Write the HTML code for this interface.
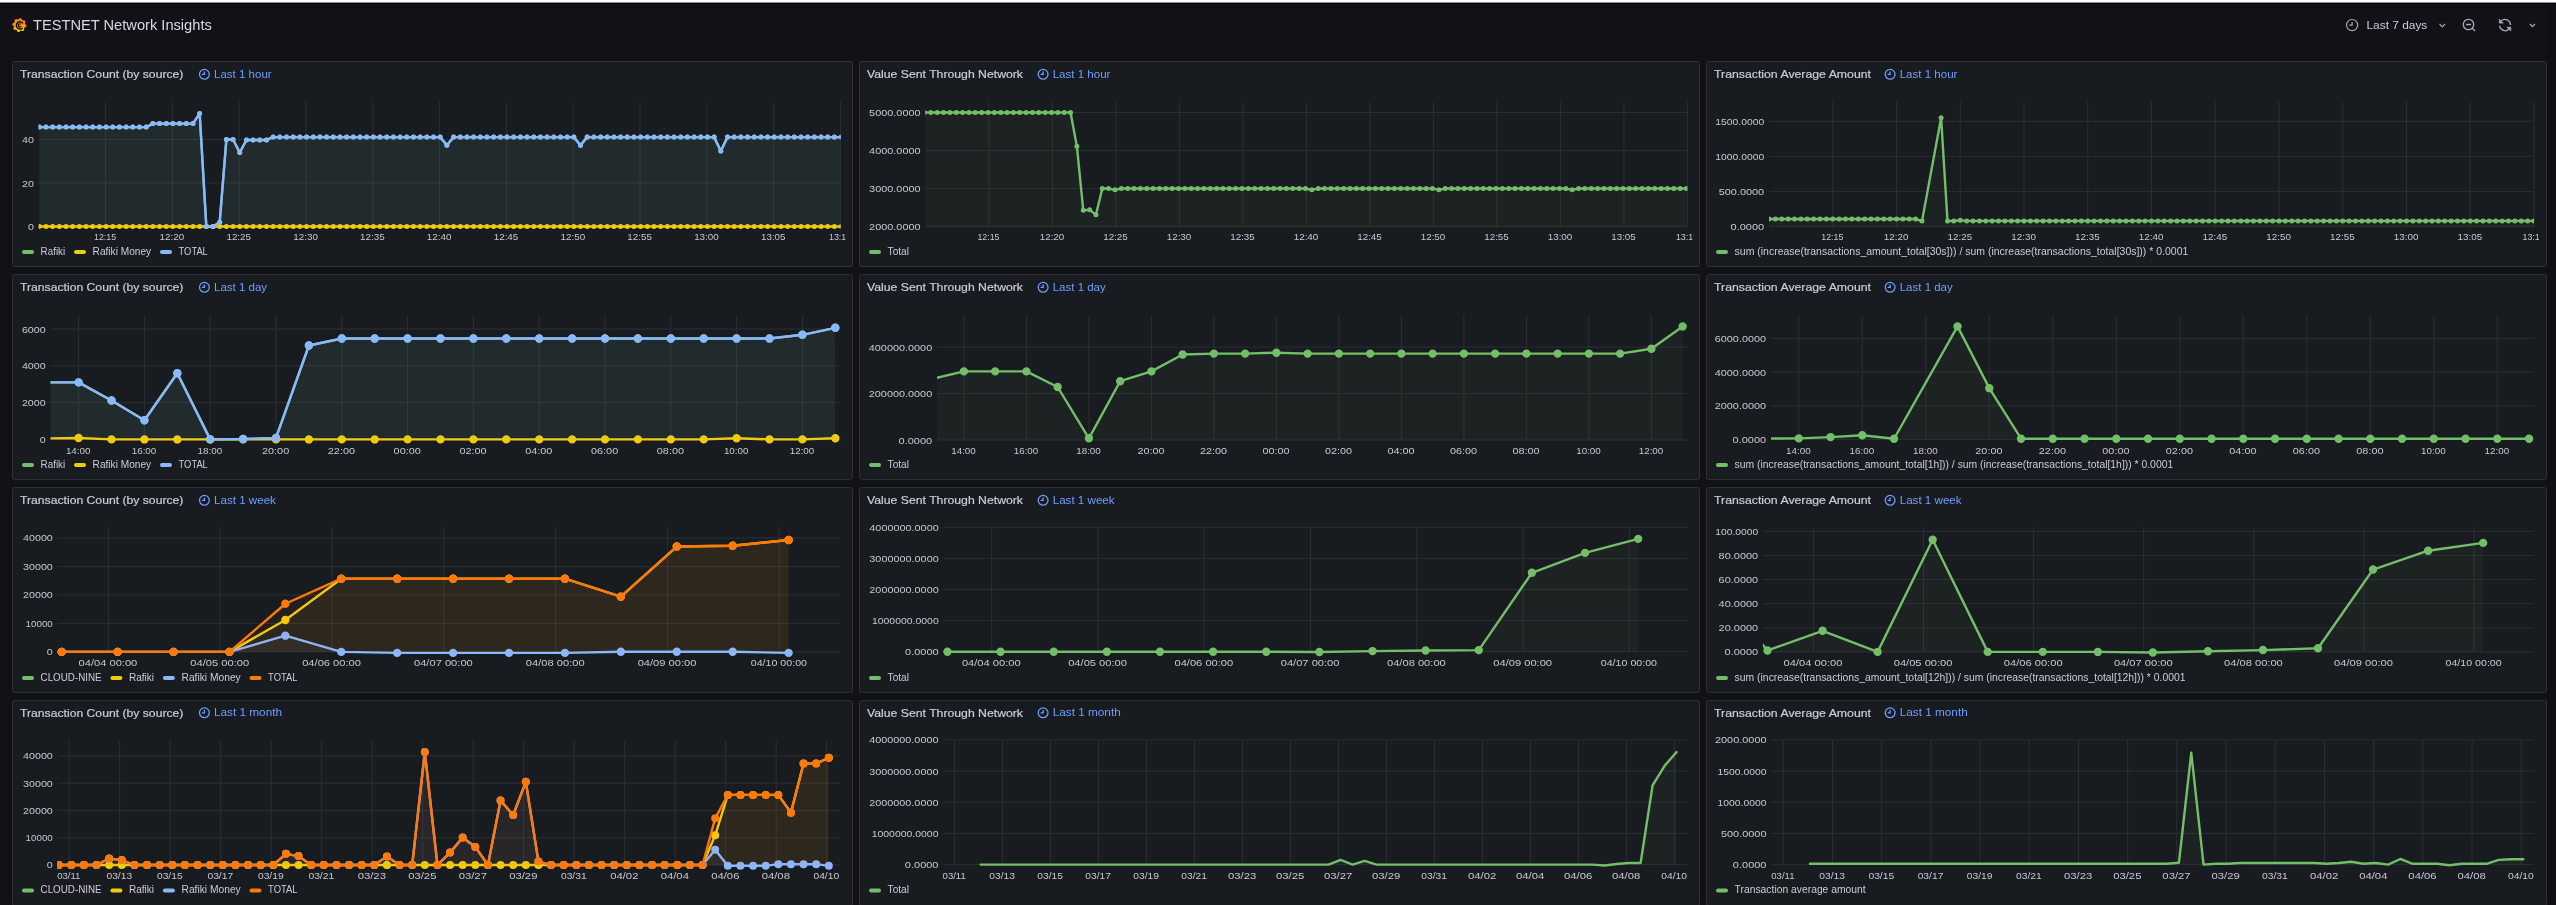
<!DOCTYPE html>
<html><head><meta charset="utf-8"><title>TESTNET Network Insights</title>
<style>html,body{margin:0;padding:0;background:#111217;width:2556px;height:905px;overflow:hidden}
svg{display:block;font-family:"Liberation Sans", sans-serif;will-change:transform}</style></head>
<body><svg width="2556" height="905" viewBox="0 0 2556 905">
<defs><linearGradient id="lg" gradientUnits="userSpaceOnUse" x1="0" y1="18" x2="0" y2="32"><stop offset="0" stop-color="#f47a24"/><stop offset="0.55" stop-color="#f98f1c"/><stop offset="1" stop-color="#f9d40c"/></linearGradient><clipPath id="c1"><rect x="13" y="211" width="832.5" height="40"/></clipPath><clipPath id="c2"><rect x="38.7" y="95.8" width="801.8" height="137.2"/></clipPath><clipPath id="c3"><rect x="860" y="211" width="832.4" height="40"/></clipPath><clipPath id="c4"><rect x="925.4" y="95.8" width="762" height="137.3"/></clipPath><clipPath id="c5"><rect x="1707" y="211" width="832" height="40"/></clipPath><clipPath id="c6"><rect x="1769" y="95.8" width="765" height="137.2"/></clipPath><clipPath id="c7"><rect x="13" y="424" width="832.4" height="40"/></clipPath><clipPath id="c8"><rect x="50.5" y="308.3" width="789.9" height="136.6"/></clipPath><clipPath id="c9"><rect x="860" y="424" width="832.4" height="40"/></clipPath><clipPath id="c10"><rect x="937" y="308.3" width="750.4" height="137.3"/></clipPath><clipPath id="c11"><rect x="1707" y="424" width="831.9" height="40"/></clipPath><clipPath id="c12"><rect x="1771" y="308.3" width="762.9" height="136.6"/></clipPath><clipPath id="c13"><rect x="13" y="637" width="832.4" height="40"/></clipPath><clipPath id="c14"><rect x="57.6" y="520.8" width="782.8" height="137.1"/></clipPath><clipPath id="c15"><rect x="860" y="637" width="832.4" height="40"/></clipPath><clipPath id="c16"><rect x="943.5" y="520.8" width="743.9" height="136.9"/></clipPath><clipPath id="c17"><rect x="1707" y="637" width="832" height="40"/></clipPath><clipPath id="c18"><rect x="1763" y="520.8" width="771" height="137.1"/></clipPath><clipPath id="c19"><rect x="13" y="849.5" width="832.3" height="40"/></clipPath><clipPath id="c20"><rect x="57.6" y="733.9" width="782.7" height="136.9"/></clipPath><clipPath id="c21"><rect x="860" y="849.5" width="832.3" height="40"/></clipPath><clipPath id="c22"><rect x="943.3" y="733.2" width="744" height="137.2"/></clipPath><clipPath id="c23"><rect x="1707" y="849.5" width="832" height="40"/></clipPath><clipPath id="c24"><rect x="1771.3" y="733.2" width="762.7" height="137.2"/></clipPath></defs>
<rect width="2556" height="905" fill="#111217"/><rect x="2547" y="4" width="9" height="901" fill="#0f1014"/>
<rect x="0" y="0" width="2556" height="2" fill="#ffffff"/><rect x="0" y="2" width="2556" height="1" fill="#8e8f93"/><rect x="0" y="3" width="2556" height="1" fill="#05060a"/><g fill="url(#lg)"><circle cx="19.4" cy="25.0" r="5.9"/><circle cx="20.24" cy="19.46" r="1.5"/><circle cx="23.91" cy="21.68" r="1.5"/><circle cx="24.94" cy="25.84" r="1.5"/><circle cx="22.72" cy="29.51" r="1.5"/><circle cx="18.56" cy="30.54" r="1.5"/><circle cx="14.89" cy="28.32" r="1.5"/><circle cx="13.86" cy="24.16" r="1.5"/><circle cx="16.08" cy="20.49" r="1.5"/></g><path d="M22.95 23.34A3.6 3.6 0 1 0 22.55 27.95" fill="none" stroke="#0d0e12" stroke-width="1.4"/><path d="M20.55 24.2A1.5 1.5 0 1 0 21.1 26.25" fill="none" stroke="#0d0e12" stroke-width="1.2"/><text x="33" y="29.8" font-size="14.8" fill="#d8d9e3" textLength="178.8" lengthAdjust="spacingAndGlyphs">TESTNET Network Insights</text><circle cx="2352.1" cy="25.1" r="5.6" fill="none" stroke="#a8a9b3" stroke-width="1.2"/><path d="M2352.1 22.02V25.1H2349.3" fill="none" stroke="#a8a9b3" stroke-width="1.2"/><text x="2366.5" y="28.9" font-size="11.6" fill="#ccccdc" textLength="60.8" lengthAdjust="spacingAndGlyphs">Last 7 days</text><path d="M2439.5 23.9L2442.3 26.8L2445.1 23.9" fill="none" stroke="#a8a9b3" stroke-width="1.2"/><circle cx="2468.5" cy="24.5" r="5.2" fill="none" stroke="#a8a9b3" stroke-width="1.3"/><path d="M2466 24.5H2471M2472.3 28.3L2475 31" stroke="#a8a9b3" stroke-width="1.3" fill="none"/><path d="M2510.5 25A5.6 5.6 0 0 0 2501 21M2499.6 25.8A5.6 5.6 0 0 0 2509 29.3" fill="none" stroke="#a8a9b3" stroke-width="1.3"/><path d="M2499.3 19.2L2499.4 23.2L2503.3 23.0Z M2510.9 31L2510.7 27L2506.8 27.3Z" fill="#a8a9b3" stroke="#a8a9b3" stroke-width="0.6"/><path d="M2529.8 24L2532.4 26.6L2535 24" fill="none" stroke="#a8a9b3" stroke-width="1.2"/><rect x="12.5" y="61.5" width="840" height="205" rx="2" fill="#181b1f" stroke="#2e3035" stroke-width="1"/><text x="20" y="78" font-size="11.4" fill="#ccccdc" textLength="163.4" lengthAdjust="spacingAndGlyphs" stroke="#ccccdc" stroke-width="0.2">Transaction Count (by source)</text><circle cx="204.4" cy="74.3" r="4.9" fill="none" stroke="#6e9fff" stroke-width="1.3"/><path d="M204.4 71.6V74.3H201.95" fill="none" stroke="#6e9fff" stroke-width="1.3"/><text x="214" y="77.9" font-size="11.5" fill="#6e9fff" textLength="57.7" lengthAdjust="spacingAndGlyphs">Last 1 hour</text><g transform="translate(0,0)"><path d="M38.7 226.5H840.5M38.7 183H840.5M38.7 139.5H840.5M105.52 101.8V227M172.33 101.8V227M239.14 101.8V227M305.96 101.8V227M372.77 101.8V227M439.59 101.8V227M506.4 101.8V227M573.22 101.8V227M640.04 101.8V227M706.85 101.8V227M773.66 101.8V227M840.48 101.8V227" stroke="#2c2e33" stroke-width="1" fill="none"/><text x="33.9" y="230" font-size="9.9" fill="#c7c8d2" text-anchor="end" textLength="5.95" lengthAdjust="spacingAndGlyphs">0</text><text x="33.9" y="186.5" font-size="9.9" fill="#c7c8d2" text-anchor="end" textLength="11.9" lengthAdjust="spacingAndGlyphs">20</text><text x="33.9" y="143" font-size="9.9" fill="#c7c8d2" text-anchor="end" textLength="11.9" lengthAdjust="spacingAndGlyphs">40</text></g><text x="105.11" y="240" font-size="9.9" fill="#c7c8d2" text-anchor="middle" textLength="22.1" lengthAdjust="spacingAndGlyphs" clip-path="url(#c1)">12:15</text><text x="171.93" y="240" font-size="9.9" fill="#c7c8d2" text-anchor="middle" textLength="24.65" lengthAdjust="spacingAndGlyphs" clip-path="url(#c1)">12:20</text><text x="238.74" y="240" font-size="9.9" fill="#c7c8d2" text-anchor="middle" textLength="24.65" lengthAdjust="spacingAndGlyphs" clip-path="url(#c1)">12:25</text><text x="305.56" y="240" font-size="9.9" fill="#c7c8d2" text-anchor="middle" textLength="24.65" lengthAdjust="spacingAndGlyphs" clip-path="url(#c1)">12:30</text><text x="372.38" y="240" font-size="9.9" fill="#c7c8d2" text-anchor="middle" textLength="24.65" lengthAdjust="spacingAndGlyphs" clip-path="url(#c1)">12:35</text><text x="439.19" y="240" font-size="9.9" fill="#c7c8d2" text-anchor="middle" textLength="24.65" lengthAdjust="spacingAndGlyphs" clip-path="url(#c1)">12:40</text><text x="506" y="240" font-size="9.9" fill="#c7c8d2" text-anchor="middle" textLength="24.65" lengthAdjust="spacingAndGlyphs" clip-path="url(#c1)">12:45</text><text x="572.82" y="240" font-size="9.9" fill="#c7c8d2" text-anchor="middle" textLength="24.65" lengthAdjust="spacingAndGlyphs" clip-path="url(#c1)">12:50</text><text x="639.64" y="240" font-size="9.9" fill="#c7c8d2" text-anchor="middle" textLength="24.65" lengthAdjust="spacingAndGlyphs" clip-path="url(#c1)">12:55</text><text x="706.45" y="240" font-size="9.9" fill="#c7c8d2" text-anchor="middle" textLength="24.65" lengthAdjust="spacingAndGlyphs" clip-path="url(#c1)">13:00</text><text x="773.26" y="240" font-size="9.9" fill="#c7c8d2" text-anchor="middle" textLength="24.65" lengthAdjust="spacingAndGlyphs" clip-path="url(#c1)">13:05</text><text x="840.08" y="240" font-size="9.9" fill="#c7c8d2" text-anchor="middle" textLength="22.1" lengthAdjust="spacingAndGlyphs" clip-path="url(#c1)">13:10</text><g transform="translate(0,0)"><g clip-path="url(#c2)"><path d="M39.3 226.5 L39.3 127.1 L45.98 127.1 L52.66 127.1 L59.34 127.1 L66.03 127.1 L72.71 127.1 L79.39 127.1 L86.07 127.1 L92.75 127.1 L99.43 127.1 L106.11 127.1 L112.8 127.1 L119.48 127.1 L126.16 127.1 L132.84 127.1 L139.52 127.1 L146.2 127.1 L152.89 123.62 L159.57 123.62 L166.25 123.62 L172.93 123.62 L179.61 123.62 L186.29 123.62 L192.97 123.62 L199.66 113.4 L206.34 226.5 L213.02 226.5 L219.7 222.15 L226.38 139.5 L233.06 139.5 L239.75 152.55 L246.43 139.94 L253.11 139.94 L259.79 139.94 L266.47 139.94 L273.15 137.11 L279.83 137.11 L286.52 137.11 L293.2 137.11 L299.88 137.11 L306.56 137.11 L313.24 137.11 L319.92 137.11 L326.6 137.11 L333.29 137.11 L339.97 137.11 L346.65 137.11 L353.33 137.11 L360.01 137.11 L366.69 137.11 L373.38 137.11 L380.06 137.11 L386.74 137.11 L393.42 137.11 L400.1 137.11 L406.78 137.11 L413.46 137.11 L420.15 137.11 L426.83 137.11 L433.51 137.11 L440.19 137.11 L446.87 145.16 L453.55 137.11 L460.23 137.11 L466.92 137.11 L473.6 137.11 L480.28 137.11 L486.96 137.11 L493.64 137.11 L500.32 137.11 L507 137.11 L513.69 137.11 L520.37 137.11 L527.05 137.11 L533.73 137.11 L540.41 137.11 L547.09 137.11 L553.78 137.11 L560.46 137.11 L567.14 137.11 L573.82 137.11 L580.5 145.16 L587.18 137.11 L593.86 137.11 L600.55 137.11 L607.23 137.11 L613.91 137.11 L620.59 137.11 L627.27 137.11 L633.95 137.11 L640.63 137.11 L647.32 137.11 L654 137.11 L660.68 137.11 L667.36 137.11 L674.04 137.11 L680.72 137.11 L687.41 137.11 L694.09 137.11 L700.77 137.11 L707.45 137.11 L714.13 137.11 L720.81 151.03 L727.49 137.11 L734.18 137.11 L740.86 137.11 L747.54 137.11 L754.22 137.11 L760.9 137.11 L767.58 137.11 L774.26 137.11 L780.95 137.11 L787.63 137.11 L794.31 137.11 L800.99 137.11 L807.67 137.11 L814.35 137.11 L821.04 137.11 L827.72 137.11 L834.4 137.11 L841.08 137.11 L841.08 226.5 Z" fill="#73bf69" fill-opacity="0.05" stroke="none"/><path d="M39.3 127.1 L45.98 127.1 L52.66 127.1 L59.34 127.1 L66.03 127.1 L72.71 127.1 L79.39 127.1 L86.07 127.1 L92.75 127.1 L99.43 127.1 L106.11 127.1 L112.8 127.1 L119.48 127.1 L126.16 127.1 L132.84 127.1 L139.52 127.1 L146.2 127.1 L152.89 123.62 L159.57 123.62 L166.25 123.62 L172.93 123.62 L179.61 123.62 L186.29 123.62 L192.97 123.62 L199.66 113.4 L206.34 226.5 L213.02 226.5 L219.7 222.15 L226.38 139.5 L233.06 139.5 L239.75 152.55 L246.43 139.94 L253.11 139.94 L259.79 139.94 L266.47 139.94 L273.15 137.11 L279.83 137.11 L286.52 137.11 L293.2 137.11 L299.88 137.11 L306.56 137.11 L313.24 137.11 L319.92 137.11 L326.6 137.11 L333.29 137.11 L339.97 137.11 L346.65 137.11 L353.33 137.11 L360.01 137.11 L366.69 137.11 L373.38 137.11 L380.06 137.11 L386.74 137.11 L393.42 137.11 L400.1 137.11 L406.78 137.11 L413.46 137.11 L420.15 137.11 L426.83 137.11 L433.51 137.11 L440.19 137.11 L446.87 145.16 L453.55 137.11 L460.23 137.11 L466.92 137.11 L473.6 137.11 L480.28 137.11 L486.96 137.11 L493.64 137.11 L500.32 137.11 L507 137.11 L513.69 137.11 L520.37 137.11 L527.05 137.11 L533.73 137.11 L540.41 137.11 L547.09 137.11 L553.78 137.11 L560.46 137.11 L567.14 137.11 L573.82 137.11 L580.5 145.16 L587.18 137.11 L593.86 137.11 L600.55 137.11 L607.23 137.11 L613.91 137.11 L620.59 137.11 L627.27 137.11 L633.95 137.11 L640.63 137.11 L647.32 137.11 L654 137.11 L660.68 137.11 L667.36 137.11 L674.04 137.11 L680.72 137.11 L687.41 137.11 L694.09 137.11 L700.77 137.11 L707.45 137.11 L714.13 137.11 L720.81 151.03 L727.49 137.11 L734.18 137.11 L740.86 137.11 L747.54 137.11 L754.22 137.11 L760.9 137.11 L767.58 137.11 L774.26 137.11 L780.95 137.11 L787.63 137.11 L794.31 137.11 L800.99 137.11 L807.67 137.11 L814.35 137.11 L821.04 137.11 L827.72 137.11 L834.4 137.11 L841.08 137.11" fill="none" stroke="#73bf69" stroke-width="2.4" stroke-linejoin="round" stroke-linecap="round"/><path d="M36.8 127.1a2.5 2.5 0 1 0 5 0a2.5 2.5 0 1 0 -5 0M43.48 127.1a2.5 2.5 0 1 0 5 0a2.5 2.5 0 1 0 -5 0M50.16 127.1a2.5 2.5 0 1 0 5 0a2.5 2.5 0 1 0 -5 0M56.84 127.1a2.5 2.5 0 1 0 5 0a2.5 2.5 0 1 0 -5 0M63.53 127.1a2.5 2.5 0 1 0 5 0a2.5 2.5 0 1 0 -5 0M70.21 127.1a2.5 2.5 0 1 0 5 0a2.5 2.5 0 1 0 -5 0M76.89 127.1a2.5 2.5 0 1 0 5 0a2.5 2.5 0 1 0 -5 0M83.57 127.1a2.5 2.5 0 1 0 5 0a2.5 2.5 0 1 0 -5 0M90.25 127.1a2.5 2.5 0 1 0 5 0a2.5 2.5 0 1 0 -5 0M96.93 127.1a2.5 2.5 0 1 0 5 0a2.5 2.5 0 1 0 -5 0M103.61 127.1a2.5 2.5 0 1 0 5 0a2.5 2.5 0 1 0 -5 0M110.3 127.1a2.5 2.5 0 1 0 5 0a2.5 2.5 0 1 0 -5 0M116.98 127.1a2.5 2.5 0 1 0 5 0a2.5 2.5 0 1 0 -5 0M123.66 127.1a2.5 2.5 0 1 0 5 0a2.5 2.5 0 1 0 -5 0M130.34 127.1a2.5 2.5 0 1 0 5 0a2.5 2.5 0 1 0 -5 0M137.02 127.1a2.5 2.5 0 1 0 5 0a2.5 2.5 0 1 0 -5 0M143.7 127.1a2.5 2.5 0 1 0 5 0a2.5 2.5 0 1 0 -5 0M150.39 123.62a2.5 2.5 0 1 0 5 0a2.5 2.5 0 1 0 -5 0M157.07 123.62a2.5 2.5 0 1 0 5 0a2.5 2.5 0 1 0 -5 0M163.75 123.62a2.5 2.5 0 1 0 5 0a2.5 2.5 0 1 0 -5 0M170.43 123.62a2.5 2.5 0 1 0 5 0a2.5 2.5 0 1 0 -5 0M177.11 123.62a2.5 2.5 0 1 0 5 0a2.5 2.5 0 1 0 -5 0M183.79 123.62a2.5 2.5 0 1 0 5 0a2.5 2.5 0 1 0 -5 0M190.47 123.62a2.5 2.5 0 1 0 5 0a2.5 2.5 0 1 0 -5 0M197.16 113.4a2.5 2.5 0 1 0 5 0a2.5 2.5 0 1 0 -5 0M203.84 226.5a2.5 2.5 0 1 0 5 0a2.5 2.5 0 1 0 -5 0M210.52 226.5a2.5 2.5 0 1 0 5 0a2.5 2.5 0 1 0 -5 0M217.2 222.15a2.5 2.5 0 1 0 5 0a2.5 2.5 0 1 0 -5 0M223.88 139.5a2.5 2.5 0 1 0 5 0a2.5 2.5 0 1 0 -5 0M230.56 139.5a2.5 2.5 0 1 0 5 0a2.5 2.5 0 1 0 -5 0M237.25 152.55a2.5 2.5 0 1 0 5 0a2.5 2.5 0 1 0 -5 0M243.93 139.94a2.5 2.5 0 1 0 5 0a2.5 2.5 0 1 0 -5 0M250.61 139.94a2.5 2.5 0 1 0 5 0a2.5 2.5 0 1 0 -5 0M257.29 139.94a2.5 2.5 0 1 0 5 0a2.5 2.5 0 1 0 -5 0M263.97 139.94a2.5 2.5 0 1 0 5 0a2.5 2.5 0 1 0 -5 0M270.65 137.11a2.5 2.5 0 1 0 5 0a2.5 2.5 0 1 0 -5 0M277.33 137.11a2.5 2.5 0 1 0 5 0a2.5 2.5 0 1 0 -5 0M284.02 137.11a2.5 2.5 0 1 0 5 0a2.5 2.5 0 1 0 -5 0M290.7 137.11a2.5 2.5 0 1 0 5 0a2.5 2.5 0 1 0 -5 0M297.38 137.11a2.5 2.5 0 1 0 5 0a2.5 2.5 0 1 0 -5 0M304.06 137.11a2.5 2.5 0 1 0 5 0a2.5 2.5 0 1 0 -5 0M310.74 137.11a2.5 2.5 0 1 0 5 0a2.5 2.5 0 1 0 -5 0M317.42 137.11a2.5 2.5 0 1 0 5 0a2.5 2.5 0 1 0 -5 0M324.1 137.11a2.5 2.5 0 1 0 5 0a2.5 2.5 0 1 0 -5 0M330.79 137.11a2.5 2.5 0 1 0 5 0a2.5 2.5 0 1 0 -5 0M337.47 137.11a2.5 2.5 0 1 0 5 0a2.5 2.5 0 1 0 -5 0M344.15 137.11a2.5 2.5 0 1 0 5 0a2.5 2.5 0 1 0 -5 0M350.83 137.11a2.5 2.5 0 1 0 5 0a2.5 2.5 0 1 0 -5 0M357.51 137.11a2.5 2.5 0 1 0 5 0a2.5 2.5 0 1 0 -5 0M364.19 137.11a2.5 2.5 0 1 0 5 0a2.5 2.5 0 1 0 -5 0M370.88 137.11a2.5 2.5 0 1 0 5 0a2.5 2.5 0 1 0 -5 0M377.56 137.11a2.5 2.5 0 1 0 5 0a2.5 2.5 0 1 0 -5 0M384.24 137.11a2.5 2.5 0 1 0 5 0a2.5 2.5 0 1 0 -5 0M390.92 137.11a2.5 2.5 0 1 0 5 0a2.5 2.5 0 1 0 -5 0M397.6 137.11a2.5 2.5 0 1 0 5 0a2.5 2.5 0 1 0 -5 0M404.28 137.11a2.5 2.5 0 1 0 5 0a2.5 2.5 0 1 0 -5 0M410.96 137.11a2.5 2.5 0 1 0 5 0a2.5 2.5 0 1 0 -5 0M417.65 137.11a2.5 2.5 0 1 0 5 0a2.5 2.5 0 1 0 -5 0M424.33 137.11a2.5 2.5 0 1 0 5 0a2.5 2.5 0 1 0 -5 0M431.01 137.11a2.5 2.5 0 1 0 5 0a2.5 2.5 0 1 0 -5 0M437.69 137.11a2.5 2.5 0 1 0 5 0a2.5 2.5 0 1 0 -5 0M444.37 145.16a2.5 2.5 0 1 0 5 0a2.5 2.5 0 1 0 -5 0M451.05 137.11a2.5 2.5 0 1 0 5 0a2.5 2.5 0 1 0 -5 0M457.73 137.11a2.5 2.5 0 1 0 5 0a2.5 2.5 0 1 0 -5 0M464.42 137.11a2.5 2.5 0 1 0 5 0a2.5 2.5 0 1 0 -5 0M471.1 137.11a2.5 2.5 0 1 0 5 0a2.5 2.5 0 1 0 -5 0M477.78 137.11a2.5 2.5 0 1 0 5 0a2.5 2.5 0 1 0 -5 0M484.46 137.11a2.5 2.5 0 1 0 5 0a2.5 2.5 0 1 0 -5 0M491.14 137.11a2.5 2.5 0 1 0 5 0a2.5 2.5 0 1 0 -5 0M497.82 137.11a2.5 2.5 0 1 0 5 0a2.5 2.5 0 1 0 -5 0M504.5 137.11a2.5 2.5 0 1 0 5 0a2.5 2.5 0 1 0 -5 0M511.19 137.11a2.5 2.5 0 1 0 5 0a2.5 2.5 0 1 0 -5 0M517.87 137.11a2.5 2.5 0 1 0 5 0a2.5 2.5 0 1 0 -5 0M524.55 137.11a2.5 2.5 0 1 0 5 0a2.5 2.5 0 1 0 -5 0M531.23 137.11a2.5 2.5 0 1 0 5 0a2.5 2.5 0 1 0 -5 0M537.91 137.11a2.5 2.5 0 1 0 5 0a2.5 2.5 0 1 0 -5 0M544.59 137.11a2.5 2.5 0 1 0 5 0a2.5 2.5 0 1 0 -5 0M551.28 137.11a2.5 2.5 0 1 0 5 0a2.5 2.5 0 1 0 -5 0M557.96 137.11a2.5 2.5 0 1 0 5 0a2.5 2.5 0 1 0 -5 0M564.64 137.11a2.5 2.5 0 1 0 5 0a2.5 2.5 0 1 0 -5 0M571.32 137.11a2.5 2.5 0 1 0 5 0a2.5 2.5 0 1 0 -5 0M578 145.16a2.5 2.5 0 1 0 5 0a2.5 2.5 0 1 0 -5 0M584.68 137.11a2.5 2.5 0 1 0 5 0a2.5 2.5 0 1 0 -5 0M591.36 137.11a2.5 2.5 0 1 0 5 0a2.5 2.5 0 1 0 -5 0M598.05 137.11a2.5 2.5 0 1 0 5 0a2.5 2.5 0 1 0 -5 0M604.73 137.11a2.5 2.5 0 1 0 5 0a2.5 2.5 0 1 0 -5 0M611.41 137.11a2.5 2.5 0 1 0 5 0a2.5 2.5 0 1 0 -5 0M618.09 137.11a2.5 2.5 0 1 0 5 0a2.5 2.5 0 1 0 -5 0M624.77 137.11a2.5 2.5 0 1 0 5 0a2.5 2.5 0 1 0 -5 0M631.45 137.11a2.5 2.5 0 1 0 5 0a2.5 2.5 0 1 0 -5 0M638.13 137.11a2.5 2.5 0 1 0 5 0a2.5 2.5 0 1 0 -5 0M644.82 137.11a2.5 2.5 0 1 0 5 0a2.5 2.5 0 1 0 -5 0M651.5 137.11a2.5 2.5 0 1 0 5 0a2.5 2.5 0 1 0 -5 0M658.18 137.11a2.5 2.5 0 1 0 5 0a2.5 2.5 0 1 0 -5 0M664.86 137.11a2.5 2.5 0 1 0 5 0a2.5 2.5 0 1 0 -5 0M671.54 137.11a2.5 2.5 0 1 0 5 0a2.5 2.5 0 1 0 -5 0M678.22 137.11a2.5 2.5 0 1 0 5 0a2.5 2.5 0 1 0 -5 0M684.91 137.11a2.5 2.5 0 1 0 5 0a2.5 2.5 0 1 0 -5 0M691.59 137.11a2.5 2.5 0 1 0 5 0a2.5 2.5 0 1 0 -5 0M698.27 137.11a2.5 2.5 0 1 0 5 0a2.5 2.5 0 1 0 -5 0M704.95 137.11a2.5 2.5 0 1 0 5 0a2.5 2.5 0 1 0 -5 0M711.63 137.11a2.5 2.5 0 1 0 5 0a2.5 2.5 0 1 0 -5 0M718.31 151.03a2.5 2.5 0 1 0 5 0a2.5 2.5 0 1 0 -5 0M724.99 137.11a2.5 2.5 0 1 0 5 0a2.5 2.5 0 1 0 -5 0M731.68 137.11a2.5 2.5 0 1 0 5 0a2.5 2.5 0 1 0 -5 0M738.36 137.11a2.5 2.5 0 1 0 5 0a2.5 2.5 0 1 0 -5 0M745.04 137.11a2.5 2.5 0 1 0 5 0a2.5 2.5 0 1 0 -5 0M751.72 137.11a2.5 2.5 0 1 0 5 0a2.5 2.5 0 1 0 -5 0M758.4 137.11a2.5 2.5 0 1 0 5 0a2.5 2.5 0 1 0 -5 0M765.08 137.11a2.5 2.5 0 1 0 5 0a2.5 2.5 0 1 0 -5 0M771.76 137.11a2.5 2.5 0 1 0 5 0a2.5 2.5 0 1 0 -5 0M778.45 137.11a2.5 2.5 0 1 0 5 0a2.5 2.5 0 1 0 -5 0M785.13 137.11a2.5 2.5 0 1 0 5 0a2.5 2.5 0 1 0 -5 0M791.81 137.11a2.5 2.5 0 1 0 5 0a2.5 2.5 0 1 0 -5 0M798.49 137.11a2.5 2.5 0 1 0 5 0a2.5 2.5 0 1 0 -5 0M805.17 137.11a2.5 2.5 0 1 0 5 0a2.5 2.5 0 1 0 -5 0M811.85 137.11a2.5 2.5 0 1 0 5 0a2.5 2.5 0 1 0 -5 0M818.54 137.11a2.5 2.5 0 1 0 5 0a2.5 2.5 0 1 0 -5 0M825.22 137.11a2.5 2.5 0 1 0 5 0a2.5 2.5 0 1 0 -5 0M831.9 137.11a2.5 2.5 0 1 0 5 0a2.5 2.5 0 1 0 -5 0M838.58 137.11a2.5 2.5 0 1 0 5 0a2.5 2.5 0 1 0 -5 0" fill="#73bf69"/></g><g clip-path="url(#c2)"><path d="M39.3 226.5 L39.3 226.5 L45.98 226.5 L52.66 226.5 L59.34 226.5 L66.03 226.5 L72.71 226.5 L79.39 226.5 L86.07 226.5 L92.75 226.5 L99.43 226.5 L106.11 226.5 L112.8 226.5 L119.48 226.5 L126.16 226.5 L132.84 226.5 L139.52 226.5 L146.2 226.5 L152.89 226.5 L159.57 226.5 L166.25 226.5 L172.93 226.5 L179.61 226.5 L186.29 226.5 L192.97 226.5 L199.66 226.5 L206.34 226.5 L213.02 226.5 L219.7 226.5 L226.38 226.5 L233.06 226.5 L239.75 226.5 L246.43 226.5 L253.11 226.5 L259.79 226.5 L266.47 226.5 L273.15 226.5 L279.83 226.5 L286.52 226.5 L293.2 226.5 L299.88 226.5 L306.56 226.5 L313.24 226.5 L319.92 226.5 L326.6 226.5 L333.29 226.5 L339.97 226.5 L346.65 226.5 L353.33 226.5 L360.01 226.5 L366.69 226.5 L373.38 226.5 L380.06 226.5 L386.74 226.5 L393.42 226.5 L400.1 226.5 L406.78 226.5 L413.46 226.5 L420.15 226.5 L426.83 226.5 L433.51 226.5 L440.19 226.5 L446.87 226.5 L453.55 226.5 L460.23 226.5 L466.92 226.5 L473.6 226.5 L480.28 226.5 L486.96 226.5 L493.64 226.5 L500.32 226.5 L507 226.5 L513.69 226.5 L520.37 226.5 L527.05 226.5 L533.73 226.5 L540.41 226.5 L547.09 226.5 L553.78 226.5 L560.46 226.5 L567.14 226.5 L573.82 226.5 L580.5 226.5 L587.18 226.5 L593.86 226.5 L600.55 226.5 L607.23 226.5 L613.91 226.5 L620.59 226.5 L627.27 226.5 L633.95 226.5 L640.63 226.5 L647.32 226.5 L654 226.5 L660.68 226.5 L667.36 226.5 L674.04 226.5 L680.72 226.5 L687.41 226.5 L694.09 226.5 L700.77 226.5 L707.45 226.5 L714.13 226.5 L720.81 226.5 L727.49 226.5 L734.18 226.5 L740.86 226.5 L747.54 226.5 L754.22 226.5 L760.9 226.5 L767.58 226.5 L774.26 226.5 L780.95 226.5 L787.63 226.5 L794.31 226.5 L800.99 226.5 L807.67 226.5 L814.35 226.5 L821.04 226.5 L827.72 226.5 L834.4 226.5 L841.08 226.5 L841.08 226.5 Z" fill="#f2cc0c" fill-opacity="0.05" stroke="none"/><path d="M39.3 226.5 L45.98 226.5 L52.66 226.5 L59.34 226.5 L66.03 226.5 L72.71 226.5 L79.39 226.5 L86.07 226.5 L92.75 226.5 L99.43 226.5 L106.11 226.5 L112.8 226.5 L119.48 226.5 L126.16 226.5 L132.84 226.5 L139.52 226.5 L146.2 226.5 L152.89 226.5 L159.57 226.5 L166.25 226.5 L172.93 226.5 L179.61 226.5 L186.29 226.5 L192.97 226.5 L199.66 226.5 L206.34 226.5 L213.02 226.5 L219.7 226.5 L226.38 226.5 L233.06 226.5 L239.75 226.5 L246.43 226.5 L253.11 226.5 L259.79 226.5 L266.47 226.5 L273.15 226.5 L279.83 226.5 L286.52 226.5 L293.2 226.5 L299.88 226.5 L306.56 226.5 L313.24 226.5 L319.92 226.5 L326.6 226.5 L333.29 226.5 L339.97 226.5 L346.65 226.5 L353.33 226.5 L360.01 226.5 L366.69 226.5 L373.38 226.5 L380.06 226.5 L386.74 226.5 L393.42 226.5 L400.1 226.5 L406.78 226.5 L413.46 226.5 L420.15 226.5 L426.83 226.5 L433.51 226.5 L440.19 226.5 L446.87 226.5 L453.55 226.5 L460.23 226.5 L466.92 226.5 L473.6 226.5 L480.28 226.5 L486.96 226.5 L493.64 226.5 L500.32 226.5 L507 226.5 L513.69 226.5 L520.37 226.5 L527.05 226.5 L533.73 226.5 L540.41 226.5 L547.09 226.5 L553.78 226.5 L560.46 226.5 L567.14 226.5 L573.82 226.5 L580.5 226.5 L587.18 226.5 L593.86 226.5 L600.55 226.5 L607.23 226.5 L613.91 226.5 L620.59 226.5 L627.27 226.5 L633.95 226.5 L640.63 226.5 L647.32 226.5 L654 226.5 L660.68 226.5 L667.36 226.5 L674.04 226.5 L680.72 226.5 L687.41 226.5 L694.09 226.5 L700.77 226.5 L707.45 226.5 L714.13 226.5 L720.81 226.5 L727.49 226.5 L734.18 226.5 L740.86 226.5 L747.54 226.5 L754.22 226.5 L760.9 226.5 L767.58 226.5 L774.26 226.5 L780.95 226.5 L787.63 226.5 L794.31 226.5 L800.99 226.5 L807.67 226.5 L814.35 226.5 L821.04 226.5 L827.72 226.5 L834.4 226.5 L841.08 226.5" fill="none" stroke="#f2cc0c" stroke-width="2.4" stroke-linejoin="round" stroke-linecap="round"/><path d="M36.8 226.5a2.5 2.5 0 1 0 5 0a2.5 2.5 0 1 0 -5 0M43.48 226.5a2.5 2.5 0 1 0 5 0a2.5 2.5 0 1 0 -5 0M50.16 226.5a2.5 2.5 0 1 0 5 0a2.5 2.5 0 1 0 -5 0M56.84 226.5a2.5 2.5 0 1 0 5 0a2.5 2.5 0 1 0 -5 0M63.53 226.5a2.5 2.5 0 1 0 5 0a2.5 2.5 0 1 0 -5 0M70.21 226.5a2.5 2.5 0 1 0 5 0a2.5 2.5 0 1 0 -5 0M76.89 226.5a2.5 2.5 0 1 0 5 0a2.5 2.5 0 1 0 -5 0M83.57 226.5a2.5 2.5 0 1 0 5 0a2.5 2.5 0 1 0 -5 0M90.25 226.5a2.5 2.5 0 1 0 5 0a2.5 2.5 0 1 0 -5 0M96.93 226.5a2.5 2.5 0 1 0 5 0a2.5 2.5 0 1 0 -5 0M103.61 226.5a2.5 2.5 0 1 0 5 0a2.5 2.5 0 1 0 -5 0M110.3 226.5a2.5 2.5 0 1 0 5 0a2.5 2.5 0 1 0 -5 0M116.98 226.5a2.5 2.5 0 1 0 5 0a2.5 2.5 0 1 0 -5 0M123.66 226.5a2.5 2.5 0 1 0 5 0a2.5 2.5 0 1 0 -5 0M130.34 226.5a2.5 2.5 0 1 0 5 0a2.5 2.5 0 1 0 -5 0M137.02 226.5a2.5 2.5 0 1 0 5 0a2.5 2.5 0 1 0 -5 0M143.7 226.5a2.5 2.5 0 1 0 5 0a2.5 2.5 0 1 0 -5 0M150.39 226.5a2.5 2.5 0 1 0 5 0a2.5 2.5 0 1 0 -5 0M157.07 226.5a2.5 2.5 0 1 0 5 0a2.5 2.5 0 1 0 -5 0M163.75 226.5a2.5 2.5 0 1 0 5 0a2.5 2.5 0 1 0 -5 0M170.43 226.5a2.5 2.5 0 1 0 5 0a2.5 2.5 0 1 0 -5 0M177.11 226.5a2.5 2.5 0 1 0 5 0a2.5 2.5 0 1 0 -5 0M183.79 226.5a2.5 2.5 0 1 0 5 0a2.5 2.5 0 1 0 -5 0M190.47 226.5a2.5 2.5 0 1 0 5 0a2.5 2.5 0 1 0 -5 0M197.16 226.5a2.5 2.5 0 1 0 5 0a2.5 2.5 0 1 0 -5 0M203.84 226.5a2.5 2.5 0 1 0 5 0a2.5 2.5 0 1 0 -5 0M210.52 226.5a2.5 2.5 0 1 0 5 0a2.5 2.5 0 1 0 -5 0M217.2 226.5a2.5 2.5 0 1 0 5 0a2.5 2.5 0 1 0 -5 0M223.88 226.5a2.5 2.5 0 1 0 5 0a2.5 2.5 0 1 0 -5 0M230.56 226.5a2.5 2.5 0 1 0 5 0a2.5 2.5 0 1 0 -5 0M237.25 226.5a2.5 2.5 0 1 0 5 0a2.5 2.5 0 1 0 -5 0M243.93 226.5a2.5 2.5 0 1 0 5 0a2.5 2.5 0 1 0 -5 0M250.61 226.5a2.5 2.5 0 1 0 5 0a2.5 2.5 0 1 0 -5 0M257.29 226.5a2.5 2.5 0 1 0 5 0a2.5 2.5 0 1 0 -5 0M263.97 226.5a2.5 2.5 0 1 0 5 0a2.5 2.5 0 1 0 -5 0M270.65 226.5a2.5 2.5 0 1 0 5 0a2.5 2.5 0 1 0 -5 0M277.33 226.5a2.5 2.5 0 1 0 5 0a2.5 2.5 0 1 0 -5 0M284.02 226.5a2.5 2.5 0 1 0 5 0a2.5 2.5 0 1 0 -5 0M290.7 226.5a2.5 2.5 0 1 0 5 0a2.5 2.5 0 1 0 -5 0M297.38 226.5a2.5 2.5 0 1 0 5 0a2.5 2.5 0 1 0 -5 0M304.06 226.5a2.5 2.5 0 1 0 5 0a2.5 2.5 0 1 0 -5 0M310.74 226.5a2.5 2.5 0 1 0 5 0a2.5 2.5 0 1 0 -5 0M317.42 226.5a2.5 2.5 0 1 0 5 0a2.5 2.5 0 1 0 -5 0M324.1 226.5a2.5 2.5 0 1 0 5 0a2.5 2.5 0 1 0 -5 0M330.79 226.5a2.5 2.5 0 1 0 5 0a2.5 2.5 0 1 0 -5 0M337.47 226.5a2.5 2.5 0 1 0 5 0a2.5 2.5 0 1 0 -5 0M344.15 226.5a2.5 2.5 0 1 0 5 0a2.5 2.5 0 1 0 -5 0M350.83 226.5a2.5 2.5 0 1 0 5 0a2.5 2.5 0 1 0 -5 0M357.51 226.5a2.5 2.5 0 1 0 5 0a2.5 2.5 0 1 0 -5 0M364.19 226.5a2.5 2.5 0 1 0 5 0a2.5 2.5 0 1 0 -5 0M370.88 226.5a2.5 2.5 0 1 0 5 0a2.5 2.5 0 1 0 -5 0M377.56 226.5a2.5 2.5 0 1 0 5 0a2.5 2.5 0 1 0 -5 0M384.24 226.5a2.5 2.5 0 1 0 5 0a2.5 2.5 0 1 0 -5 0M390.92 226.5a2.5 2.5 0 1 0 5 0a2.5 2.5 0 1 0 -5 0M397.6 226.5a2.5 2.5 0 1 0 5 0a2.5 2.5 0 1 0 -5 0M404.28 226.5a2.5 2.5 0 1 0 5 0a2.5 2.5 0 1 0 -5 0M410.96 226.5a2.5 2.5 0 1 0 5 0a2.5 2.5 0 1 0 -5 0M417.65 226.5a2.5 2.5 0 1 0 5 0a2.5 2.5 0 1 0 -5 0M424.33 226.5a2.5 2.5 0 1 0 5 0a2.5 2.5 0 1 0 -5 0M431.01 226.5a2.5 2.5 0 1 0 5 0a2.5 2.5 0 1 0 -5 0M437.69 226.5a2.5 2.5 0 1 0 5 0a2.5 2.5 0 1 0 -5 0M444.37 226.5a2.5 2.5 0 1 0 5 0a2.5 2.5 0 1 0 -5 0M451.05 226.5a2.5 2.5 0 1 0 5 0a2.5 2.5 0 1 0 -5 0M457.73 226.5a2.5 2.5 0 1 0 5 0a2.5 2.5 0 1 0 -5 0M464.42 226.5a2.5 2.5 0 1 0 5 0a2.5 2.5 0 1 0 -5 0M471.1 226.5a2.5 2.5 0 1 0 5 0a2.5 2.5 0 1 0 -5 0M477.78 226.5a2.5 2.5 0 1 0 5 0a2.5 2.5 0 1 0 -5 0M484.46 226.5a2.5 2.5 0 1 0 5 0a2.5 2.5 0 1 0 -5 0M491.14 226.5a2.5 2.5 0 1 0 5 0a2.5 2.5 0 1 0 -5 0M497.82 226.5a2.5 2.5 0 1 0 5 0a2.5 2.5 0 1 0 -5 0M504.5 226.5a2.5 2.5 0 1 0 5 0a2.5 2.5 0 1 0 -5 0M511.19 226.5a2.5 2.5 0 1 0 5 0a2.5 2.5 0 1 0 -5 0M517.87 226.5a2.5 2.5 0 1 0 5 0a2.5 2.5 0 1 0 -5 0M524.55 226.5a2.5 2.5 0 1 0 5 0a2.5 2.5 0 1 0 -5 0M531.23 226.5a2.5 2.5 0 1 0 5 0a2.5 2.5 0 1 0 -5 0M537.91 226.5a2.5 2.5 0 1 0 5 0a2.5 2.5 0 1 0 -5 0M544.59 226.5a2.5 2.5 0 1 0 5 0a2.5 2.5 0 1 0 -5 0M551.28 226.5a2.5 2.5 0 1 0 5 0a2.5 2.5 0 1 0 -5 0M557.96 226.5a2.5 2.5 0 1 0 5 0a2.5 2.5 0 1 0 -5 0M564.64 226.5a2.5 2.5 0 1 0 5 0a2.5 2.5 0 1 0 -5 0M571.32 226.5a2.5 2.5 0 1 0 5 0a2.5 2.5 0 1 0 -5 0M578 226.5a2.5 2.5 0 1 0 5 0a2.5 2.5 0 1 0 -5 0M584.68 226.5a2.5 2.5 0 1 0 5 0a2.5 2.5 0 1 0 -5 0M591.36 226.5a2.5 2.5 0 1 0 5 0a2.5 2.5 0 1 0 -5 0M598.05 226.5a2.5 2.5 0 1 0 5 0a2.5 2.5 0 1 0 -5 0M604.73 226.5a2.5 2.5 0 1 0 5 0a2.5 2.5 0 1 0 -5 0M611.41 226.5a2.5 2.5 0 1 0 5 0a2.5 2.5 0 1 0 -5 0M618.09 226.5a2.5 2.5 0 1 0 5 0a2.5 2.5 0 1 0 -5 0M624.77 226.5a2.5 2.5 0 1 0 5 0a2.5 2.5 0 1 0 -5 0M631.45 226.5a2.5 2.5 0 1 0 5 0a2.5 2.5 0 1 0 -5 0M638.13 226.5a2.5 2.5 0 1 0 5 0a2.5 2.5 0 1 0 -5 0M644.82 226.5a2.5 2.5 0 1 0 5 0a2.5 2.5 0 1 0 -5 0M651.5 226.5a2.5 2.5 0 1 0 5 0a2.5 2.5 0 1 0 -5 0M658.18 226.5a2.5 2.5 0 1 0 5 0a2.5 2.5 0 1 0 -5 0M664.86 226.5a2.5 2.5 0 1 0 5 0a2.5 2.5 0 1 0 -5 0M671.54 226.5a2.5 2.5 0 1 0 5 0a2.5 2.5 0 1 0 -5 0M678.22 226.5a2.5 2.5 0 1 0 5 0a2.5 2.5 0 1 0 -5 0M684.91 226.5a2.5 2.5 0 1 0 5 0a2.5 2.5 0 1 0 -5 0M691.59 226.5a2.5 2.5 0 1 0 5 0a2.5 2.5 0 1 0 -5 0M698.27 226.5a2.5 2.5 0 1 0 5 0a2.5 2.5 0 1 0 -5 0M704.95 226.5a2.5 2.5 0 1 0 5 0a2.5 2.5 0 1 0 -5 0M711.63 226.5a2.5 2.5 0 1 0 5 0a2.5 2.5 0 1 0 -5 0M718.31 226.5a2.5 2.5 0 1 0 5 0a2.5 2.5 0 1 0 -5 0M724.99 226.5a2.5 2.5 0 1 0 5 0a2.5 2.5 0 1 0 -5 0M731.68 226.5a2.5 2.5 0 1 0 5 0a2.5 2.5 0 1 0 -5 0M738.36 226.5a2.5 2.5 0 1 0 5 0a2.5 2.5 0 1 0 -5 0M745.04 226.5a2.5 2.5 0 1 0 5 0a2.5 2.5 0 1 0 -5 0M751.72 226.5a2.5 2.5 0 1 0 5 0a2.5 2.5 0 1 0 -5 0M758.4 226.5a2.5 2.5 0 1 0 5 0a2.5 2.5 0 1 0 -5 0M765.08 226.5a2.5 2.5 0 1 0 5 0a2.5 2.5 0 1 0 -5 0M771.76 226.5a2.5 2.5 0 1 0 5 0a2.5 2.5 0 1 0 -5 0M778.45 226.5a2.5 2.5 0 1 0 5 0a2.5 2.5 0 1 0 -5 0M785.13 226.5a2.5 2.5 0 1 0 5 0a2.5 2.5 0 1 0 -5 0M791.81 226.5a2.5 2.5 0 1 0 5 0a2.5 2.5 0 1 0 -5 0M798.49 226.5a2.5 2.5 0 1 0 5 0a2.5 2.5 0 1 0 -5 0M805.17 226.5a2.5 2.5 0 1 0 5 0a2.5 2.5 0 1 0 -5 0M811.85 226.5a2.5 2.5 0 1 0 5 0a2.5 2.5 0 1 0 -5 0M818.54 226.5a2.5 2.5 0 1 0 5 0a2.5 2.5 0 1 0 -5 0M825.22 226.5a2.5 2.5 0 1 0 5 0a2.5 2.5 0 1 0 -5 0M831.9 226.5a2.5 2.5 0 1 0 5 0a2.5 2.5 0 1 0 -5 0M838.58 226.5a2.5 2.5 0 1 0 5 0a2.5 2.5 0 1 0 -5 0" fill="#f2cc0c"/></g><g clip-path="url(#c2)"><path d="M39.3 226.5 L39.3 127.1 L45.98 127.1 L52.66 127.1 L59.34 127.1 L66.03 127.1 L72.71 127.1 L79.39 127.1 L86.07 127.1 L92.75 127.1 L99.43 127.1 L106.11 127.1 L112.8 127.1 L119.48 127.1 L126.16 127.1 L132.84 127.1 L139.52 127.1 L146.2 127.1 L152.89 123.62 L159.57 123.62 L166.25 123.62 L172.93 123.62 L179.61 123.62 L186.29 123.62 L192.97 123.62 L199.66 113.4 L206.34 226.5 L213.02 226.5 L219.7 222.15 L226.38 139.5 L233.06 139.5 L239.75 152.55 L246.43 139.94 L253.11 139.94 L259.79 139.94 L266.47 139.94 L273.15 137.11 L279.83 137.11 L286.52 137.11 L293.2 137.11 L299.88 137.11 L306.56 137.11 L313.24 137.11 L319.92 137.11 L326.6 137.11 L333.29 137.11 L339.97 137.11 L346.65 137.11 L353.33 137.11 L360.01 137.11 L366.69 137.11 L373.38 137.11 L380.06 137.11 L386.74 137.11 L393.42 137.11 L400.1 137.11 L406.78 137.11 L413.46 137.11 L420.15 137.11 L426.83 137.11 L433.51 137.11 L440.19 137.11 L446.87 145.16 L453.55 137.11 L460.23 137.11 L466.92 137.11 L473.6 137.11 L480.28 137.11 L486.96 137.11 L493.64 137.11 L500.32 137.11 L507 137.11 L513.69 137.11 L520.37 137.11 L527.05 137.11 L533.73 137.11 L540.41 137.11 L547.09 137.11 L553.78 137.11 L560.46 137.11 L567.14 137.11 L573.82 137.11 L580.5 145.16 L587.18 137.11 L593.86 137.11 L600.55 137.11 L607.23 137.11 L613.91 137.11 L620.59 137.11 L627.27 137.11 L633.95 137.11 L640.63 137.11 L647.32 137.11 L654 137.11 L660.68 137.11 L667.36 137.11 L674.04 137.11 L680.72 137.11 L687.41 137.11 L694.09 137.11 L700.77 137.11 L707.45 137.11 L714.13 137.11 L720.81 151.03 L727.49 137.11 L734.18 137.11 L740.86 137.11 L747.54 137.11 L754.22 137.11 L760.9 137.11 L767.58 137.11 L774.26 137.11 L780.95 137.11 L787.63 137.11 L794.31 137.11 L800.99 137.11 L807.67 137.11 L814.35 137.11 L821.04 137.11 L827.72 137.11 L834.4 137.11 L841.08 137.11 L841.08 226.5 Z" fill="#8ab8ff" fill-opacity="0.05" stroke="none"/><path d="M39.3 127.1 L45.98 127.1 L52.66 127.1 L59.34 127.1 L66.03 127.1 L72.71 127.1 L79.39 127.1 L86.07 127.1 L92.75 127.1 L99.43 127.1 L106.11 127.1 L112.8 127.1 L119.48 127.1 L126.16 127.1 L132.84 127.1 L139.52 127.1 L146.2 127.1 L152.89 123.62 L159.57 123.62 L166.25 123.62 L172.93 123.62 L179.61 123.62 L186.29 123.62 L192.97 123.62 L199.66 113.4 L206.34 226.5 L213.02 226.5 L219.7 222.15 L226.38 139.5 L233.06 139.5 L239.75 152.55 L246.43 139.94 L253.11 139.94 L259.79 139.94 L266.47 139.94 L273.15 137.11 L279.83 137.11 L286.52 137.11 L293.2 137.11 L299.88 137.11 L306.56 137.11 L313.24 137.11 L319.92 137.11 L326.6 137.11 L333.29 137.11 L339.97 137.11 L346.65 137.11 L353.33 137.11 L360.01 137.11 L366.69 137.11 L373.38 137.11 L380.06 137.11 L386.74 137.11 L393.42 137.11 L400.1 137.11 L406.78 137.11 L413.46 137.11 L420.15 137.11 L426.83 137.11 L433.51 137.11 L440.19 137.11 L446.87 145.16 L453.55 137.11 L460.23 137.11 L466.92 137.11 L473.6 137.11 L480.28 137.11 L486.96 137.11 L493.64 137.11 L500.32 137.11 L507 137.11 L513.69 137.11 L520.37 137.11 L527.05 137.11 L533.73 137.11 L540.41 137.11 L547.09 137.11 L553.78 137.11 L560.46 137.11 L567.14 137.11 L573.82 137.11 L580.5 145.16 L587.18 137.11 L593.86 137.11 L600.55 137.11 L607.23 137.11 L613.91 137.11 L620.59 137.11 L627.27 137.11 L633.95 137.11 L640.63 137.11 L647.32 137.11 L654 137.11 L660.68 137.11 L667.36 137.11 L674.04 137.11 L680.72 137.11 L687.41 137.11 L694.09 137.11 L700.77 137.11 L707.45 137.11 L714.13 137.11 L720.81 151.03 L727.49 137.11 L734.18 137.11 L740.86 137.11 L747.54 137.11 L754.22 137.11 L760.9 137.11 L767.58 137.11 L774.26 137.11 L780.95 137.11 L787.63 137.11 L794.31 137.11 L800.99 137.11 L807.67 137.11 L814.35 137.11 L821.04 137.11 L827.72 137.11 L834.4 137.11 L841.08 137.11" fill="none" stroke="#8ab8ff" stroke-width="2.4" stroke-linejoin="round" stroke-linecap="round"/><path d="M36.8 127.1a2.5 2.5 0 1 0 5 0a2.5 2.5 0 1 0 -5 0M43.48 127.1a2.5 2.5 0 1 0 5 0a2.5 2.5 0 1 0 -5 0M50.16 127.1a2.5 2.5 0 1 0 5 0a2.5 2.5 0 1 0 -5 0M56.84 127.1a2.5 2.5 0 1 0 5 0a2.5 2.5 0 1 0 -5 0M63.53 127.1a2.5 2.5 0 1 0 5 0a2.5 2.5 0 1 0 -5 0M70.21 127.1a2.5 2.5 0 1 0 5 0a2.5 2.5 0 1 0 -5 0M76.89 127.1a2.5 2.5 0 1 0 5 0a2.5 2.5 0 1 0 -5 0M83.57 127.1a2.5 2.5 0 1 0 5 0a2.5 2.5 0 1 0 -5 0M90.25 127.1a2.5 2.5 0 1 0 5 0a2.5 2.5 0 1 0 -5 0M96.93 127.1a2.5 2.5 0 1 0 5 0a2.5 2.5 0 1 0 -5 0M103.61 127.1a2.5 2.5 0 1 0 5 0a2.5 2.5 0 1 0 -5 0M110.3 127.1a2.5 2.5 0 1 0 5 0a2.5 2.5 0 1 0 -5 0M116.98 127.1a2.5 2.5 0 1 0 5 0a2.5 2.5 0 1 0 -5 0M123.66 127.1a2.5 2.5 0 1 0 5 0a2.5 2.5 0 1 0 -5 0M130.34 127.1a2.5 2.5 0 1 0 5 0a2.5 2.5 0 1 0 -5 0M137.02 127.1a2.5 2.5 0 1 0 5 0a2.5 2.5 0 1 0 -5 0M143.7 127.1a2.5 2.5 0 1 0 5 0a2.5 2.5 0 1 0 -5 0M150.39 123.62a2.5 2.5 0 1 0 5 0a2.5 2.5 0 1 0 -5 0M157.07 123.62a2.5 2.5 0 1 0 5 0a2.5 2.5 0 1 0 -5 0M163.75 123.62a2.5 2.5 0 1 0 5 0a2.5 2.5 0 1 0 -5 0M170.43 123.62a2.5 2.5 0 1 0 5 0a2.5 2.5 0 1 0 -5 0M177.11 123.62a2.5 2.5 0 1 0 5 0a2.5 2.5 0 1 0 -5 0M183.79 123.62a2.5 2.5 0 1 0 5 0a2.5 2.5 0 1 0 -5 0M190.47 123.62a2.5 2.5 0 1 0 5 0a2.5 2.5 0 1 0 -5 0M197.16 113.4a2.5 2.5 0 1 0 5 0a2.5 2.5 0 1 0 -5 0M203.84 226.5a2.5 2.5 0 1 0 5 0a2.5 2.5 0 1 0 -5 0M210.52 226.5a2.5 2.5 0 1 0 5 0a2.5 2.5 0 1 0 -5 0M217.2 222.15a2.5 2.5 0 1 0 5 0a2.5 2.5 0 1 0 -5 0M223.88 139.5a2.5 2.5 0 1 0 5 0a2.5 2.5 0 1 0 -5 0M230.56 139.5a2.5 2.5 0 1 0 5 0a2.5 2.5 0 1 0 -5 0M237.25 152.55a2.5 2.5 0 1 0 5 0a2.5 2.5 0 1 0 -5 0M243.93 139.94a2.5 2.5 0 1 0 5 0a2.5 2.5 0 1 0 -5 0M250.61 139.94a2.5 2.5 0 1 0 5 0a2.5 2.5 0 1 0 -5 0M257.29 139.94a2.5 2.5 0 1 0 5 0a2.5 2.5 0 1 0 -5 0M263.97 139.94a2.5 2.5 0 1 0 5 0a2.5 2.5 0 1 0 -5 0M270.65 137.11a2.5 2.5 0 1 0 5 0a2.5 2.5 0 1 0 -5 0M277.33 137.11a2.5 2.5 0 1 0 5 0a2.5 2.5 0 1 0 -5 0M284.02 137.11a2.5 2.5 0 1 0 5 0a2.5 2.5 0 1 0 -5 0M290.7 137.11a2.5 2.5 0 1 0 5 0a2.5 2.5 0 1 0 -5 0M297.38 137.11a2.5 2.5 0 1 0 5 0a2.5 2.5 0 1 0 -5 0M304.06 137.11a2.5 2.5 0 1 0 5 0a2.5 2.5 0 1 0 -5 0M310.74 137.11a2.5 2.5 0 1 0 5 0a2.5 2.5 0 1 0 -5 0M317.42 137.11a2.5 2.5 0 1 0 5 0a2.5 2.5 0 1 0 -5 0M324.1 137.11a2.5 2.5 0 1 0 5 0a2.5 2.5 0 1 0 -5 0M330.79 137.11a2.5 2.5 0 1 0 5 0a2.5 2.5 0 1 0 -5 0M337.47 137.11a2.5 2.5 0 1 0 5 0a2.5 2.5 0 1 0 -5 0M344.15 137.11a2.5 2.5 0 1 0 5 0a2.5 2.5 0 1 0 -5 0M350.83 137.11a2.5 2.5 0 1 0 5 0a2.5 2.5 0 1 0 -5 0M357.51 137.11a2.5 2.5 0 1 0 5 0a2.5 2.5 0 1 0 -5 0M364.19 137.11a2.5 2.5 0 1 0 5 0a2.5 2.5 0 1 0 -5 0M370.88 137.11a2.5 2.5 0 1 0 5 0a2.5 2.5 0 1 0 -5 0M377.56 137.11a2.5 2.5 0 1 0 5 0a2.5 2.5 0 1 0 -5 0M384.24 137.11a2.5 2.5 0 1 0 5 0a2.5 2.5 0 1 0 -5 0M390.92 137.11a2.5 2.5 0 1 0 5 0a2.5 2.5 0 1 0 -5 0M397.6 137.11a2.5 2.5 0 1 0 5 0a2.5 2.5 0 1 0 -5 0M404.28 137.11a2.5 2.5 0 1 0 5 0a2.5 2.5 0 1 0 -5 0M410.96 137.11a2.5 2.5 0 1 0 5 0a2.5 2.5 0 1 0 -5 0M417.65 137.11a2.5 2.5 0 1 0 5 0a2.5 2.5 0 1 0 -5 0M424.33 137.11a2.5 2.5 0 1 0 5 0a2.5 2.5 0 1 0 -5 0M431.01 137.11a2.5 2.5 0 1 0 5 0a2.5 2.5 0 1 0 -5 0M437.69 137.11a2.5 2.5 0 1 0 5 0a2.5 2.5 0 1 0 -5 0M444.37 145.16a2.5 2.5 0 1 0 5 0a2.5 2.5 0 1 0 -5 0M451.05 137.11a2.5 2.5 0 1 0 5 0a2.5 2.5 0 1 0 -5 0M457.73 137.11a2.5 2.5 0 1 0 5 0a2.5 2.5 0 1 0 -5 0M464.42 137.11a2.5 2.5 0 1 0 5 0a2.5 2.5 0 1 0 -5 0M471.1 137.11a2.5 2.5 0 1 0 5 0a2.5 2.5 0 1 0 -5 0M477.78 137.11a2.5 2.5 0 1 0 5 0a2.5 2.5 0 1 0 -5 0M484.46 137.11a2.5 2.5 0 1 0 5 0a2.5 2.5 0 1 0 -5 0M491.14 137.11a2.5 2.5 0 1 0 5 0a2.5 2.5 0 1 0 -5 0M497.82 137.11a2.5 2.5 0 1 0 5 0a2.5 2.5 0 1 0 -5 0M504.5 137.11a2.5 2.5 0 1 0 5 0a2.5 2.5 0 1 0 -5 0M511.19 137.11a2.5 2.5 0 1 0 5 0a2.5 2.5 0 1 0 -5 0M517.87 137.11a2.5 2.5 0 1 0 5 0a2.5 2.5 0 1 0 -5 0M524.55 137.11a2.5 2.5 0 1 0 5 0a2.5 2.5 0 1 0 -5 0M531.23 137.11a2.5 2.5 0 1 0 5 0a2.5 2.5 0 1 0 -5 0M537.91 137.11a2.5 2.5 0 1 0 5 0a2.5 2.5 0 1 0 -5 0M544.59 137.11a2.5 2.5 0 1 0 5 0a2.5 2.5 0 1 0 -5 0M551.28 137.11a2.5 2.5 0 1 0 5 0a2.5 2.5 0 1 0 -5 0M557.96 137.11a2.5 2.5 0 1 0 5 0a2.5 2.5 0 1 0 -5 0M564.64 137.11a2.5 2.5 0 1 0 5 0a2.5 2.5 0 1 0 -5 0M571.32 137.11a2.5 2.5 0 1 0 5 0a2.5 2.5 0 1 0 -5 0M578 145.16a2.5 2.5 0 1 0 5 0a2.5 2.5 0 1 0 -5 0M584.68 137.11a2.5 2.5 0 1 0 5 0a2.5 2.5 0 1 0 -5 0M591.36 137.11a2.5 2.5 0 1 0 5 0a2.5 2.5 0 1 0 -5 0M598.05 137.11a2.5 2.5 0 1 0 5 0a2.5 2.5 0 1 0 -5 0M604.73 137.11a2.5 2.5 0 1 0 5 0a2.5 2.5 0 1 0 -5 0M611.41 137.11a2.5 2.5 0 1 0 5 0a2.5 2.5 0 1 0 -5 0M618.09 137.11a2.5 2.5 0 1 0 5 0a2.5 2.5 0 1 0 -5 0M624.77 137.11a2.5 2.5 0 1 0 5 0a2.5 2.5 0 1 0 -5 0M631.45 137.11a2.5 2.5 0 1 0 5 0a2.5 2.5 0 1 0 -5 0M638.13 137.11a2.5 2.5 0 1 0 5 0a2.5 2.5 0 1 0 -5 0M644.82 137.11a2.5 2.5 0 1 0 5 0a2.5 2.5 0 1 0 -5 0M651.5 137.11a2.5 2.5 0 1 0 5 0a2.5 2.5 0 1 0 -5 0M658.18 137.11a2.5 2.5 0 1 0 5 0a2.5 2.5 0 1 0 -5 0M664.86 137.11a2.5 2.5 0 1 0 5 0a2.5 2.5 0 1 0 -5 0M671.54 137.11a2.5 2.5 0 1 0 5 0a2.5 2.5 0 1 0 -5 0M678.22 137.11a2.5 2.5 0 1 0 5 0a2.5 2.5 0 1 0 -5 0M684.91 137.11a2.5 2.5 0 1 0 5 0a2.5 2.5 0 1 0 -5 0M691.59 137.11a2.5 2.5 0 1 0 5 0a2.5 2.5 0 1 0 -5 0M698.27 137.11a2.5 2.5 0 1 0 5 0a2.5 2.5 0 1 0 -5 0M704.95 137.11a2.5 2.5 0 1 0 5 0a2.5 2.5 0 1 0 -5 0M711.63 137.11a2.5 2.5 0 1 0 5 0a2.5 2.5 0 1 0 -5 0M718.31 151.03a2.5 2.5 0 1 0 5 0a2.5 2.5 0 1 0 -5 0M724.99 137.11a2.5 2.5 0 1 0 5 0a2.5 2.5 0 1 0 -5 0M731.68 137.11a2.5 2.5 0 1 0 5 0a2.5 2.5 0 1 0 -5 0M738.36 137.11a2.5 2.5 0 1 0 5 0a2.5 2.5 0 1 0 -5 0M745.04 137.11a2.5 2.5 0 1 0 5 0a2.5 2.5 0 1 0 -5 0M751.72 137.11a2.5 2.5 0 1 0 5 0a2.5 2.5 0 1 0 -5 0M758.4 137.11a2.5 2.5 0 1 0 5 0a2.5 2.5 0 1 0 -5 0M765.08 137.11a2.5 2.5 0 1 0 5 0a2.5 2.5 0 1 0 -5 0M771.76 137.11a2.5 2.5 0 1 0 5 0a2.5 2.5 0 1 0 -5 0M778.45 137.11a2.5 2.5 0 1 0 5 0a2.5 2.5 0 1 0 -5 0M785.13 137.11a2.5 2.5 0 1 0 5 0a2.5 2.5 0 1 0 -5 0M791.81 137.11a2.5 2.5 0 1 0 5 0a2.5 2.5 0 1 0 -5 0M798.49 137.11a2.5 2.5 0 1 0 5 0a2.5 2.5 0 1 0 -5 0M805.17 137.11a2.5 2.5 0 1 0 5 0a2.5 2.5 0 1 0 -5 0M811.85 137.11a2.5 2.5 0 1 0 5 0a2.5 2.5 0 1 0 -5 0M818.54 137.11a2.5 2.5 0 1 0 5 0a2.5 2.5 0 1 0 -5 0M825.22 137.11a2.5 2.5 0 1 0 5 0a2.5 2.5 0 1 0 -5 0M831.9 137.11a2.5 2.5 0 1 0 5 0a2.5 2.5 0 1 0 -5 0M838.58 137.11a2.5 2.5 0 1 0 5 0a2.5 2.5 0 1 0 -5 0" fill="#8ab8ff"/></g></g><rect x="22" y="250" width="12" height="4" rx="2" fill="#73bf69"/><text x="40.6" y="254.9" font-size="10.3" fill="#ccccdc" textLength="24.6" lengthAdjust="spacingAndGlyphs">Rafiki</text><rect x="74" y="250" width="12" height="4" rx="2" fill="#f2cc0c"/><text x="92.6" y="254.9" font-size="10.3" fill="#ccccdc" textLength="58.6" lengthAdjust="spacingAndGlyphs">Rafiki Money</text><rect x="160" y="250" width="12" height="4" rx="2" fill="#8ab8ff"/><text x="178.6" y="254.9" font-size="10.3" fill="#ccccdc" textLength="29.2" lengthAdjust="spacingAndGlyphs">TOTAL</text><rect x="859.5" y="61.5" width="840" height="205" rx="2" fill="#181b1f" stroke="#2e3035" stroke-width="1"/><text x="867" y="78" font-size="11.4" fill="#ccccdc" textLength="156" lengthAdjust="spacingAndGlyphs" stroke="#ccccdc" stroke-width="0.2">Value Sent Through Network</text><circle cx="1043.1" cy="74.3" r="4.9" fill="none" stroke="#6e9fff" stroke-width="1.3"/><path d="M1043.1 71.6V74.3H1040.65" fill="none" stroke="#6e9fff" stroke-width="1.3"/><text x="1052.7" y="77.9" font-size="11.5" fill="#6e9fff" textLength="57.7" lengthAdjust="spacingAndGlyphs">Last 1 hour</text><g transform="translate(0,0)"><path d="M925.4 226.6H1687.4M925.4 188.57H1687.4M925.4 150.54H1687.4M925.4 112.51H1687.4M988.9 101.8V227.1M1052.4 101.8V227.1M1115.9 101.8V227.1M1179.4 101.8V227.1M1242.9 101.8V227.1M1306.4 101.8V227.1M1369.9 101.8V227.1M1433.4 101.8V227.1M1496.9 101.8V227.1M1560.4 101.8V227.1M1623.9 101.8V227.1M1687.4 101.8V227.1" stroke="#2c2e33" stroke-width="1" fill="none"/><text x="920.6" y="230.1" font-size="9.9" fill="#c7c8d2" text-anchor="end" textLength="51.5" lengthAdjust="spacingAndGlyphs">2000.0000</text><text x="920.6" y="192.07" font-size="9.9" fill="#c7c8d2" text-anchor="end" textLength="51.5" lengthAdjust="spacingAndGlyphs">3000.0000</text><text x="920.6" y="154.04" font-size="9.9" fill="#c7c8d2" text-anchor="end" textLength="51.5" lengthAdjust="spacingAndGlyphs">4000.0000</text><text x="920.6" y="116.01" font-size="9.9" fill="#c7c8d2" text-anchor="end" textLength="51.5" lengthAdjust="spacingAndGlyphs">5000.0000</text></g><text x="988.5" y="240" font-size="9.9" fill="#c7c8d2" text-anchor="middle" textLength="22.1" lengthAdjust="spacingAndGlyphs" clip-path="url(#c3)">12:15</text><text x="1052" y="240" font-size="9.9" fill="#c7c8d2" text-anchor="middle" textLength="24.65" lengthAdjust="spacingAndGlyphs" clip-path="url(#c3)">12:20</text><text x="1115.5" y="240" font-size="9.9" fill="#c7c8d2" text-anchor="middle" textLength="24.65" lengthAdjust="spacingAndGlyphs" clip-path="url(#c3)">12:25</text><text x="1179" y="240" font-size="9.9" fill="#c7c8d2" text-anchor="middle" textLength="24.65" lengthAdjust="spacingAndGlyphs" clip-path="url(#c3)">12:30</text><text x="1242.5" y="240" font-size="9.9" fill="#c7c8d2" text-anchor="middle" textLength="24.65" lengthAdjust="spacingAndGlyphs" clip-path="url(#c3)">12:35</text><text x="1306" y="240" font-size="9.9" fill="#c7c8d2" text-anchor="middle" textLength="24.65" lengthAdjust="spacingAndGlyphs" clip-path="url(#c3)">12:40</text><text x="1369.5" y="240" font-size="9.9" fill="#c7c8d2" text-anchor="middle" textLength="24.65" lengthAdjust="spacingAndGlyphs" clip-path="url(#c3)">12:45</text><text x="1433" y="240" font-size="9.9" fill="#c7c8d2" text-anchor="middle" textLength="24.65" lengthAdjust="spacingAndGlyphs" clip-path="url(#c3)">12:50</text><text x="1496.5" y="240" font-size="9.9" fill="#c7c8d2" text-anchor="middle" textLength="24.65" lengthAdjust="spacingAndGlyphs" clip-path="url(#c3)">12:55</text><text x="1560" y="240" font-size="9.9" fill="#c7c8d2" text-anchor="middle" textLength="24.65" lengthAdjust="spacingAndGlyphs" clip-path="url(#c3)">13:00</text><text x="1623.5" y="240" font-size="9.9" fill="#c7c8d2" text-anchor="middle" textLength="24.65" lengthAdjust="spacingAndGlyphs" clip-path="url(#c3)">13:05</text><text x="1687" y="240" font-size="9.9" fill="#c7c8d2" text-anchor="middle" textLength="22.1" lengthAdjust="spacingAndGlyphs" clip-path="url(#c3)">13:10</text><g transform="translate(0,0)"><g clip-path="url(#c4)"><path d="M924.5 227.1 L924.5 112.51 L930.85 112.51 L937.2 112.51 L943.55 112.51 L949.9 112.51 L956.25 112.51 L962.6 112.51 L968.95 112.51 L975.3 112.51 L981.65 112.51 L988 112.51 L994.35 112.51 L1000.7 112.51 L1007.05 112.51 L1013.4 112.51 L1019.75 112.51 L1026.1 112.51 L1032.45 112.51 L1038.8 112.51 L1045.15 112.51 L1051.5 112.51 L1057.85 112.51 L1064.2 112.51 L1070.55 112.51 L1076.9 146.36 L1083.25 210.25 L1089.6 209.87 L1095.95 214.81 L1102.3 188.57 L1108.65 188.57 L1115 189.71 L1121.35 188.57 L1127.7 188.57 L1134.05 188.57 L1140.4 188.57 L1146.75 188.57 L1153.1 188.57 L1159.45 188.57 L1165.8 188.57 L1172.15 188.57 L1178.5 188.57 L1184.85 188.57 L1191.2 188.57 L1197.55 188.57 L1203.9 188.57 L1210.25 188.57 L1216.6 188.57 L1222.95 188.57 L1229.3 188.57 L1235.65 188.57 L1242 188.57 L1248.35 188.57 L1254.7 188.57 L1261.05 188.57 L1267.4 188.57 L1273.75 188.57 L1280.1 188.57 L1286.45 188.57 L1292.8 188.57 L1299.15 188.57 L1305.5 188.57 L1311.85 189.71 L1318.2 188.57 L1324.55 188.57 L1330.9 188.57 L1337.25 188.57 L1343.6 188.57 L1349.95 188.57 L1356.3 188.57 L1362.65 188.57 L1369 188.57 L1375.35 188.57 L1381.7 188.57 L1388.05 188.57 L1394.4 188.57 L1400.75 188.57 L1407.1 188.57 L1413.45 188.57 L1419.8 188.57 L1426.15 188.57 L1432.5 188.57 L1438.85 189.71 L1445.2 188.57 L1451.55 188.57 L1457.9 188.57 L1464.25 188.57 L1470.6 188.57 L1476.95 188.57 L1483.3 188.57 L1489.65 188.57 L1496 188.57 L1502.35 188.57 L1508.7 188.57 L1515.05 188.57 L1521.4 188.57 L1527.75 188.57 L1534.1 188.57 L1540.45 188.57 L1546.8 188.57 L1553.15 188.57 L1559.5 188.57 L1565.85 188.57 L1572.2 189.71 L1578.55 188.57 L1584.9 188.57 L1591.25 188.57 L1597.6 188.57 L1603.95 188.57 L1610.3 188.57 L1616.65 188.57 L1623 188.57 L1629.35 188.57 L1635.7 188.57 L1642.05 188.57 L1648.4 188.57 L1654.75 188.57 L1661.1 188.57 L1667.45 188.57 L1673.8 188.57 L1680.15 188.57 L1686.5 188.57 L1686.5 227.1 Z" fill="#73bf69" fill-opacity="0.05" stroke="none"/><path d="M924.5 112.51 L930.85 112.51 L937.2 112.51 L943.55 112.51 L949.9 112.51 L956.25 112.51 L962.6 112.51 L968.95 112.51 L975.3 112.51 L981.65 112.51 L988 112.51 L994.35 112.51 L1000.7 112.51 L1007.05 112.51 L1013.4 112.51 L1019.75 112.51 L1026.1 112.51 L1032.45 112.51 L1038.8 112.51 L1045.15 112.51 L1051.5 112.51 L1057.85 112.51 L1064.2 112.51 L1070.55 112.51 L1076.9 146.36 L1083.25 210.25 L1089.6 209.87 L1095.95 214.81 L1102.3 188.57 L1108.65 188.57 L1115 189.71 L1121.35 188.57 L1127.7 188.57 L1134.05 188.57 L1140.4 188.57 L1146.75 188.57 L1153.1 188.57 L1159.45 188.57 L1165.8 188.57 L1172.15 188.57 L1178.5 188.57 L1184.85 188.57 L1191.2 188.57 L1197.55 188.57 L1203.9 188.57 L1210.25 188.57 L1216.6 188.57 L1222.95 188.57 L1229.3 188.57 L1235.65 188.57 L1242 188.57 L1248.35 188.57 L1254.7 188.57 L1261.05 188.57 L1267.4 188.57 L1273.75 188.57 L1280.1 188.57 L1286.45 188.57 L1292.8 188.57 L1299.15 188.57 L1305.5 188.57 L1311.85 189.71 L1318.2 188.57 L1324.55 188.57 L1330.9 188.57 L1337.25 188.57 L1343.6 188.57 L1349.95 188.57 L1356.3 188.57 L1362.65 188.57 L1369 188.57 L1375.35 188.57 L1381.7 188.57 L1388.05 188.57 L1394.4 188.57 L1400.75 188.57 L1407.1 188.57 L1413.45 188.57 L1419.8 188.57 L1426.15 188.57 L1432.5 188.57 L1438.85 189.71 L1445.2 188.57 L1451.55 188.57 L1457.9 188.57 L1464.25 188.57 L1470.6 188.57 L1476.95 188.57 L1483.3 188.57 L1489.65 188.57 L1496 188.57 L1502.35 188.57 L1508.7 188.57 L1515.05 188.57 L1521.4 188.57 L1527.75 188.57 L1534.1 188.57 L1540.45 188.57 L1546.8 188.57 L1553.15 188.57 L1559.5 188.57 L1565.85 188.57 L1572.2 189.71 L1578.55 188.57 L1584.9 188.57 L1591.25 188.57 L1597.6 188.57 L1603.95 188.57 L1610.3 188.57 L1616.65 188.57 L1623 188.57 L1629.35 188.57 L1635.7 188.57 L1642.05 188.57 L1648.4 188.57 L1654.75 188.57 L1661.1 188.57 L1667.45 188.57 L1673.8 188.57 L1680.15 188.57 L1686.5 188.57" fill="none" stroke="#73bf69" stroke-width="2.4" stroke-linejoin="round" stroke-linecap="round"/><path d="M922 112.51a2.5 2.5 0 1 0 5 0a2.5 2.5 0 1 0 -5 0M928.35 112.51a2.5 2.5 0 1 0 5 0a2.5 2.5 0 1 0 -5 0M934.7 112.51a2.5 2.5 0 1 0 5 0a2.5 2.5 0 1 0 -5 0M941.05 112.51a2.5 2.5 0 1 0 5 0a2.5 2.5 0 1 0 -5 0M947.4 112.51a2.5 2.5 0 1 0 5 0a2.5 2.5 0 1 0 -5 0M953.75 112.51a2.5 2.5 0 1 0 5 0a2.5 2.5 0 1 0 -5 0M960.1 112.51a2.5 2.5 0 1 0 5 0a2.5 2.5 0 1 0 -5 0M966.45 112.51a2.5 2.5 0 1 0 5 0a2.5 2.5 0 1 0 -5 0M972.8 112.51a2.5 2.5 0 1 0 5 0a2.5 2.5 0 1 0 -5 0M979.15 112.51a2.5 2.5 0 1 0 5 0a2.5 2.5 0 1 0 -5 0M985.5 112.51a2.5 2.5 0 1 0 5 0a2.5 2.5 0 1 0 -5 0M991.85 112.51a2.5 2.5 0 1 0 5 0a2.5 2.5 0 1 0 -5 0M998.2 112.51a2.5 2.5 0 1 0 5 0a2.5 2.5 0 1 0 -5 0M1004.55 112.51a2.5 2.5 0 1 0 5 0a2.5 2.5 0 1 0 -5 0M1010.9 112.51a2.5 2.5 0 1 0 5 0a2.5 2.5 0 1 0 -5 0M1017.25 112.51a2.5 2.5 0 1 0 5 0a2.5 2.5 0 1 0 -5 0M1023.6 112.51a2.5 2.5 0 1 0 5 0a2.5 2.5 0 1 0 -5 0M1029.95 112.51a2.5 2.5 0 1 0 5 0a2.5 2.5 0 1 0 -5 0M1036.3 112.51a2.5 2.5 0 1 0 5 0a2.5 2.5 0 1 0 -5 0M1042.65 112.51a2.5 2.5 0 1 0 5 0a2.5 2.5 0 1 0 -5 0M1049 112.51a2.5 2.5 0 1 0 5 0a2.5 2.5 0 1 0 -5 0M1055.35 112.51a2.5 2.5 0 1 0 5 0a2.5 2.5 0 1 0 -5 0M1061.7 112.51a2.5 2.5 0 1 0 5 0a2.5 2.5 0 1 0 -5 0M1068.05 112.51a2.5 2.5 0 1 0 5 0a2.5 2.5 0 1 0 -5 0M1074.4 146.36a2.5 2.5 0 1 0 5 0a2.5 2.5 0 1 0 -5 0M1080.75 210.25a2.5 2.5 0 1 0 5 0a2.5 2.5 0 1 0 -5 0M1087.1 209.87a2.5 2.5 0 1 0 5 0a2.5 2.5 0 1 0 -5 0M1093.45 214.81a2.5 2.5 0 1 0 5 0a2.5 2.5 0 1 0 -5 0M1099.8 188.57a2.5 2.5 0 1 0 5 0a2.5 2.5 0 1 0 -5 0M1106.15 188.57a2.5 2.5 0 1 0 5 0a2.5 2.5 0 1 0 -5 0M1112.5 189.71a2.5 2.5 0 1 0 5 0a2.5 2.5 0 1 0 -5 0M1118.85 188.57a2.5 2.5 0 1 0 5 0a2.5 2.5 0 1 0 -5 0M1125.2 188.57a2.5 2.5 0 1 0 5 0a2.5 2.5 0 1 0 -5 0M1131.55 188.57a2.5 2.5 0 1 0 5 0a2.5 2.5 0 1 0 -5 0M1137.9 188.57a2.5 2.5 0 1 0 5 0a2.5 2.5 0 1 0 -5 0M1144.25 188.57a2.5 2.5 0 1 0 5 0a2.5 2.5 0 1 0 -5 0M1150.6 188.57a2.5 2.5 0 1 0 5 0a2.5 2.5 0 1 0 -5 0M1156.95 188.57a2.5 2.5 0 1 0 5 0a2.5 2.5 0 1 0 -5 0M1163.3 188.57a2.5 2.5 0 1 0 5 0a2.5 2.5 0 1 0 -5 0M1169.65 188.57a2.5 2.5 0 1 0 5 0a2.5 2.5 0 1 0 -5 0M1176 188.57a2.5 2.5 0 1 0 5 0a2.5 2.5 0 1 0 -5 0M1182.35 188.57a2.5 2.5 0 1 0 5 0a2.5 2.5 0 1 0 -5 0M1188.7 188.57a2.5 2.5 0 1 0 5 0a2.5 2.5 0 1 0 -5 0M1195.05 188.57a2.5 2.5 0 1 0 5 0a2.5 2.5 0 1 0 -5 0M1201.4 188.57a2.5 2.5 0 1 0 5 0a2.5 2.5 0 1 0 -5 0M1207.75 188.57a2.5 2.5 0 1 0 5 0a2.5 2.5 0 1 0 -5 0M1214.1 188.57a2.5 2.5 0 1 0 5 0a2.5 2.5 0 1 0 -5 0M1220.45 188.57a2.5 2.5 0 1 0 5 0a2.5 2.5 0 1 0 -5 0M1226.8 188.57a2.5 2.5 0 1 0 5 0a2.5 2.5 0 1 0 -5 0M1233.15 188.57a2.5 2.5 0 1 0 5 0a2.5 2.5 0 1 0 -5 0M1239.5 188.57a2.5 2.5 0 1 0 5 0a2.5 2.5 0 1 0 -5 0M1245.85 188.57a2.5 2.5 0 1 0 5 0a2.5 2.5 0 1 0 -5 0M1252.2 188.57a2.5 2.5 0 1 0 5 0a2.5 2.5 0 1 0 -5 0M1258.55 188.57a2.5 2.5 0 1 0 5 0a2.5 2.5 0 1 0 -5 0M1264.9 188.57a2.5 2.5 0 1 0 5 0a2.5 2.5 0 1 0 -5 0M1271.25 188.57a2.5 2.5 0 1 0 5 0a2.5 2.5 0 1 0 -5 0M1277.6 188.57a2.5 2.5 0 1 0 5 0a2.5 2.5 0 1 0 -5 0M1283.95 188.57a2.5 2.5 0 1 0 5 0a2.5 2.5 0 1 0 -5 0M1290.3 188.57a2.5 2.5 0 1 0 5 0a2.5 2.5 0 1 0 -5 0M1296.65 188.57a2.5 2.5 0 1 0 5 0a2.5 2.5 0 1 0 -5 0M1303 188.57a2.5 2.5 0 1 0 5 0a2.5 2.5 0 1 0 -5 0M1309.35 189.71a2.5 2.5 0 1 0 5 0a2.5 2.5 0 1 0 -5 0M1315.7 188.57a2.5 2.5 0 1 0 5 0a2.5 2.5 0 1 0 -5 0M1322.05 188.57a2.5 2.5 0 1 0 5 0a2.5 2.5 0 1 0 -5 0M1328.4 188.57a2.5 2.5 0 1 0 5 0a2.5 2.5 0 1 0 -5 0M1334.75 188.57a2.5 2.5 0 1 0 5 0a2.5 2.5 0 1 0 -5 0M1341.1 188.57a2.5 2.5 0 1 0 5 0a2.5 2.5 0 1 0 -5 0M1347.45 188.57a2.5 2.5 0 1 0 5 0a2.5 2.5 0 1 0 -5 0M1353.8 188.57a2.5 2.5 0 1 0 5 0a2.5 2.5 0 1 0 -5 0M1360.15 188.57a2.5 2.5 0 1 0 5 0a2.5 2.5 0 1 0 -5 0M1366.5 188.57a2.5 2.5 0 1 0 5 0a2.5 2.5 0 1 0 -5 0M1372.85 188.57a2.5 2.5 0 1 0 5 0a2.5 2.5 0 1 0 -5 0M1379.2 188.57a2.5 2.5 0 1 0 5 0a2.5 2.5 0 1 0 -5 0M1385.55 188.57a2.5 2.5 0 1 0 5 0a2.5 2.5 0 1 0 -5 0M1391.9 188.57a2.5 2.5 0 1 0 5 0a2.5 2.5 0 1 0 -5 0M1398.25 188.57a2.5 2.5 0 1 0 5 0a2.5 2.5 0 1 0 -5 0M1404.6 188.57a2.5 2.5 0 1 0 5 0a2.5 2.5 0 1 0 -5 0M1410.95 188.57a2.5 2.5 0 1 0 5 0a2.5 2.5 0 1 0 -5 0M1417.3 188.57a2.5 2.5 0 1 0 5 0a2.5 2.5 0 1 0 -5 0M1423.65 188.57a2.5 2.5 0 1 0 5 0a2.5 2.5 0 1 0 -5 0M1430 188.57a2.5 2.5 0 1 0 5 0a2.5 2.5 0 1 0 -5 0M1436.35 189.71a2.5 2.5 0 1 0 5 0a2.5 2.5 0 1 0 -5 0M1442.7 188.57a2.5 2.5 0 1 0 5 0a2.5 2.5 0 1 0 -5 0M1449.05 188.57a2.5 2.5 0 1 0 5 0a2.5 2.5 0 1 0 -5 0M1455.4 188.57a2.5 2.5 0 1 0 5 0a2.5 2.5 0 1 0 -5 0M1461.75 188.57a2.5 2.5 0 1 0 5 0a2.5 2.5 0 1 0 -5 0M1468.1 188.57a2.5 2.5 0 1 0 5 0a2.5 2.5 0 1 0 -5 0M1474.45 188.57a2.5 2.5 0 1 0 5 0a2.5 2.5 0 1 0 -5 0M1480.8 188.57a2.5 2.5 0 1 0 5 0a2.5 2.5 0 1 0 -5 0M1487.15 188.57a2.5 2.5 0 1 0 5 0a2.5 2.5 0 1 0 -5 0M1493.5 188.57a2.5 2.5 0 1 0 5 0a2.5 2.5 0 1 0 -5 0M1499.85 188.57a2.5 2.5 0 1 0 5 0a2.5 2.5 0 1 0 -5 0M1506.2 188.57a2.5 2.5 0 1 0 5 0a2.5 2.5 0 1 0 -5 0M1512.55 188.57a2.5 2.5 0 1 0 5 0a2.5 2.5 0 1 0 -5 0M1518.9 188.57a2.5 2.5 0 1 0 5 0a2.5 2.5 0 1 0 -5 0M1525.25 188.57a2.5 2.5 0 1 0 5 0a2.5 2.5 0 1 0 -5 0M1531.6 188.57a2.5 2.5 0 1 0 5 0a2.5 2.5 0 1 0 -5 0M1537.95 188.57a2.5 2.5 0 1 0 5 0a2.5 2.5 0 1 0 -5 0M1544.3 188.57a2.5 2.5 0 1 0 5 0a2.5 2.5 0 1 0 -5 0M1550.65 188.57a2.5 2.5 0 1 0 5 0a2.5 2.5 0 1 0 -5 0M1557 188.57a2.5 2.5 0 1 0 5 0a2.5 2.5 0 1 0 -5 0M1563.35 188.57a2.5 2.5 0 1 0 5 0a2.5 2.5 0 1 0 -5 0M1569.7 189.71a2.5 2.5 0 1 0 5 0a2.5 2.5 0 1 0 -5 0M1576.05 188.57a2.5 2.5 0 1 0 5 0a2.5 2.5 0 1 0 -5 0M1582.4 188.57a2.5 2.5 0 1 0 5 0a2.5 2.5 0 1 0 -5 0M1588.75 188.57a2.5 2.5 0 1 0 5 0a2.5 2.5 0 1 0 -5 0M1595.1 188.57a2.5 2.5 0 1 0 5 0a2.5 2.5 0 1 0 -5 0M1601.45 188.57a2.5 2.5 0 1 0 5 0a2.5 2.5 0 1 0 -5 0M1607.8 188.57a2.5 2.5 0 1 0 5 0a2.5 2.5 0 1 0 -5 0M1614.15 188.57a2.5 2.5 0 1 0 5 0a2.5 2.5 0 1 0 -5 0M1620.5 188.57a2.5 2.5 0 1 0 5 0a2.5 2.5 0 1 0 -5 0M1626.85 188.57a2.5 2.5 0 1 0 5 0a2.5 2.5 0 1 0 -5 0M1633.2 188.57a2.5 2.5 0 1 0 5 0a2.5 2.5 0 1 0 -5 0M1639.55 188.57a2.5 2.5 0 1 0 5 0a2.5 2.5 0 1 0 -5 0M1645.9 188.57a2.5 2.5 0 1 0 5 0a2.5 2.5 0 1 0 -5 0M1652.25 188.57a2.5 2.5 0 1 0 5 0a2.5 2.5 0 1 0 -5 0M1658.6 188.57a2.5 2.5 0 1 0 5 0a2.5 2.5 0 1 0 -5 0M1664.95 188.57a2.5 2.5 0 1 0 5 0a2.5 2.5 0 1 0 -5 0M1671.3 188.57a2.5 2.5 0 1 0 5 0a2.5 2.5 0 1 0 -5 0M1677.65 188.57a2.5 2.5 0 1 0 5 0a2.5 2.5 0 1 0 -5 0M1684 188.57a2.5 2.5 0 1 0 5 0a2.5 2.5 0 1 0 -5 0" fill="#73bf69"/></g></g><rect x="869" y="250" width="12" height="4" rx="2" fill="#73bf69"/><text x="887.6" y="254.9" font-size="10.3" fill="#ccccdc" textLength="21.3" lengthAdjust="spacingAndGlyphs">Total</text><rect x="1706.5" y="61.5" width="840" height="205" rx="2" fill="#181b1f" stroke="#2e3035" stroke-width="1"/><text x="1714" y="78" font-size="11.4" fill="#ccccdc" textLength="157" lengthAdjust="spacingAndGlyphs" stroke="#ccccdc" stroke-width="0.2">Transaction Average Amount</text><circle cx="1890.1" cy="74.3" r="4.9" fill="none" stroke="#6e9fff" stroke-width="1.3"/><path d="M1890.1 71.6V74.3H1887.65" fill="none" stroke="#6e9fff" stroke-width="1.3"/><text x="1899.7" y="77.9" font-size="11.5" fill="#6e9fff" textLength="57.7" lengthAdjust="spacingAndGlyphs">Last 1 hour</text><g transform="translate(0,0)"><path d="M1769 226.5H2534M1769 191.43H2534M1769 156.36H2534M1769 121.29H2534M1832.75 101.8V227M1896.5 101.8V227M1960.25 101.8V227M2024 101.8V227M2087.75 101.8V227M2151.5 101.8V227M2215.25 101.8V227M2279 101.8V227M2342.75 101.8V227M2406.5 101.8V227M2470.25 101.8V227M2534 101.8V227" stroke="#2c2e33" stroke-width="1" fill="none"/><text x="1764.2" y="230" font-size="9.9" fill="#c7c8d2" text-anchor="end" textLength="33.65" lengthAdjust="spacingAndGlyphs">0.0000</text><text x="1764.2" y="194.93" font-size="9.9" fill="#c7c8d2" text-anchor="end" textLength="45.55" lengthAdjust="spacingAndGlyphs">500.0000</text><text x="1764.2" y="159.86" font-size="9.9" fill="#c7c8d2" text-anchor="end" textLength="48.95" lengthAdjust="spacingAndGlyphs">1000.0000</text><text x="1764.2" y="124.79" font-size="9.9" fill="#c7c8d2" text-anchor="end" textLength="48.95" lengthAdjust="spacingAndGlyphs">1500.0000</text></g><text x="1832.35" y="240" font-size="9.9" fill="#c7c8d2" text-anchor="middle" textLength="22.1" lengthAdjust="spacingAndGlyphs" clip-path="url(#c5)">12:15</text><text x="1896.1" y="240" font-size="9.9" fill="#c7c8d2" text-anchor="middle" textLength="24.65" lengthAdjust="spacingAndGlyphs" clip-path="url(#c5)">12:20</text><text x="1959.85" y="240" font-size="9.9" fill="#c7c8d2" text-anchor="middle" textLength="24.65" lengthAdjust="spacingAndGlyphs" clip-path="url(#c5)">12:25</text><text x="2023.6" y="240" font-size="9.9" fill="#c7c8d2" text-anchor="middle" textLength="24.65" lengthAdjust="spacingAndGlyphs" clip-path="url(#c5)">12:30</text><text x="2087.35" y="240" font-size="9.9" fill="#c7c8d2" text-anchor="middle" textLength="24.65" lengthAdjust="spacingAndGlyphs" clip-path="url(#c5)">12:35</text><text x="2151.1" y="240" font-size="9.9" fill="#c7c8d2" text-anchor="middle" textLength="24.65" lengthAdjust="spacingAndGlyphs" clip-path="url(#c5)">12:40</text><text x="2214.85" y="240" font-size="9.9" fill="#c7c8d2" text-anchor="middle" textLength="24.65" lengthAdjust="spacingAndGlyphs" clip-path="url(#c5)">12:45</text><text x="2278.6" y="240" font-size="9.9" fill="#c7c8d2" text-anchor="middle" textLength="24.65" lengthAdjust="spacingAndGlyphs" clip-path="url(#c5)">12:50</text><text x="2342.35" y="240" font-size="9.9" fill="#c7c8d2" text-anchor="middle" textLength="24.65" lengthAdjust="spacingAndGlyphs" clip-path="url(#c5)">12:55</text><text x="2406.1" y="240" font-size="9.9" fill="#c7c8d2" text-anchor="middle" textLength="24.65" lengthAdjust="spacingAndGlyphs" clip-path="url(#c5)">13:00</text><text x="2469.85" y="240" font-size="9.9" fill="#c7c8d2" text-anchor="middle" textLength="24.65" lengthAdjust="spacingAndGlyphs" clip-path="url(#c5)">13:05</text><text x="2533.6" y="240" font-size="9.9" fill="#c7c8d2" text-anchor="middle" textLength="22.1" lengthAdjust="spacingAndGlyphs" clip-path="url(#c5)">13:10</text><g transform="translate(0,0)"><g clip-path="url(#c6)"><path d="M1769 226.5 L1769 219 L1775.38 219 L1781.75 219 L1788.12 219 L1794.5 219 L1800.88 219 L1807.25 219 L1813.62 219 L1820 219 L1826.38 219 L1832.75 219 L1839.12 219 L1845.5 219 L1851.88 219 L1858.25 219 L1864.62 219 L1871 219 L1877.38 219 L1883.75 219 L1890.12 219 L1896.5 219 L1902.88 219 L1909.25 219 L1915.62 219 L1922 221.1 L1941.12 117.78 L1947.5 221.03 L1953.88 220.89 L1960.25 220.19 L1966.62 220.89 L1973 220.89 L1979.38 220.89 L1985.75 220.89 L1992.12 220.89 L1998.5 220.89 L2004.88 220.89 L2011.25 220.89 L2017.62 220.89 L2024 220.89 L2030.38 220.89 L2036.75 220.89 L2043.12 220.89 L2049.5 220.89 L2055.88 220.89 L2062.25 220.89 L2068.62 220.89 L2075 220.89 L2081.38 220.89 L2087.75 220.89 L2094.12 220.89 L2100.5 220.89 L2106.88 220.89 L2113.25 220.89 L2119.62 220.89 L2126 220.89 L2132.38 220.89 L2138.75 220.89 L2145.12 220.89 L2151.5 220.89 L2157.88 220.89 L2164.25 220.89 L2170.62 220.89 L2177 220.89 L2183.38 220.89 L2189.75 220.89 L2196.12 220.89 L2202.5 220.89 L2208.88 220.89 L2215.25 220.89 L2221.62 220.89 L2228 220.89 L2234.38 220.89 L2240.75 220.89 L2247.12 220.89 L2253.5 220.89 L2259.88 220.89 L2266.25 220.89 L2272.62 220.89 L2279 220.89 L2285.38 220.89 L2291.75 220.89 L2298.12 220.89 L2304.5 220.89 L2310.88 220.89 L2317.25 220.89 L2323.62 220.89 L2330 220.89 L2336.38 220.89 L2342.75 220.89 L2349.12 220.89 L2355.5 220.89 L2361.88 220.89 L2368.25 220.89 L2374.62 220.89 L2381 220.89 L2387.38 220.89 L2393.75 220.89 L2400.12 220.89 L2406.5 220.89 L2412.88 220.89 L2419.25 220.89 L2425.62 220.89 L2432 220.89 L2438.38 220.89 L2444.75 220.89 L2451.12 220.89 L2457.5 220.89 L2463.88 220.89 L2470.25 220.89 L2476.62 220.89 L2483 220.89 L2489.38 220.89 L2495.75 220.89 L2502.12 220.89 L2508.5 220.89 L2514.88 220.89 L2521.25 220.89 L2527.62 220.89 L2534 220.89 L2534 226.5 Z" fill="#73bf69" fill-opacity="0.05" stroke="none"/><path d="M1769 219 L1775.38 219 L1781.75 219 L1788.12 219 L1794.5 219 L1800.88 219 L1807.25 219 L1813.62 219 L1820 219 L1826.38 219 L1832.75 219 L1839.12 219 L1845.5 219 L1851.88 219 L1858.25 219 L1864.62 219 L1871 219 L1877.38 219 L1883.75 219 L1890.12 219 L1896.5 219 L1902.88 219 L1909.25 219 L1915.62 219 L1922 221.1 L1941.12 117.78 L1947.5 221.03 L1953.88 220.89 L1960.25 220.19 L1966.62 220.89 L1973 220.89 L1979.38 220.89 L1985.75 220.89 L1992.12 220.89 L1998.5 220.89 L2004.88 220.89 L2011.25 220.89 L2017.62 220.89 L2024 220.89 L2030.38 220.89 L2036.75 220.89 L2043.12 220.89 L2049.5 220.89 L2055.88 220.89 L2062.25 220.89 L2068.62 220.89 L2075 220.89 L2081.38 220.89 L2087.75 220.89 L2094.12 220.89 L2100.5 220.89 L2106.88 220.89 L2113.25 220.89 L2119.62 220.89 L2126 220.89 L2132.38 220.89 L2138.75 220.89 L2145.12 220.89 L2151.5 220.89 L2157.88 220.89 L2164.25 220.89 L2170.62 220.89 L2177 220.89 L2183.38 220.89 L2189.75 220.89 L2196.12 220.89 L2202.5 220.89 L2208.88 220.89 L2215.25 220.89 L2221.62 220.89 L2228 220.89 L2234.38 220.89 L2240.75 220.89 L2247.12 220.89 L2253.5 220.89 L2259.88 220.89 L2266.25 220.89 L2272.62 220.89 L2279 220.89 L2285.38 220.89 L2291.75 220.89 L2298.12 220.89 L2304.5 220.89 L2310.88 220.89 L2317.25 220.89 L2323.62 220.89 L2330 220.89 L2336.38 220.89 L2342.75 220.89 L2349.12 220.89 L2355.5 220.89 L2361.88 220.89 L2368.25 220.89 L2374.62 220.89 L2381 220.89 L2387.38 220.89 L2393.75 220.89 L2400.12 220.89 L2406.5 220.89 L2412.88 220.89 L2419.25 220.89 L2425.62 220.89 L2432 220.89 L2438.38 220.89 L2444.75 220.89 L2451.12 220.89 L2457.5 220.89 L2463.88 220.89 L2470.25 220.89 L2476.62 220.89 L2483 220.89 L2489.38 220.89 L2495.75 220.89 L2502.12 220.89 L2508.5 220.89 L2514.88 220.89 L2521.25 220.89 L2527.62 220.89 L2534 220.89" fill="none" stroke="#73bf69" stroke-width="2.4" stroke-linejoin="round" stroke-linecap="round"/><path d="M1766.5 219a2.5 2.5 0 1 0 5 0a2.5 2.5 0 1 0 -5 0M1772.88 219a2.5 2.5 0 1 0 5 0a2.5 2.5 0 1 0 -5 0M1779.25 219a2.5 2.5 0 1 0 5 0a2.5 2.5 0 1 0 -5 0M1785.62 219a2.5 2.5 0 1 0 5 0a2.5 2.5 0 1 0 -5 0M1792 219a2.5 2.5 0 1 0 5 0a2.5 2.5 0 1 0 -5 0M1798.38 219a2.5 2.5 0 1 0 5 0a2.5 2.5 0 1 0 -5 0M1804.75 219a2.5 2.5 0 1 0 5 0a2.5 2.5 0 1 0 -5 0M1811.12 219a2.5 2.5 0 1 0 5 0a2.5 2.5 0 1 0 -5 0M1817.5 219a2.5 2.5 0 1 0 5 0a2.5 2.5 0 1 0 -5 0M1823.88 219a2.5 2.5 0 1 0 5 0a2.5 2.5 0 1 0 -5 0M1830.25 219a2.5 2.5 0 1 0 5 0a2.5 2.5 0 1 0 -5 0M1836.62 219a2.5 2.5 0 1 0 5 0a2.5 2.5 0 1 0 -5 0M1843 219a2.5 2.5 0 1 0 5 0a2.5 2.5 0 1 0 -5 0M1849.38 219a2.5 2.5 0 1 0 5 0a2.5 2.5 0 1 0 -5 0M1855.75 219a2.5 2.5 0 1 0 5 0a2.5 2.5 0 1 0 -5 0M1862.12 219a2.5 2.5 0 1 0 5 0a2.5 2.5 0 1 0 -5 0M1868.5 219a2.5 2.5 0 1 0 5 0a2.5 2.5 0 1 0 -5 0M1874.88 219a2.5 2.5 0 1 0 5 0a2.5 2.5 0 1 0 -5 0M1881.25 219a2.5 2.5 0 1 0 5 0a2.5 2.5 0 1 0 -5 0M1887.62 219a2.5 2.5 0 1 0 5 0a2.5 2.5 0 1 0 -5 0M1894 219a2.5 2.5 0 1 0 5 0a2.5 2.5 0 1 0 -5 0M1900.38 219a2.5 2.5 0 1 0 5 0a2.5 2.5 0 1 0 -5 0M1906.75 219a2.5 2.5 0 1 0 5 0a2.5 2.5 0 1 0 -5 0M1913.12 219a2.5 2.5 0 1 0 5 0a2.5 2.5 0 1 0 -5 0M1919.5 221.1a2.5 2.5 0 1 0 5 0a2.5 2.5 0 1 0 -5 0M1938.62 117.78a2.5 2.5 0 1 0 5 0a2.5 2.5 0 1 0 -5 0M1945 221.03a2.5 2.5 0 1 0 5 0a2.5 2.5 0 1 0 -5 0M1951.38 220.89a2.5 2.5 0 1 0 5 0a2.5 2.5 0 1 0 -5 0M1957.75 220.19a2.5 2.5 0 1 0 5 0a2.5 2.5 0 1 0 -5 0M1964.12 220.89a2.5 2.5 0 1 0 5 0a2.5 2.5 0 1 0 -5 0M1970.5 220.89a2.5 2.5 0 1 0 5 0a2.5 2.5 0 1 0 -5 0M1976.88 220.89a2.5 2.5 0 1 0 5 0a2.5 2.5 0 1 0 -5 0M1983.25 220.89a2.5 2.5 0 1 0 5 0a2.5 2.5 0 1 0 -5 0M1989.62 220.89a2.5 2.5 0 1 0 5 0a2.5 2.5 0 1 0 -5 0M1996 220.89a2.5 2.5 0 1 0 5 0a2.5 2.5 0 1 0 -5 0M2002.38 220.89a2.5 2.5 0 1 0 5 0a2.5 2.5 0 1 0 -5 0M2008.75 220.89a2.5 2.5 0 1 0 5 0a2.5 2.5 0 1 0 -5 0M2015.12 220.89a2.5 2.5 0 1 0 5 0a2.5 2.5 0 1 0 -5 0M2021.5 220.89a2.5 2.5 0 1 0 5 0a2.5 2.5 0 1 0 -5 0M2027.88 220.89a2.5 2.5 0 1 0 5 0a2.5 2.5 0 1 0 -5 0M2034.25 220.89a2.5 2.5 0 1 0 5 0a2.5 2.5 0 1 0 -5 0M2040.62 220.89a2.5 2.5 0 1 0 5 0a2.5 2.5 0 1 0 -5 0M2047 220.89a2.5 2.5 0 1 0 5 0a2.5 2.5 0 1 0 -5 0M2053.38 220.89a2.5 2.5 0 1 0 5 0a2.5 2.5 0 1 0 -5 0M2059.75 220.89a2.5 2.5 0 1 0 5 0a2.5 2.5 0 1 0 -5 0M2066.12 220.89a2.5 2.5 0 1 0 5 0a2.5 2.5 0 1 0 -5 0M2072.5 220.89a2.5 2.5 0 1 0 5 0a2.5 2.5 0 1 0 -5 0M2078.88 220.89a2.5 2.5 0 1 0 5 0a2.5 2.5 0 1 0 -5 0M2085.25 220.89a2.5 2.5 0 1 0 5 0a2.5 2.5 0 1 0 -5 0M2091.62 220.89a2.5 2.5 0 1 0 5 0a2.5 2.5 0 1 0 -5 0M2098 220.89a2.5 2.5 0 1 0 5 0a2.5 2.5 0 1 0 -5 0M2104.38 220.89a2.5 2.5 0 1 0 5 0a2.5 2.5 0 1 0 -5 0M2110.75 220.89a2.5 2.5 0 1 0 5 0a2.5 2.5 0 1 0 -5 0M2117.12 220.89a2.5 2.5 0 1 0 5 0a2.5 2.5 0 1 0 -5 0M2123.5 220.89a2.5 2.5 0 1 0 5 0a2.5 2.5 0 1 0 -5 0M2129.88 220.89a2.5 2.5 0 1 0 5 0a2.5 2.5 0 1 0 -5 0M2136.25 220.89a2.5 2.5 0 1 0 5 0a2.5 2.5 0 1 0 -5 0M2142.62 220.89a2.5 2.5 0 1 0 5 0a2.5 2.5 0 1 0 -5 0M2149 220.89a2.5 2.5 0 1 0 5 0a2.5 2.5 0 1 0 -5 0M2155.38 220.89a2.5 2.5 0 1 0 5 0a2.5 2.5 0 1 0 -5 0M2161.75 220.89a2.5 2.5 0 1 0 5 0a2.5 2.5 0 1 0 -5 0M2168.12 220.89a2.5 2.5 0 1 0 5 0a2.5 2.5 0 1 0 -5 0M2174.5 220.89a2.5 2.5 0 1 0 5 0a2.5 2.5 0 1 0 -5 0M2180.88 220.89a2.5 2.5 0 1 0 5 0a2.5 2.5 0 1 0 -5 0M2187.25 220.89a2.5 2.5 0 1 0 5 0a2.5 2.5 0 1 0 -5 0M2193.62 220.89a2.5 2.5 0 1 0 5 0a2.5 2.5 0 1 0 -5 0M2200 220.89a2.5 2.5 0 1 0 5 0a2.5 2.5 0 1 0 -5 0M2206.38 220.89a2.5 2.5 0 1 0 5 0a2.5 2.5 0 1 0 -5 0M2212.75 220.89a2.5 2.5 0 1 0 5 0a2.5 2.5 0 1 0 -5 0M2219.12 220.89a2.5 2.5 0 1 0 5 0a2.5 2.5 0 1 0 -5 0M2225.5 220.89a2.5 2.5 0 1 0 5 0a2.5 2.5 0 1 0 -5 0M2231.88 220.89a2.5 2.5 0 1 0 5 0a2.5 2.5 0 1 0 -5 0M2238.25 220.89a2.5 2.5 0 1 0 5 0a2.5 2.5 0 1 0 -5 0M2244.62 220.89a2.5 2.5 0 1 0 5 0a2.5 2.5 0 1 0 -5 0M2251 220.89a2.5 2.5 0 1 0 5 0a2.5 2.5 0 1 0 -5 0M2257.38 220.89a2.5 2.5 0 1 0 5 0a2.5 2.5 0 1 0 -5 0M2263.75 220.89a2.5 2.5 0 1 0 5 0a2.5 2.5 0 1 0 -5 0M2270.12 220.89a2.5 2.5 0 1 0 5 0a2.5 2.5 0 1 0 -5 0M2276.5 220.89a2.5 2.5 0 1 0 5 0a2.5 2.5 0 1 0 -5 0M2282.88 220.89a2.5 2.5 0 1 0 5 0a2.5 2.5 0 1 0 -5 0M2289.25 220.89a2.5 2.5 0 1 0 5 0a2.5 2.5 0 1 0 -5 0M2295.62 220.89a2.5 2.5 0 1 0 5 0a2.5 2.5 0 1 0 -5 0M2302 220.89a2.5 2.5 0 1 0 5 0a2.5 2.5 0 1 0 -5 0M2308.38 220.89a2.5 2.5 0 1 0 5 0a2.5 2.5 0 1 0 -5 0M2314.75 220.89a2.5 2.5 0 1 0 5 0a2.5 2.5 0 1 0 -5 0M2321.12 220.89a2.5 2.5 0 1 0 5 0a2.5 2.5 0 1 0 -5 0M2327.5 220.89a2.5 2.5 0 1 0 5 0a2.5 2.5 0 1 0 -5 0M2333.88 220.89a2.5 2.5 0 1 0 5 0a2.5 2.5 0 1 0 -5 0M2340.25 220.89a2.5 2.5 0 1 0 5 0a2.5 2.5 0 1 0 -5 0M2346.62 220.89a2.5 2.5 0 1 0 5 0a2.5 2.5 0 1 0 -5 0M2353 220.89a2.5 2.5 0 1 0 5 0a2.5 2.5 0 1 0 -5 0M2359.38 220.89a2.5 2.5 0 1 0 5 0a2.5 2.5 0 1 0 -5 0M2365.75 220.89a2.5 2.5 0 1 0 5 0a2.5 2.5 0 1 0 -5 0M2372.12 220.89a2.5 2.5 0 1 0 5 0a2.5 2.5 0 1 0 -5 0M2378.5 220.89a2.5 2.5 0 1 0 5 0a2.5 2.5 0 1 0 -5 0M2384.88 220.89a2.5 2.5 0 1 0 5 0a2.5 2.5 0 1 0 -5 0M2391.25 220.89a2.5 2.5 0 1 0 5 0a2.5 2.5 0 1 0 -5 0M2397.62 220.89a2.5 2.5 0 1 0 5 0a2.5 2.5 0 1 0 -5 0M2404 220.89a2.5 2.5 0 1 0 5 0a2.5 2.5 0 1 0 -5 0M2410.38 220.89a2.5 2.5 0 1 0 5 0a2.5 2.5 0 1 0 -5 0M2416.75 220.89a2.5 2.5 0 1 0 5 0a2.5 2.5 0 1 0 -5 0M2423.12 220.89a2.5 2.5 0 1 0 5 0a2.5 2.5 0 1 0 -5 0M2429.5 220.89a2.5 2.5 0 1 0 5 0a2.5 2.5 0 1 0 -5 0M2435.88 220.89a2.5 2.5 0 1 0 5 0a2.5 2.5 0 1 0 -5 0M2442.25 220.89a2.5 2.5 0 1 0 5 0a2.5 2.5 0 1 0 -5 0M2448.62 220.89a2.5 2.5 0 1 0 5 0a2.5 2.5 0 1 0 -5 0M2455 220.89a2.5 2.5 0 1 0 5 0a2.5 2.5 0 1 0 -5 0M2461.38 220.89a2.5 2.5 0 1 0 5 0a2.5 2.5 0 1 0 -5 0M2467.75 220.89a2.5 2.5 0 1 0 5 0a2.5 2.5 0 1 0 -5 0M2474.12 220.89a2.5 2.5 0 1 0 5 0a2.5 2.5 0 1 0 -5 0M2480.5 220.89a2.5 2.5 0 1 0 5 0a2.5 2.5 0 1 0 -5 0M2486.88 220.89a2.5 2.5 0 1 0 5 0a2.5 2.5 0 1 0 -5 0M2493.25 220.89a2.5 2.5 0 1 0 5 0a2.5 2.5 0 1 0 -5 0M2499.62 220.89a2.5 2.5 0 1 0 5 0a2.5 2.5 0 1 0 -5 0M2506 220.89a2.5 2.5 0 1 0 5 0a2.5 2.5 0 1 0 -5 0M2512.38 220.89a2.5 2.5 0 1 0 5 0a2.5 2.5 0 1 0 -5 0M2518.75 220.89a2.5 2.5 0 1 0 5 0a2.5 2.5 0 1 0 -5 0M2525.12 220.89a2.5 2.5 0 1 0 5 0a2.5 2.5 0 1 0 -5 0M2531.5 220.89a2.5 2.5 0 1 0 5 0a2.5 2.5 0 1 0 -5 0" fill="#73bf69"/></g></g><rect x="1716" y="250" width="12" height="4" rx="2" fill="#73bf69"/><text x="1734.6" y="254.9" font-size="10.3" fill="#ccccdc" textLength="453.7" lengthAdjust="spacingAndGlyphs">sum (increase(transactions_amount_total[30s])) / sum (increase(transactions_total[30s])) * 0.0001</text><rect x="12.5" y="274.5" width="840" height="205" rx="2" fill="#181b1f" stroke="#2e3035" stroke-width="1"/><text x="20" y="291" font-size="11.4" fill="#ccccdc" textLength="163.4" lengthAdjust="spacingAndGlyphs" stroke="#ccccdc" stroke-width="0.2">Transaction Count (by source)</text><circle cx="204.4" cy="287.3" r="4.9" fill="none" stroke="#6e9fff" stroke-width="1.3"/><path d="M204.4 284.61V287.3H201.95" fill="none" stroke="#6e9fff" stroke-width="1.3"/><text x="214" y="290.9" font-size="11.5" fill="#6e9fff" textLength="53.1" lengthAdjust="spacingAndGlyphs">Last 1 day</text><g transform="translate(0,1.0)"><path d="M50.5 438.4H840.4M50.5 401.6H840.4M50.5 364.8H840.4M50.5 328H840.4M78.6 314.3V438.9M144.4 314.3V438.9M210.2 314.3V438.9M276 314.3V438.9M341.8 314.3V438.9M407.6 314.3V438.9M473.4 314.3V438.9M539.2 314.3V438.9M605 314.3V438.9M670.8 314.3V438.9M736.6 314.3V438.9M802.4 314.3V438.9" stroke="#2c2e33" stroke-width="1" fill="none"/><text x="45.7" y="441.9" font-size="9.9" fill="#c7c8d2" text-anchor="end" textLength="5.95" lengthAdjust="spacingAndGlyphs">0</text><text x="45.7" y="405.1" font-size="9.9" fill="#c7c8d2" text-anchor="end" textLength="23.8" lengthAdjust="spacingAndGlyphs">2000</text><text x="45.7" y="368.3" font-size="9.9" fill="#c7c8d2" text-anchor="end" textLength="23.8" lengthAdjust="spacingAndGlyphs">4000</text><text x="45.7" y="331.5" font-size="9.9" fill="#c7c8d2" text-anchor="end" textLength="23.8" lengthAdjust="spacingAndGlyphs">6000</text></g><text x="78.2" y="453.8" font-size="9.9" fill="#c7c8d2" text-anchor="middle" textLength="24.65" lengthAdjust="spacingAndGlyphs" clip-path="url(#c7)">14:00</text><text x="144" y="453.8" font-size="9.9" fill="#c7c8d2" text-anchor="middle" textLength="24.65" lengthAdjust="spacingAndGlyphs" clip-path="url(#c7)">16:00</text><text x="209.8" y="453.8" font-size="9.9" fill="#c7c8d2" text-anchor="middle" textLength="24.65" lengthAdjust="spacingAndGlyphs" clip-path="url(#c7)">18:00</text><text x="275.6" y="453.8" font-size="9.9" fill="#c7c8d2" text-anchor="middle" textLength="27.2" lengthAdjust="spacingAndGlyphs" clip-path="url(#c7)">20:00</text><text x="341.4" y="453.8" font-size="9.9" fill="#c7c8d2" text-anchor="middle" textLength="27.2" lengthAdjust="spacingAndGlyphs" clip-path="url(#c7)">22:00</text><text x="407.2" y="453.8" font-size="9.9" fill="#c7c8d2" text-anchor="middle" textLength="27.2" lengthAdjust="spacingAndGlyphs" clip-path="url(#c7)">00:00</text><text x="473" y="453.8" font-size="9.9" fill="#c7c8d2" text-anchor="middle" textLength="27.2" lengthAdjust="spacingAndGlyphs" clip-path="url(#c7)">02:00</text><text x="538.8" y="453.8" font-size="9.9" fill="#c7c8d2" text-anchor="middle" textLength="27.2" lengthAdjust="spacingAndGlyphs" clip-path="url(#c7)">04:00</text><text x="604.6" y="453.8" font-size="9.9" fill="#c7c8d2" text-anchor="middle" textLength="27.2" lengthAdjust="spacingAndGlyphs" clip-path="url(#c7)">06:00</text><text x="670.4" y="453.8" font-size="9.9" fill="#c7c8d2" text-anchor="middle" textLength="27.2" lengthAdjust="spacingAndGlyphs" clip-path="url(#c7)">08:00</text><text x="736.2" y="453.8" font-size="9.9" fill="#c7c8d2" text-anchor="middle" textLength="24.65" lengthAdjust="spacingAndGlyphs" clip-path="url(#c7)">10:00</text><text x="802" y="453.8" font-size="9.9" fill="#c7c8d2" text-anchor="middle" textLength="24.65" lengthAdjust="spacingAndGlyphs" clip-path="url(#c7)">12:00</text><g transform="translate(0,1.0)"><g clip-path="url(#c8)"><path d="M45.7 438.4 L45.7 381.36 L78.6 381.36 L111.5 399.5 L144.4 419.21 L177.3 372.31 L210.2 438.4 L243.1 438.03 L276 436.93 L308.9 344.5 L341.8 337.49 L374.7 337.49 L407.6 337.49 L440.5 337.49 L473.4 337.49 L506.3 337.49 L539.2 337.49 L572.1 337.49 L605 337.49 L637.9 337.49 L670.8 337.49 L703.7 337.49 L736.6 337.49 L769.5 337.49 L802.4 333.81 L835.3 326.8 L835.3 438.4 Z" fill="#73bf69" fill-opacity="0.05" stroke="none"/><path d="M45.7 381.36 L78.6 381.36 L111.5 399.5 L144.4 419.21 L177.3 372.31 L210.2 438.4 L243.1 438.03 L276 436.93 L308.9 344.5 L341.8 337.49 L374.7 337.49 L407.6 337.49 L440.5 337.49 L473.4 337.49 L506.3 337.49 L539.2 337.49 L572.1 337.49 L605 337.49 L637.9 337.49 L670.8 337.49 L703.7 337.49 L736.6 337.49 L769.5 337.49 L802.4 333.81 L835.3 326.8" fill="none" stroke="#73bf69" stroke-width="2.4" stroke-linejoin="round" stroke-linecap="round"/><path d="M41.5 381.36a4.2 4.2 0 1 0 8.4 0a4.2 4.2 0 1 0 -8.4 0M74.4 381.36a4.2 4.2 0 1 0 8.4 0a4.2 4.2 0 1 0 -8.4 0M107.3 399.5a4.2 4.2 0 1 0 8.4 0a4.2 4.2 0 1 0 -8.4 0M140.2 419.21a4.2 4.2 0 1 0 8.4 0a4.2 4.2 0 1 0 -8.4 0M173.1 372.31a4.2 4.2 0 1 0 8.4 0a4.2 4.2 0 1 0 -8.4 0M206 438.4a4.2 4.2 0 1 0 8.4 0a4.2 4.2 0 1 0 -8.4 0M238.9 438.03a4.2 4.2 0 1 0 8.4 0a4.2 4.2 0 1 0 -8.4 0M271.8 436.93a4.2 4.2 0 1 0 8.4 0a4.2 4.2 0 1 0 -8.4 0M304.7 344.5a4.2 4.2 0 1 0 8.4 0a4.2 4.2 0 1 0 -8.4 0M337.6 337.49a4.2 4.2 0 1 0 8.4 0a4.2 4.2 0 1 0 -8.4 0M370.5 337.49a4.2 4.2 0 1 0 8.4 0a4.2 4.2 0 1 0 -8.4 0M403.4 337.49a4.2 4.2 0 1 0 8.4 0a4.2 4.2 0 1 0 -8.4 0M436.3 337.49a4.2 4.2 0 1 0 8.4 0a4.2 4.2 0 1 0 -8.4 0M469.2 337.49a4.2 4.2 0 1 0 8.4 0a4.2 4.2 0 1 0 -8.4 0M502.1 337.49a4.2 4.2 0 1 0 8.4 0a4.2 4.2 0 1 0 -8.4 0M535 337.49a4.2 4.2 0 1 0 8.4 0a4.2 4.2 0 1 0 -8.4 0M567.9 337.49a4.2 4.2 0 1 0 8.4 0a4.2 4.2 0 1 0 -8.4 0M600.8 337.49a4.2 4.2 0 1 0 8.4 0a4.2 4.2 0 1 0 -8.4 0M633.7 337.49a4.2 4.2 0 1 0 8.4 0a4.2 4.2 0 1 0 -8.4 0M666.6 337.49a4.2 4.2 0 1 0 8.4 0a4.2 4.2 0 1 0 -8.4 0M699.5 337.49a4.2 4.2 0 1 0 8.4 0a4.2 4.2 0 1 0 -8.4 0M732.4 337.49a4.2 4.2 0 1 0 8.4 0a4.2 4.2 0 1 0 -8.4 0M765.3 337.49a4.2 4.2 0 1 0 8.4 0a4.2 4.2 0 1 0 -8.4 0M798.2 333.81a4.2 4.2 0 1 0 8.4 0a4.2 4.2 0 1 0 -8.4 0M831.1 326.8a4.2 4.2 0 1 0 8.4 0a4.2 4.2 0 1 0 -8.4 0" fill="#73bf69"/></g><g clip-path="url(#c8)"><path d="M45.7 438.4 L45.7 437.48 L78.6 436.93 L111.5 438.4 L144.4 438.4 L177.3 438.4 L210.2 438.4 L243.1 438.4 L276 438.4 L308.9 438.4 L341.8 438.4 L374.7 438.4 L407.6 438.4 L440.5 438.4 L473.4 438.4 L506.3 438.4 L539.2 438.4 L572.1 438.4 L605 438.4 L637.9 438.4 L670.8 438.4 L703.7 438.4 L736.6 437.3 L769.5 438.4 L802.4 438.4 L835.3 437.3 L835.3 438.4 Z" fill="#f2cc0c" fill-opacity="0.05" stroke="none"/><path d="M45.7 437.48 L78.6 436.93 L111.5 438.4 L144.4 438.4 L177.3 438.4 L210.2 438.4 L243.1 438.4 L276 438.4 L308.9 438.4 L341.8 438.4 L374.7 438.4 L407.6 438.4 L440.5 438.4 L473.4 438.4 L506.3 438.4 L539.2 438.4 L572.1 438.4 L605 438.4 L637.9 438.4 L670.8 438.4 L703.7 438.4 L736.6 437.3 L769.5 438.4 L802.4 438.4 L835.3 437.3" fill="none" stroke="#f2cc0c" stroke-width="2.4" stroke-linejoin="round" stroke-linecap="round"/><path d="M41.5 437.48a4.2 4.2 0 1 0 8.4 0a4.2 4.2 0 1 0 -8.4 0M74.4 436.93a4.2 4.2 0 1 0 8.4 0a4.2 4.2 0 1 0 -8.4 0M107.3 438.4a4.2 4.2 0 1 0 8.4 0a4.2 4.2 0 1 0 -8.4 0M140.2 438.4a4.2 4.2 0 1 0 8.4 0a4.2 4.2 0 1 0 -8.4 0M173.1 438.4a4.2 4.2 0 1 0 8.4 0a4.2 4.2 0 1 0 -8.4 0M206 438.4a4.2 4.2 0 1 0 8.4 0a4.2 4.2 0 1 0 -8.4 0M238.9 438.4a4.2 4.2 0 1 0 8.4 0a4.2 4.2 0 1 0 -8.4 0M271.8 438.4a4.2 4.2 0 1 0 8.4 0a4.2 4.2 0 1 0 -8.4 0M304.7 438.4a4.2 4.2 0 1 0 8.4 0a4.2 4.2 0 1 0 -8.4 0M337.6 438.4a4.2 4.2 0 1 0 8.4 0a4.2 4.2 0 1 0 -8.4 0M370.5 438.4a4.2 4.2 0 1 0 8.4 0a4.2 4.2 0 1 0 -8.4 0M403.4 438.4a4.2 4.2 0 1 0 8.4 0a4.2 4.2 0 1 0 -8.4 0M436.3 438.4a4.2 4.2 0 1 0 8.4 0a4.2 4.2 0 1 0 -8.4 0M469.2 438.4a4.2 4.2 0 1 0 8.4 0a4.2 4.2 0 1 0 -8.4 0M502.1 438.4a4.2 4.2 0 1 0 8.4 0a4.2 4.2 0 1 0 -8.4 0M535 438.4a4.2 4.2 0 1 0 8.4 0a4.2 4.2 0 1 0 -8.4 0M567.9 438.4a4.2 4.2 0 1 0 8.4 0a4.2 4.2 0 1 0 -8.4 0M600.8 438.4a4.2 4.2 0 1 0 8.4 0a4.2 4.2 0 1 0 -8.4 0M633.7 438.4a4.2 4.2 0 1 0 8.4 0a4.2 4.2 0 1 0 -8.4 0M666.6 438.4a4.2 4.2 0 1 0 8.4 0a4.2 4.2 0 1 0 -8.4 0M699.5 438.4a4.2 4.2 0 1 0 8.4 0a4.2 4.2 0 1 0 -8.4 0M732.4 437.3a4.2 4.2 0 1 0 8.4 0a4.2 4.2 0 1 0 -8.4 0M765.3 438.4a4.2 4.2 0 1 0 8.4 0a4.2 4.2 0 1 0 -8.4 0M798.2 438.4a4.2 4.2 0 1 0 8.4 0a4.2 4.2 0 1 0 -8.4 0M831.1 437.3a4.2 4.2 0 1 0 8.4 0a4.2 4.2 0 1 0 -8.4 0" fill="#f2cc0c"/></g><g clip-path="url(#c8)"><path d="M45.7 438.4 L45.7 381.36 L78.6 381.36 L111.5 399.5 L144.4 419.21 L177.3 372.31 L210.2 438.4 L243.1 438.03 L276 436.93 L308.9 344.5 L341.8 337.49 L374.7 337.49 L407.6 337.49 L440.5 337.49 L473.4 337.49 L506.3 337.49 L539.2 337.49 L572.1 337.49 L605 337.49 L637.9 337.49 L670.8 337.49 L703.7 337.49 L736.6 337.49 L769.5 337.49 L802.4 333.81 L835.3 326.8 L835.3 438.4 Z" fill="#8ab8ff" fill-opacity="0.05" stroke="none"/><path d="M45.7 381.36 L78.6 381.36 L111.5 399.5 L144.4 419.21 L177.3 372.31 L210.2 438.4 L243.1 438.03 L276 436.93 L308.9 344.5 L341.8 337.49 L374.7 337.49 L407.6 337.49 L440.5 337.49 L473.4 337.49 L506.3 337.49 L539.2 337.49 L572.1 337.49 L605 337.49 L637.9 337.49 L670.8 337.49 L703.7 337.49 L736.6 337.49 L769.5 337.49 L802.4 333.81 L835.3 326.8" fill="none" stroke="#8ab8ff" stroke-width="2.4" stroke-linejoin="round" stroke-linecap="round"/><path d="M41.5 381.36a4.2 4.2 0 1 0 8.4 0a4.2 4.2 0 1 0 -8.4 0M74.4 381.36a4.2 4.2 0 1 0 8.4 0a4.2 4.2 0 1 0 -8.4 0M107.3 399.5a4.2 4.2 0 1 0 8.4 0a4.2 4.2 0 1 0 -8.4 0M140.2 419.21a4.2 4.2 0 1 0 8.4 0a4.2 4.2 0 1 0 -8.4 0M173.1 372.31a4.2 4.2 0 1 0 8.4 0a4.2 4.2 0 1 0 -8.4 0M206 438.4a4.2 4.2 0 1 0 8.4 0a4.2 4.2 0 1 0 -8.4 0M238.9 438.03a4.2 4.2 0 1 0 8.4 0a4.2 4.2 0 1 0 -8.4 0M271.8 436.93a4.2 4.2 0 1 0 8.4 0a4.2 4.2 0 1 0 -8.4 0M304.7 344.5a4.2 4.2 0 1 0 8.4 0a4.2 4.2 0 1 0 -8.4 0M337.6 337.49a4.2 4.2 0 1 0 8.4 0a4.2 4.2 0 1 0 -8.4 0M370.5 337.49a4.2 4.2 0 1 0 8.4 0a4.2 4.2 0 1 0 -8.4 0M403.4 337.49a4.2 4.2 0 1 0 8.4 0a4.2 4.2 0 1 0 -8.4 0M436.3 337.49a4.2 4.2 0 1 0 8.4 0a4.2 4.2 0 1 0 -8.4 0M469.2 337.49a4.2 4.2 0 1 0 8.4 0a4.2 4.2 0 1 0 -8.4 0M502.1 337.49a4.2 4.2 0 1 0 8.4 0a4.2 4.2 0 1 0 -8.4 0M535 337.49a4.2 4.2 0 1 0 8.4 0a4.2 4.2 0 1 0 -8.4 0M567.9 337.49a4.2 4.2 0 1 0 8.4 0a4.2 4.2 0 1 0 -8.4 0M600.8 337.49a4.2 4.2 0 1 0 8.4 0a4.2 4.2 0 1 0 -8.4 0M633.7 337.49a4.2 4.2 0 1 0 8.4 0a4.2 4.2 0 1 0 -8.4 0M666.6 337.49a4.2 4.2 0 1 0 8.4 0a4.2 4.2 0 1 0 -8.4 0M699.5 337.49a4.2 4.2 0 1 0 8.4 0a4.2 4.2 0 1 0 -8.4 0M732.4 337.49a4.2 4.2 0 1 0 8.4 0a4.2 4.2 0 1 0 -8.4 0M765.3 337.49a4.2 4.2 0 1 0 8.4 0a4.2 4.2 0 1 0 -8.4 0M798.2 333.81a4.2 4.2 0 1 0 8.4 0a4.2 4.2 0 1 0 -8.4 0M831.1 326.8a4.2 4.2 0 1 0 8.4 0a4.2 4.2 0 1 0 -8.4 0" fill="#8ab8ff"/></g></g><rect x="22" y="463" width="12" height="4" rx="2" fill="#73bf69"/><text x="40.6" y="467.9" font-size="10.3" fill="#ccccdc" textLength="24.6" lengthAdjust="spacingAndGlyphs">Rafiki</text><rect x="74" y="463" width="12" height="4" rx="2" fill="#f2cc0c"/><text x="92.6" y="467.9" font-size="10.3" fill="#ccccdc" textLength="58.6" lengthAdjust="spacingAndGlyphs">Rafiki Money</text><rect x="160" y="463" width="12" height="4" rx="2" fill="#8ab8ff"/><text x="178.6" y="467.9" font-size="10.3" fill="#ccccdc" textLength="29.2" lengthAdjust="spacingAndGlyphs">TOTAL</text><rect x="859.5" y="274.5" width="840" height="205" rx="2" fill="#181b1f" stroke="#2e3035" stroke-width="1"/><text x="867" y="291" font-size="11.4" fill="#ccccdc" textLength="156" lengthAdjust="spacingAndGlyphs" stroke="#ccccdc" stroke-width="0.2">Value Sent Through Network</text><circle cx="1043.1" cy="287.3" r="4.9" fill="none" stroke="#6e9fff" stroke-width="1.3"/><path d="M1043.1 284.61V287.3H1040.65" fill="none" stroke="#6e9fff" stroke-width="1.3"/><text x="1052.7" y="290.9" font-size="11.5" fill="#6e9fff" textLength="53.1" lengthAdjust="spacingAndGlyphs">Last 1 day</text><g transform="translate(0,1.0)"><path d="M937 439.1H1687.4M937 392.6H1687.4M937 346.1H1687.4M963.9 314.3V439.6M1026.4 314.3V439.6M1088.9 314.3V439.6M1151.4 314.3V439.6M1213.9 314.3V439.6M1276.4 314.3V439.6M1338.9 314.3V439.6M1401.4 314.3V439.6M1463.9 314.3V439.6M1526.4 314.3V439.6M1588.9 314.3V439.6M1651.4 314.3V439.6" stroke="#2c2e33" stroke-width="1" fill="none"/><text x="932.2" y="442.6" font-size="9.9" fill="#c7c8d2" text-anchor="end" textLength="33.65" lengthAdjust="spacingAndGlyphs">0.0000</text><text x="932.2" y="396.1" font-size="9.9" fill="#c7c8d2" text-anchor="end" textLength="63.4" lengthAdjust="spacingAndGlyphs">200000.0000</text><text x="932.2" y="349.6" font-size="9.9" fill="#c7c8d2" text-anchor="end" textLength="63.4" lengthAdjust="spacingAndGlyphs">400000.0000</text></g><text x="963.5" y="453.8" font-size="9.9" fill="#c7c8d2" text-anchor="middle" textLength="24.65" lengthAdjust="spacingAndGlyphs" clip-path="url(#c9)">14:00</text><text x="1026" y="453.8" font-size="9.9" fill="#c7c8d2" text-anchor="middle" textLength="24.65" lengthAdjust="spacingAndGlyphs" clip-path="url(#c9)">16:00</text><text x="1088.5" y="453.8" font-size="9.9" fill="#c7c8d2" text-anchor="middle" textLength="24.65" lengthAdjust="spacingAndGlyphs" clip-path="url(#c9)">18:00</text><text x="1151" y="453.8" font-size="9.9" fill="#c7c8d2" text-anchor="middle" textLength="27.2" lengthAdjust="spacingAndGlyphs" clip-path="url(#c9)">20:00</text><text x="1213.5" y="453.8" font-size="9.9" fill="#c7c8d2" text-anchor="middle" textLength="27.2" lengthAdjust="spacingAndGlyphs" clip-path="url(#c9)">22:00</text><text x="1276" y="453.8" font-size="9.9" fill="#c7c8d2" text-anchor="middle" textLength="27.2" lengthAdjust="spacingAndGlyphs" clip-path="url(#c9)">00:00</text><text x="1338.5" y="453.8" font-size="9.9" fill="#c7c8d2" text-anchor="middle" textLength="27.2" lengthAdjust="spacingAndGlyphs" clip-path="url(#c9)">02:00</text><text x="1401" y="453.8" font-size="9.9" fill="#c7c8d2" text-anchor="middle" textLength="27.2" lengthAdjust="spacingAndGlyphs" clip-path="url(#c9)">04:00</text><text x="1463.5" y="453.8" font-size="9.9" fill="#c7c8d2" text-anchor="middle" textLength="27.2" lengthAdjust="spacingAndGlyphs" clip-path="url(#c9)">06:00</text><text x="1526" y="453.8" font-size="9.9" fill="#c7c8d2" text-anchor="middle" textLength="27.2" lengthAdjust="spacingAndGlyphs" clip-path="url(#c9)">08:00</text><text x="1588.5" y="453.8" font-size="9.9" fill="#c7c8d2" text-anchor="middle" textLength="24.65" lengthAdjust="spacingAndGlyphs" clip-path="url(#c9)">10:00</text><text x="1651" y="453.8" font-size="9.9" fill="#c7c8d2" text-anchor="middle" textLength="24.65" lengthAdjust="spacingAndGlyphs" clip-path="url(#c9)">12:00</text><g transform="translate(0,1.0)"><g clip-path="url(#c10)"><path d="M932.65 439.1 L932.65 377.72 L963.9 370.4 L995.15 370.4 L1026.4 370.4 L1057.65 386 L1088.9 437.31 L1120.15 380.21 L1151.4 370.4 L1182.65 353.49 L1213.9 352.61 L1245.15 352.61 L1276.4 351.68 L1307.65 352.61 L1338.9 352.61 L1370.15 352.61 L1401.4 352.61 L1432.65 352.61 L1463.9 352.61 L1495.15 352.61 L1526.4 352.61 L1557.65 352.61 L1588.9 352.61 L1620.15 352.61 L1651.4 347.73 L1682.65 325.41 L1682.65 439.1 Z" fill="#73bf69" fill-opacity="0.05" stroke="none"/><path d="M932.65 377.72 L963.9 370.4 L995.15 370.4 L1026.4 370.4 L1057.65 386 L1088.9 437.31 L1120.15 380.21 L1151.4 370.4 L1182.65 353.49 L1213.9 352.61 L1245.15 352.61 L1276.4 351.68 L1307.65 352.61 L1338.9 352.61 L1370.15 352.61 L1401.4 352.61 L1432.65 352.61 L1463.9 352.61 L1495.15 352.61 L1526.4 352.61 L1557.65 352.61 L1588.9 352.61 L1620.15 352.61 L1651.4 347.73 L1682.65 325.41" fill="none" stroke="#73bf69" stroke-width="2.4" stroke-linejoin="round" stroke-linecap="round"/><path d="M928.45 377.72a4.2 4.2 0 1 0 8.4 0a4.2 4.2 0 1 0 -8.4 0M959.7 370.4a4.2 4.2 0 1 0 8.4 0a4.2 4.2 0 1 0 -8.4 0M990.95 370.4a4.2 4.2 0 1 0 8.4 0a4.2 4.2 0 1 0 -8.4 0M1022.2 370.4a4.2 4.2 0 1 0 8.4 0a4.2 4.2 0 1 0 -8.4 0M1053.45 386a4.2 4.2 0 1 0 8.4 0a4.2 4.2 0 1 0 -8.4 0M1084.7 437.31a4.2 4.2 0 1 0 8.4 0a4.2 4.2 0 1 0 -8.4 0M1115.95 380.21a4.2 4.2 0 1 0 8.4 0a4.2 4.2 0 1 0 -8.4 0M1147.2 370.4a4.2 4.2 0 1 0 8.4 0a4.2 4.2 0 1 0 -8.4 0M1178.45 353.49a4.2 4.2 0 1 0 8.4 0a4.2 4.2 0 1 0 -8.4 0M1209.7 352.61a4.2 4.2 0 1 0 8.4 0a4.2 4.2 0 1 0 -8.4 0M1240.95 352.61a4.2 4.2 0 1 0 8.4 0a4.2 4.2 0 1 0 -8.4 0M1272.2 351.68a4.2 4.2 0 1 0 8.4 0a4.2 4.2 0 1 0 -8.4 0M1303.45 352.61a4.2 4.2 0 1 0 8.4 0a4.2 4.2 0 1 0 -8.4 0M1334.7 352.61a4.2 4.2 0 1 0 8.4 0a4.2 4.2 0 1 0 -8.4 0M1365.95 352.61a4.2 4.2 0 1 0 8.4 0a4.2 4.2 0 1 0 -8.4 0M1397.2 352.61a4.2 4.2 0 1 0 8.4 0a4.2 4.2 0 1 0 -8.4 0M1428.45 352.61a4.2 4.2 0 1 0 8.4 0a4.2 4.2 0 1 0 -8.4 0M1459.7 352.61a4.2 4.2 0 1 0 8.4 0a4.2 4.2 0 1 0 -8.4 0M1490.95 352.61a4.2 4.2 0 1 0 8.4 0a4.2 4.2 0 1 0 -8.4 0M1522.2 352.61a4.2 4.2 0 1 0 8.4 0a4.2 4.2 0 1 0 -8.4 0M1553.45 352.61a4.2 4.2 0 1 0 8.4 0a4.2 4.2 0 1 0 -8.4 0M1584.7 352.61a4.2 4.2 0 1 0 8.4 0a4.2 4.2 0 1 0 -8.4 0M1615.95 352.61a4.2 4.2 0 1 0 8.4 0a4.2 4.2 0 1 0 -8.4 0M1647.2 347.73a4.2 4.2 0 1 0 8.4 0a4.2 4.2 0 1 0 -8.4 0M1678.45 325.41a4.2 4.2 0 1 0 8.4 0a4.2 4.2 0 1 0 -8.4 0" fill="#73bf69"/></g></g><rect x="869" y="463" width="12" height="4" rx="2" fill="#73bf69"/><text x="887.6" y="467.9" font-size="10.3" fill="#ccccdc" textLength="21.3" lengthAdjust="spacingAndGlyphs">Total</text><rect x="1706.5" y="274.5" width="840" height="205" rx="2" fill="#181b1f" stroke="#2e3035" stroke-width="1"/><text x="1714" y="291" font-size="11.4" fill="#ccccdc" textLength="157" lengthAdjust="spacingAndGlyphs" stroke="#ccccdc" stroke-width="0.2">Transaction Average Amount</text><circle cx="1890.1" cy="287.3" r="4.9" fill="none" stroke="#6e9fff" stroke-width="1.3"/><path d="M1890.1 284.61V287.3H1887.65" fill="none" stroke="#6e9fff" stroke-width="1.3"/><text x="1899.7" y="290.9" font-size="11.5" fill="#6e9fff" textLength="53.1" lengthAdjust="spacingAndGlyphs">Last 1 day</text><g transform="translate(0,1.0)"><path d="M1771 438.4H2533.9M1771 404.75H2533.9M1771 371.1H2533.9M1771 337.45H2533.9M1798.8 314.3V438.9M1862.3 314.3V438.9M1925.8 314.3V438.9M1989.3 314.3V438.9M2052.8 314.3V438.9M2116.3 314.3V438.9M2179.8 314.3V438.9M2243.3 314.3V438.9M2306.8 314.3V438.9M2370.3 314.3V438.9M2433.8 314.3V438.9M2497.3 314.3V438.9" stroke="#2c2e33" stroke-width="1" fill="none"/><text x="1766.2" y="441.9" font-size="9.9" fill="#c7c8d2" text-anchor="end" textLength="33.65" lengthAdjust="spacingAndGlyphs">0.0000</text><text x="1766.2" y="408.25" font-size="9.9" fill="#c7c8d2" text-anchor="end" textLength="51.5" lengthAdjust="spacingAndGlyphs">2000.0000</text><text x="1766.2" y="374.6" font-size="9.9" fill="#c7c8d2" text-anchor="end" textLength="51.5" lengthAdjust="spacingAndGlyphs">4000.0000</text><text x="1766.2" y="340.95" font-size="9.9" fill="#c7c8d2" text-anchor="end" textLength="51.5" lengthAdjust="spacingAndGlyphs">6000.0000</text></g><text x="1798.4" y="453.8" font-size="9.9" fill="#c7c8d2" text-anchor="middle" textLength="24.65" lengthAdjust="spacingAndGlyphs" clip-path="url(#c11)">14:00</text><text x="1861.9" y="453.8" font-size="9.9" fill="#c7c8d2" text-anchor="middle" textLength="24.65" lengthAdjust="spacingAndGlyphs" clip-path="url(#c11)">16:00</text><text x="1925.4" y="453.8" font-size="9.9" fill="#c7c8d2" text-anchor="middle" textLength="24.65" lengthAdjust="spacingAndGlyphs" clip-path="url(#c11)">18:00</text><text x="1988.9" y="453.8" font-size="9.9" fill="#c7c8d2" text-anchor="middle" textLength="27.2" lengthAdjust="spacingAndGlyphs" clip-path="url(#c11)">20:00</text><text x="2052.4" y="453.8" font-size="9.9" fill="#c7c8d2" text-anchor="middle" textLength="27.2" lengthAdjust="spacingAndGlyphs" clip-path="url(#c11)">22:00</text><text x="2115.9" y="453.8" font-size="9.9" fill="#c7c8d2" text-anchor="middle" textLength="27.2" lengthAdjust="spacingAndGlyphs" clip-path="url(#c11)">00:00</text><text x="2179.4" y="453.8" font-size="9.9" fill="#c7c8d2" text-anchor="middle" textLength="27.2" lengthAdjust="spacingAndGlyphs" clip-path="url(#c11)">02:00</text><text x="2242.9" y="453.8" font-size="9.9" fill="#c7c8d2" text-anchor="middle" textLength="27.2" lengthAdjust="spacingAndGlyphs" clip-path="url(#c11)">04:00</text><text x="2306.4" y="453.8" font-size="9.9" fill="#c7c8d2" text-anchor="middle" textLength="27.2" lengthAdjust="spacingAndGlyphs" clip-path="url(#c11)">06:00</text><text x="2369.9" y="453.8" font-size="9.9" fill="#c7c8d2" text-anchor="middle" textLength="27.2" lengthAdjust="spacingAndGlyphs" clip-path="url(#c11)">08:00</text><text x="2433.4" y="453.8" font-size="9.9" fill="#c7c8d2" text-anchor="middle" textLength="24.65" lengthAdjust="spacingAndGlyphs" clip-path="url(#c11)">10:00</text><text x="2496.9" y="453.8" font-size="9.9" fill="#c7c8d2" text-anchor="middle" textLength="24.65" lengthAdjust="spacingAndGlyphs" clip-path="url(#c11)">12:00</text><g transform="translate(0,1.0)"><g clip-path="url(#c12)"><path d="M1767.05 438.4 L1767.05 437.56 L1798.8 437.39 L1830.55 436.09 L1862.3 434.28 L1894.05 437.73 L1957.55 325.4 L1989.3 387.17 L2021.05 437.73 L2052.8 437.73 L2084.55 437.73 L2116.3 437.73 L2148.05 437.73 L2179.8 437.73 L2211.55 437.73 L2243.3 437.73 L2275.05 437.73 L2306.8 437.73 L2338.55 437.73 L2370.3 437.73 L2402.05 437.73 L2433.8 437.73 L2465.55 437.73 L2497.3 437.73 L2529.05 437.73 L2529.05 438.4 Z" fill="#73bf69" fill-opacity="0.05" stroke="none"/><path d="M1767.05 437.56 L1798.8 437.39 L1830.55 436.09 L1862.3 434.28 L1894.05 437.73 L1957.55 325.4 L1989.3 387.17 L2021.05 437.73 L2052.8 437.73 L2084.55 437.73 L2116.3 437.73 L2148.05 437.73 L2179.8 437.73 L2211.55 437.73 L2243.3 437.73 L2275.05 437.73 L2306.8 437.73 L2338.55 437.73 L2370.3 437.73 L2402.05 437.73 L2433.8 437.73 L2465.55 437.73 L2497.3 437.73 L2529.05 437.73" fill="none" stroke="#73bf69" stroke-width="2.4" stroke-linejoin="round" stroke-linecap="round"/><path d="M1762.85 437.56a4.2 4.2 0 1 0 8.4 0a4.2 4.2 0 1 0 -8.4 0M1794.6 437.39a4.2 4.2 0 1 0 8.4 0a4.2 4.2 0 1 0 -8.4 0M1826.35 436.09a4.2 4.2 0 1 0 8.4 0a4.2 4.2 0 1 0 -8.4 0M1858.1 434.28a4.2 4.2 0 1 0 8.4 0a4.2 4.2 0 1 0 -8.4 0M1889.85 437.73a4.2 4.2 0 1 0 8.4 0a4.2 4.2 0 1 0 -8.4 0M1953.35 325.4a4.2 4.2 0 1 0 8.4 0a4.2 4.2 0 1 0 -8.4 0M1985.1 387.17a4.2 4.2 0 1 0 8.4 0a4.2 4.2 0 1 0 -8.4 0M2016.85 437.73a4.2 4.2 0 1 0 8.4 0a4.2 4.2 0 1 0 -8.4 0M2048.6 437.73a4.2 4.2 0 1 0 8.4 0a4.2 4.2 0 1 0 -8.4 0M2080.35 437.73a4.2 4.2 0 1 0 8.4 0a4.2 4.2 0 1 0 -8.4 0M2112.1 437.73a4.2 4.2 0 1 0 8.4 0a4.2 4.2 0 1 0 -8.4 0M2143.85 437.73a4.2 4.2 0 1 0 8.4 0a4.2 4.2 0 1 0 -8.4 0M2175.6 437.73a4.2 4.2 0 1 0 8.4 0a4.2 4.2 0 1 0 -8.4 0M2207.35 437.73a4.2 4.2 0 1 0 8.4 0a4.2 4.2 0 1 0 -8.4 0M2239.1 437.73a4.2 4.2 0 1 0 8.4 0a4.2 4.2 0 1 0 -8.4 0M2270.85 437.73a4.2 4.2 0 1 0 8.4 0a4.2 4.2 0 1 0 -8.4 0M2302.6 437.73a4.2 4.2 0 1 0 8.4 0a4.2 4.2 0 1 0 -8.4 0M2334.35 437.73a4.2 4.2 0 1 0 8.4 0a4.2 4.2 0 1 0 -8.4 0M2366.1 437.73a4.2 4.2 0 1 0 8.4 0a4.2 4.2 0 1 0 -8.4 0M2397.85 437.73a4.2 4.2 0 1 0 8.4 0a4.2 4.2 0 1 0 -8.4 0M2429.6 437.73a4.2 4.2 0 1 0 8.4 0a4.2 4.2 0 1 0 -8.4 0M2461.35 437.73a4.2 4.2 0 1 0 8.4 0a4.2 4.2 0 1 0 -8.4 0M2493.1 437.73a4.2 4.2 0 1 0 8.4 0a4.2 4.2 0 1 0 -8.4 0M2524.85 437.73a4.2 4.2 0 1 0 8.4 0a4.2 4.2 0 1 0 -8.4 0" fill="#73bf69"/></g></g><rect x="1716" y="463" width="12" height="4" rx="2" fill="#73bf69"/><text x="1734.6" y="467.9" font-size="10.3" fill="#ccccdc" textLength="438.6" lengthAdjust="spacingAndGlyphs">sum (increase(transactions_amount_total[1h])) / sum (increase(transactions_total[1h])) * 0.0001</text><rect x="12.5" y="487.5" width="840" height="205" rx="2" fill="#181b1f" stroke="#2e3035" stroke-width="1"/><text x="20" y="504" font-size="11.4" fill="#ccccdc" textLength="163.4" lengthAdjust="spacingAndGlyphs" stroke="#ccccdc" stroke-width="0.2">Transaction Count (by source)</text><circle cx="204.4" cy="500.3" r="4.9" fill="none" stroke="#6e9fff" stroke-width="1.3"/><path d="M204.4 497.61V500.3H201.95" fill="none" stroke="#6e9fff" stroke-width="1.3"/><text x="214" y="503.9" font-size="11.5" fill="#6e9fff" textLength="61.9" lengthAdjust="spacingAndGlyphs">Last 1 week</text><g transform="translate(0,0.5)"><path d="M57.6 651.4H840.4M57.6 622.92H840.4M57.6 594.44H840.4M57.6 565.96H840.4M57.6 537.48H840.4M108.3 526.8V651.9M220.13 526.8V651.9M331.96 526.8V651.9M443.79 526.8V651.9M555.62 526.8V651.9M667.45 526.8V651.9M779.28 526.8V651.9" stroke="#2c2e33" stroke-width="1" fill="none"/><text x="52.8" y="654.9" font-size="9.9" fill="#c7c8d2" text-anchor="end" textLength="5.95" lengthAdjust="spacingAndGlyphs">0</text><text x="52.8" y="626.42" font-size="9.9" fill="#c7c8d2" text-anchor="end" textLength="27.2" lengthAdjust="spacingAndGlyphs">10000</text><text x="52.8" y="597.94" font-size="9.9" fill="#c7c8d2" text-anchor="end" textLength="29.75" lengthAdjust="spacingAndGlyphs">20000</text><text x="52.8" y="569.46" font-size="9.9" fill="#c7c8d2" text-anchor="end" textLength="29.75" lengthAdjust="spacingAndGlyphs">30000</text><text x="52.8" y="540.98" font-size="9.9" fill="#c7c8d2" text-anchor="end" textLength="29.75" lengthAdjust="spacingAndGlyphs">40000</text></g><text x="107.9" y="666.4" font-size="9.9" fill="#c7c8d2" text-anchor="middle" textLength="58.8" lengthAdjust="spacingAndGlyphs" clip-path="url(#c13)">04/04 00:00</text><text x="219.73" y="666.4" font-size="9.9" fill="#c7c8d2" text-anchor="middle" textLength="58.8" lengthAdjust="spacingAndGlyphs" clip-path="url(#c13)">04/05 00:00</text><text x="331.56" y="666.4" font-size="9.9" fill="#c7c8d2" text-anchor="middle" textLength="58.8" lengthAdjust="spacingAndGlyphs" clip-path="url(#c13)">04/06 00:00</text><text x="443.39" y="666.4" font-size="9.9" fill="#c7c8d2" text-anchor="middle" textLength="58.8" lengthAdjust="spacingAndGlyphs" clip-path="url(#c13)">04/07 00:00</text><text x="555.22" y="666.4" font-size="9.9" fill="#c7c8d2" text-anchor="middle" textLength="58.8" lengthAdjust="spacingAndGlyphs" clip-path="url(#c13)">04/08 00:00</text><text x="667.05" y="666.4" font-size="9.9" fill="#c7c8d2" text-anchor="middle" textLength="58.8" lengthAdjust="spacingAndGlyphs" clip-path="url(#c13)">04/09 00:00</text><text x="778.88" y="666.4" font-size="9.9" fill="#c7c8d2" text-anchor="middle" textLength="56.25" lengthAdjust="spacingAndGlyphs" clip-path="url(#c13)">04/10 00:00</text><g transform="translate(0,0.5)"><g clip-path="url(#c14)"><path d="M5.79 651.4 L5.79 651.4 L61.7 651.4 L117.62 651.4 L173.53 651.4 L229.45 651.4 L285.36 619.5 L341.28 578.21 L397.19 578.21 L453.11 578.21 L509.02 578.21 L564.94 578.21 L620.85 596.23 L676.77 546.02 L732.68 545.28 L788.6 539.47 L788.6 651.4 Z" fill="#f2cc0c" fill-opacity="0.05" stroke="none"/><path d="M5.79 651.4 L61.7 651.4 L117.62 651.4 L173.53 651.4 L229.45 651.4 L285.36 619.5 L341.28 578.21 L397.19 578.21 L453.11 578.21 L509.02 578.21 L564.94 578.21 L620.85 596.23 L676.77 546.02 L732.68 545.28 L788.6 539.47" fill="none" stroke="#f2cc0c" stroke-width="2.4" stroke-linejoin="round" stroke-linecap="round"/><path d="M1.59 651.4a4.2 4.2 0 1 0 8.4 0a4.2 4.2 0 1 0 -8.4 0M57.5 651.4a4.2 4.2 0 1 0 8.4 0a4.2 4.2 0 1 0 -8.4 0M113.42 651.4a4.2 4.2 0 1 0 8.4 0a4.2 4.2 0 1 0 -8.4 0M169.33 651.4a4.2 4.2 0 1 0 8.4 0a4.2 4.2 0 1 0 -8.4 0M225.25 651.4a4.2 4.2 0 1 0 8.4 0a4.2 4.2 0 1 0 -8.4 0M281.16 619.5a4.2 4.2 0 1 0 8.4 0a4.2 4.2 0 1 0 -8.4 0M337.08 578.21a4.2 4.2 0 1 0 8.4 0a4.2 4.2 0 1 0 -8.4 0M392.99 578.21a4.2 4.2 0 1 0 8.4 0a4.2 4.2 0 1 0 -8.4 0M448.91 578.21a4.2 4.2 0 1 0 8.4 0a4.2 4.2 0 1 0 -8.4 0M504.82 578.21a4.2 4.2 0 1 0 8.4 0a4.2 4.2 0 1 0 -8.4 0M560.74 578.21a4.2 4.2 0 1 0 8.4 0a4.2 4.2 0 1 0 -8.4 0M616.65 596.23a4.2 4.2 0 1 0 8.4 0a4.2 4.2 0 1 0 -8.4 0M672.57 546.02a4.2 4.2 0 1 0 8.4 0a4.2 4.2 0 1 0 -8.4 0M728.48 545.28a4.2 4.2 0 1 0 8.4 0a4.2 4.2 0 1 0 -8.4 0M784.4 539.47a4.2 4.2 0 1 0 8.4 0a4.2 4.2 0 1 0 -8.4 0" fill="#f2cc0c"/></g><g clip-path="url(#c14)"><path d="M5.79 651.4 L5.79 651.4 L61.7 651.4 L117.62 651.4 L173.53 651.4 L229.45 651.4 L285.36 635.17 L341.28 651.4 L397.19 652.4 L453.11 652.4 L509.02 652.4 L564.94 652.4 L620.85 651.2 L676.77 651.2 L732.68 651.2 L788.6 652.4 L788.6 651.4 Z" fill="#8ab8ff" fill-opacity="0.05" stroke="none"/><path d="M5.79 651.4 L61.7 651.4 L117.62 651.4 L173.53 651.4 L229.45 651.4 L285.36 635.17 L341.28 651.4 L397.19 652.4 L453.11 652.4 L509.02 652.4 L564.94 652.4 L620.85 651.2 L676.77 651.2 L732.68 651.2 L788.6 652.4" fill="none" stroke="#8ab8ff" stroke-width="2.4" stroke-linejoin="round" stroke-linecap="round"/><path d="M1.59 651.4a4.2 4.2 0 1 0 8.4 0a4.2 4.2 0 1 0 -8.4 0M57.5 651.4a4.2 4.2 0 1 0 8.4 0a4.2 4.2 0 1 0 -8.4 0M113.42 651.4a4.2 4.2 0 1 0 8.4 0a4.2 4.2 0 1 0 -8.4 0M169.33 651.4a4.2 4.2 0 1 0 8.4 0a4.2 4.2 0 1 0 -8.4 0M225.25 651.4a4.2 4.2 0 1 0 8.4 0a4.2 4.2 0 1 0 -8.4 0M281.16 635.17a4.2 4.2 0 1 0 8.4 0a4.2 4.2 0 1 0 -8.4 0M337.08 651.4a4.2 4.2 0 1 0 8.4 0a4.2 4.2 0 1 0 -8.4 0M392.99 652.4a4.2 4.2 0 1 0 8.4 0a4.2 4.2 0 1 0 -8.4 0M448.91 652.4a4.2 4.2 0 1 0 8.4 0a4.2 4.2 0 1 0 -8.4 0M504.82 652.4a4.2 4.2 0 1 0 8.4 0a4.2 4.2 0 1 0 -8.4 0M560.74 652.4a4.2 4.2 0 1 0 8.4 0a4.2 4.2 0 1 0 -8.4 0M616.65 651.2a4.2 4.2 0 1 0 8.4 0a4.2 4.2 0 1 0 -8.4 0M672.57 651.2a4.2 4.2 0 1 0 8.4 0a4.2 4.2 0 1 0 -8.4 0M728.48 651.2a4.2 4.2 0 1 0 8.4 0a4.2 4.2 0 1 0 -8.4 0M784.4 652.4a4.2 4.2 0 1 0 8.4 0a4.2 4.2 0 1 0 -8.4 0" fill="#8ab8ff"/></g><g clip-path="url(#c14)"><path d="M5.79 651.4 L5.79 651.4 L61.7 651.4 L117.62 651.4 L173.53 651.4 L229.45 651.4 L285.36 603.27 L341.28 578.21 L397.19 578.21 L453.11 578.21 L509.02 578.21 L564.94 578.21 L620.85 596.23 L676.77 546.02 L732.68 545.28 L788.6 539.47 L788.6 651.4 Z" fill="#ff780a" fill-opacity="0.05" stroke="none"/><path d="M5.79 651.4 L61.7 651.4 L117.62 651.4 L173.53 651.4 L229.45 651.4 L285.36 603.27 L341.28 578.21 L397.19 578.21 L453.11 578.21 L509.02 578.21 L564.94 578.21 L620.85 596.23 L676.77 546.02 L732.68 545.28 L788.6 539.47" fill="none" stroke="#ff780a" stroke-width="2.4" stroke-linejoin="round" stroke-linecap="round"/><path d="M1.59 651.4a4.2 4.2 0 1 0 8.4 0a4.2 4.2 0 1 0 -8.4 0M57.5 651.4a4.2 4.2 0 1 0 8.4 0a4.2 4.2 0 1 0 -8.4 0M113.42 651.4a4.2 4.2 0 1 0 8.4 0a4.2 4.2 0 1 0 -8.4 0M169.33 651.4a4.2 4.2 0 1 0 8.4 0a4.2 4.2 0 1 0 -8.4 0M225.25 651.4a4.2 4.2 0 1 0 8.4 0a4.2 4.2 0 1 0 -8.4 0M281.16 603.27a4.2 4.2 0 1 0 8.4 0a4.2 4.2 0 1 0 -8.4 0M337.08 578.21a4.2 4.2 0 1 0 8.4 0a4.2 4.2 0 1 0 -8.4 0M392.99 578.21a4.2 4.2 0 1 0 8.4 0a4.2 4.2 0 1 0 -8.4 0M448.91 578.21a4.2 4.2 0 1 0 8.4 0a4.2 4.2 0 1 0 -8.4 0M504.82 578.21a4.2 4.2 0 1 0 8.4 0a4.2 4.2 0 1 0 -8.4 0M560.74 578.21a4.2 4.2 0 1 0 8.4 0a4.2 4.2 0 1 0 -8.4 0M616.65 596.23a4.2 4.2 0 1 0 8.4 0a4.2 4.2 0 1 0 -8.4 0M672.57 546.02a4.2 4.2 0 1 0 8.4 0a4.2 4.2 0 1 0 -8.4 0M728.48 545.28a4.2 4.2 0 1 0 8.4 0a4.2 4.2 0 1 0 -8.4 0M784.4 539.47a4.2 4.2 0 1 0 8.4 0a4.2 4.2 0 1 0 -8.4 0" fill="#ff780a"/></g></g><rect x="22" y="676" width="12" height="4" rx="2" fill="#73bf69"/><text x="40.6" y="680.9" font-size="10.3" fill="#ccccdc" textLength="61" lengthAdjust="spacingAndGlyphs">CLOUD-NINE</text><rect x="110.4" y="676" width="12" height="4" rx="2" fill="#f2cc0c"/><text x="129" y="680.9" font-size="10.3" fill="#ccccdc" textLength="25.1" lengthAdjust="spacingAndGlyphs">Rafiki</text><rect x="162.9" y="676" width="12" height="4" rx="2" fill="#8ab8ff"/><text x="181.5" y="680.9" font-size="10.3" fill="#ccccdc" textLength="59.2" lengthAdjust="spacingAndGlyphs">Rafiki Money</text><rect x="249.5" y="676" width="12" height="4" rx="2" fill="#ff780a"/><text x="268.1" y="680.9" font-size="10.3" fill="#ccccdc" textLength="29.5" lengthAdjust="spacingAndGlyphs">TOTAL</text><rect x="859.5" y="487.5" width="840" height="205" rx="2" fill="#181b1f" stroke="#2e3035" stroke-width="1"/><text x="867" y="504" font-size="11.4" fill="#ccccdc" textLength="156" lengthAdjust="spacingAndGlyphs" stroke="#ccccdc" stroke-width="0.2">Value Sent Through Network</text><circle cx="1043.1" cy="500.3" r="4.9" fill="none" stroke="#6e9fff" stroke-width="1.3"/><path d="M1043.1 497.61V500.3H1040.65" fill="none" stroke="#6e9fff" stroke-width="1.3"/><text x="1052.7" y="503.9" font-size="11.5" fill="#6e9fff" textLength="61.9" lengthAdjust="spacingAndGlyphs">Last 1 week</text><g transform="translate(0,0.5)"><path d="M943.5 651.2H1687.4M943.5 620.1H1687.4M943.5 589H1687.4M943.5 557.9H1687.4M943.5 526.8H1687.4M991.7 526.8V651.7M1097.97 526.8V651.7M1204.24 526.8V651.7M1310.51 526.8V651.7M1416.78 526.8V651.7M1523.05 526.8V651.7M1629.32 526.8V651.7" stroke="#2c2e33" stroke-width="1" fill="none"/><text x="938.7" y="654.7" font-size="9.9" fill="#c7c8d2" text-anchor="end" textLength="33.65" lengthAdjust="spacingAndGlyphs">0.0000</text><text x="938.7" y="623.6" font-size="9.9" fill="#c7c8d2" text-anchor="end" textLength="66.8" lengthAdjust="spacingAndGlyphs">1000000.0000</text><text x="938.7" y="592.5" font-size="9.9" fill="#c7c8d2" text-anchor="end" textLength="69.35" lengthAdjust="spacingAndGlyphs">2000000.0000</text><text x="938.7" y="561.4" font-size="9.9" fill="#c7c8d2" text-anchor="end" textLength="69.35" lengthAdjust="spacingAndGlyphs">3000000.0000</text><text x="938.7" y="530.3" font-size="9.9" fill="#c7c8d2" text-anchor="end" textLength="69.35" lengthAdjust="spacingAndGlyphs">4000000.0000</text></g><text x="991.3" y="666.4" font-size="9.9" fill="#c7c8d2" text-anchor="middle" textLength="58.8" lengthAdjust="spacingAndGlyphs" clip-path="url(#c15)">04/04 00:00</text><text x="1097.57" y="666.4" font-size="9.9" fill="#c7c8d2" text-anchor="middle" textLength="58.8" lengthAdjust="spacingAndGlyphs" clip-path="url(#c15)">04/05 00:00</text><text x="1203.84" y="666.4" font-size="9.9" fill="#c7c8d2" text-anchor="middle" textLength="58.8" lengthAdjust="spacingAndGlyphs" clip-path="url(#c15)">04/06 00:00</text><text x="1310.11" y="666.4" font-size="9.9" fill="#c7c8d2" text-anchor="middle" textLength="58.8" lengthAdjust="spacingAndGlyphs" clip-path="url(#c15)">04/07 00:00</text><text x="1416.38" y="666.4" font-size="9.9" fill="#c7c8d2" text-anchor="middle" textLength="58.8" lengthAdjust="spacingAndGlyphs" clip-path="url(#c15)">04/08 00:00</text><text x="1522.65" y="666.4" font-size="9.9" fill="#c7c8d2" text-anchor="middle" textLength="58.8" lengthAdjust="spacingAndGlyphs" clip-path="url(#c15)">04/09 00:00</text><text x="1628.92" y="666.4" font-size="9.9" fill="#c7c8d2" text-anchor="middle" textLength="56.25" lengthAdjust="spacingAndGlyphs" clip-path="url(#c15)">04/10 00:00</text><g transform="translate(0,0.5)"><g clip-path="url(#c16)"><path d="M894.28 651.2 L894.28 651.2 L947.42 651.2 L1000.55 651.2 L1053.69 651.2 L1106.82 651.2 L1159.96 651.2 L1213.09 651.2 L1266.23 651.2 L1319.36 651.51 L1372.5 650.58 L1425.63 649.96 L1478.77 649.65 L1531.9 572.3 L1585.04 552.4 L1638.17 538.4 L1638.17 651.2 Z" fill="#73bf69" fill-opacity="0.05" stroke="none"/><path d="M894.28 651.2 L947.42 651.2 L1000.55 651.2 L1053.69 651.2 L1106.82 651.2 L1159.96 651.2 L1213.09 651.2 L1266.23 651.2 L1319.36 651.51 L1372.5 650.58 L1425.63 649.96 L1478.77 649.65 L1531.9 572.3 L1585.04 552.4 L1638.17 538.4" fill="none" stroke="#73bf69" stroke-width="2.4" stroke-linejoin="round" stroke-linecap="round"/><path d="M890.08 651.2a4.2 4.2 0 1 0 8.4 0a4.2 4.2 0 1 0 -8.4 0M943.22 651.2a4.2 4.2 0 1 0 8.4 0a4.2 4.2 0 1 0 -8.4 0M996.35 651.2a4.2 4.2 0 1 0 8.4 0a4.2 4.2 0 1 0 -8.4 0M1049.49 651.2a4.2 4.2 0 1 0 8.4 0a4.2 4.2 0 1 0 -8.4 0M1102.62 651.2a4.2 4.2 0 1 0 8.4 0a4.2 4.2 0 1 0 -8.4 0M1155.76 651.2a4.2 4.2 0 1 0 8.4 0a4.2 4.2 0 1 0 -8.4 0M1208.89 651.2a4.2 4.2 0 1 0 8.4 0a4.2 4.2 0 1 0 -8.4 0M1262.03 651.2a4.2 4.2 0 1 0 8.4 0a4.2 4.2 0 1 0 -8.4 0M1315.16 651.51a4.2 4.2 0 1 0 8.4 0a4.2 4.2 0 1 0 -8.4 0M1368.3 650.58a4.2 4.2 0 1 0 8.4 0a4.2 4.2 0 1 0 -8.4 0M1421.43 649.96a4.2 4.2 0 1 0 8.4 0a4.2 4.2 0 1 0 -8.4 0M1474.57 649.65a4.2 4.2 0 1 0 8.4 0a4.2 4.2 0 1 0 -8.4 0M1527.7 572.3a4.2 4.2 0 1 0 8.4 0a4.2 4.2 0 1 0 -8.4 0M1580.84 552.4a4.2 4.2 0 1 0 8.4 0a4.2 4.2 0 1 0 -8.4 0M1633.97 538.4a4.2 4.2 0 1 0 8.4 0a4.2 4.2 0 1 0 -8.4 0" fill="#73bf69"/></g></g><rect x="869" y="676" width="12" height="4" rx="2" fill="#73bf69"/><text x="887.6" y="680.9" font-size="10.3" fill="#ccccdc" textLength="21.3" lengthAdjust="spacingAndGlyphs">Total</text><rect x="1706.5" y="487.5" width="840" height="205" rx="2" fill="#181b1f" stroke="#2e3035" stroke-width="1"/><text x="1714" y="504" font-size="11.4" fill="#ccccdc" textLength="157" lengthAdjust="spacingAndGlyphs" stroke="#ccccdc" stroke-width="0.2">Transaction Average Amount</text><circle cx="1890.1" cy="500.3" r="4.9" fill="none" stroke="#6e9fff" stroke-width="1.3"/><path d="M1890.1 497.61V500.3H1887.65" fill="none" stroke="#6e9fff" stroke-width="1.3"/><text x="1899.7" y="503.9" font-size="11.5" fill="#6e9fff" textLength="61.9" lengthAdjust="spacingAndGlyphs">Last 1 week</text><g transform="translate(0,0.5)"><path d="M1763 651.4H2534M1763 627.28H2534M1763 603.16H2534M1763 579.04H2534M1763 554.92H2534M1763 530.8H2534M1813.4 526.8V651.9M1923.5 526.8V651.9M2033.6 526.8V651.9M2143.7 526.8V651.9M2253.8 526.8V651.9M2363.9 526.8V651.9M2474 526.8V651.9" stroke="#2c2e33" stroke-width="1" fill="none"/><text x="1758.2" y="654.9" font-size="9.9" fill="#c7c8d2" text-anchor="end" textLength="33.65" lengthAdjust="spacingAndGlyphs">0.0000</text><text x="1758.2" y="630.78" font-size="9.9" fill="#c7c8d2" text-anchor="end" textLength="39.6" lengthAdjust="spacingAndGlyphs">20.0000</text><text x="1758.2" y="606.66" font-size="9.9" fill="#c7c8d2" text-anchor="end" textLength="39.6" lengthAdjust="spacingAndGlyphs">40.0000</text><text x="1758.2" y="582.54" font-size="9.9" fill="#c7c8d2" text-anchor="end" textLength="39.6" lengthAdjust="spacingAndGlyphs">60.0000</text><text x="1758.2" y="558.42" font-size="9.9" fill="#c7c8d2" text-anchor="end" textLength="39.6" lengthAdjust="spacingAndGlyphs">80.0000</text><text x="1758.2" y="534.3" font-size="9.9" fill="#c7c8d2" text-anchor="end" textLength="43" lengthAdjust="spacingAndGlyphs">100.0000</text></g><text x="1813" y="666.4" font-size="9.9" fill="#c7c8d2" text-anchor="middle" textLength="58.8" lengthAdjust="spacingAndGlyphs" clip-path="url(#c17)">04/04 00:00</text><text x="1923.1" y="666.4" font-size="9.9" fill="#c7c8d2" text-anchor="middle" textLength="58.8" lengthAdjust="spacingAndGlyphs" clip-path="url(#c17)">04/05 00:00</text><text x="2033.2" y="666.4" font-size="9.9" fill="#c7c8d2" text-anchor="middle" textLength="58.8" lengthAdjust="spacingAndGlyphs" clip-path="url(#c17)">04/06 00:00</text><text x="2143.3" y="666.4" font-size="9.9" fill="#c7c8d2" text-anchor="middle" textLength="58.8" lengthAdjust="spacingAndGlyphs" clip-path="url(#c17)">04/07 00:00</text><text x="2253.4" y="666.4" font-size="9.9" fill="#c7c8d2" text-anchor="middle" textLength="58.8" lengthAdjust="spacingAndGlyphs" clip-path="url(#c17)">04/08 00:00</text><text x="2363.5" y="666.4" font-size="9.9" fill="#c7c8d2" text-anchor="middle" textLength="58.8" lengthAdjust="spacingAndGlyphs" clip-path="url(#c17)">04/09 00:00</text><text x="2473.6" y="666.4" font-size="9.9" fill="#c7c8d2" text-anchor="middle" textLength="56.25" lengthAdjust="spacingAndGlyphs" clip-path="url(#c17)">04/10 00:00</text><g transform="translate(0,0.5)"><g clip-path="url(#c18)"><path d="M1712.47 651.4 L1712.47 585.07 L1767.52 649.95 L1822.57 630.29 L1877.62 651.4 L1932.67 539.24 L1987.72 651.4 L2042.77 651.4 L2097.82 651.4 L2152.87 652 L2207.92 650.8 L2262.97 649.59 L2318.02 647.78 L2373.07 569.03 L2428.12 550.22 L2483.17 542.38 L2483.17 651.4 Z" fill="#73bf69" fill-opacity="0.05" stroke="none"/><path d="M1712.47 585.07 L1767.52 649.95 L1822.57 630.29 L1877.62 651.4 L1932.67 539.24 L1987.72 651.4 L2042.77 651.4 L2097.82 651.4 L2152.87 652 L2207.92 650.8 L2262.97 649.59 L2318.02 647.78 L2373.07 569.03 L2428.12 550.22 L2483.17 542.38" fill="none" stroke="#73bf69" stroke-width="2.4" stroke-linejoin="round" stroke-linecap="round"/><path d="M1708.27 585.07a4.2 4.2 0 1 0 8.4 0a4.2 4.2 0 1 0 -8.4 0M1763.32 649.95a4.2 4.2 0 1 0 8.4 0a4.2 4.2 0 1 0 -8.4 0M1818.37 630.29a4.2 4.2 0 1 0 8.4 0a4.2 4.2 0 1 0 -8.4 0M1873.42 651.4a4.2 4.2 0 1 0 8.4 0a4.2 4.2 0 1 0 -8.4 0M1928.47 539.24a4.2 4.2 0 1 0 8.4 0a4.2 4.2 0 1 0 -8.4 0M1983.52 651.4a4.2 4.2 0 1 0 8.4 0a4.2 4.2 0 1 0 -8.4 0M2038.57 651.4a4.2 4.2 0 1 0 8.4 0a4.2 4.2 0 1 0 -8.4 0M2093.62 651.4a4.2 4.2 0 1 0 8.4 0a4.2 4.2 0 1 0 -8.4 0M2148.67 652a4.2 4.2 0 1 0 8.4 0a4.2 4.2 0 1 0 -8.4 0M2203.72 650.8a4.2 4.2 0 1 0 8.4 0a4.2 4.2 0 1 0 -8.4 0M2258.77 649.59a4.2 4.2 0 1 0 8.4 0a4.2 4.2 0 1 0 -8.4 0M2313.82 647.78a4.2 4.2 0 1 0 8.4 0a4.2 4.2 0 1 0 -8.4 0M2368.87 569.03a4.2 4.2 0 1 0 8.4 0a4.2 4.2 0 1 0 -8.4 0M2423.92 550.22a4.2 4.2 0 1 0 8.4 0a4.2 4.2 0 1 0 -8.4 0M2478.97 542.38a4.2 4.2 0 1 0 8.4 0a4.2 4.2 0 1 0 -8.4 0" fill="#73bf69"/></g></g><rect x="1716" y="676" width="12" height="4" rx="2" fill="#73bf69"/><text x="1734.6" y="680.9" font-size="10.3" fill="#ccccdc" textLength="450.9" lengthAdjust="spacingAndGlyphs">sum (increase(transactions_amount_total[12h])) / sum (increase(transactions_total[12h])) * 0.0001</text><rect x="12.5" y="700.5" width="840" height="205" rx="2" fill="#181b1f" stroke="#2e3035" stroke-width="1"/><text x="20" y="716.5" font-size="11.4" fill="#ccccdc" textLength="163.4" lengthAdjust="spacingAndGlyphs" stroke="#ccccdc" stroke-width="0.2">Transaction Count (by source)</text><circle cx="204.4" cy="712.8" r="4.9" fill="none" stroke="#6e9fff" stroke-width="1.3"/><path d="M204.4 710.1V712.8H201.95" fill="none" stroke="#6e9fff" stroke-width="1.3"/><text x="214" y="716.4" font-size="11.5" fill="#6e9fff" textLength="68" lengthAdjust="spacingAndGlyphs">Last 1 month</text><g transform="translate(0,0.7)"><path d="M57.6 864.3H840.3M57.6 837.02H840.3M57.6 809.75H840.3M57.6 782.47H840.3M57.6 755.2H840.3M69.2 739.9V864.8M119.7 739.9V864.8M170.2 739.9V864.8M220.7 739.9V864.8M271.2 739.9V864.8M321.7 739.9V864.8M372.2 739.9V864.8M422.7 739.9V864.8M473.2 739.9V864.8M523.7 739.9V864.8M574.2 739.9V864.8M624.7 739.9V864.8M675.2 739.9V864.8M725.7 739.9V864.8M776.2 739.9V864.8M826.7 739.9V864.8" stroke="#2c2e33" stroke-width="1" fill="none"/><text x="52.8" y="867.8" font-size="9.9" fill="#c7c8d2" text-anchor="end" textLength="5.95" lengthAdjust="spacingAndGlyphs">0</text><text x="52.8" y="840.52" font-size="9.9" fill="#c7c8d2" text-anchor="end" textLength="27.2" lengthAdjust="spacingAndGlyphs">10000</text><text x="52.8" y="813.25" font-size="9.9" fill="#c7c8d2" text-anchor="end" textLength="29.75" lengthAdjust="spacingAndGlyphs">20000</text><text x="52.8" y="785.97" font-size="9.9" fill="#c7c8d2" text-anchor="end" textLength="29.75" lengthAdjust="spacingAndGlyphs">30000</text><text x="52.8" y="758.7" font-size="9.9" fill="#c7c8d2" text-anchor="end" textLength="29.75" lengthAdjust="spacingAndGlyphs">40000</text></g><text x="68.8" y="879.06" font-size="9.9" fill="#c7c8d2" text-anchor="middle" textLength="23.2" lengthAdjust="spacingAndGlyphs" clip-path="url(#c19)">03/11</text><text x="119.3" y="879.06" font-size="9.9" fill="#c7c8d2" text-anchor="middle" textLength="25.75" lengthAdjust="spacingAndGlyphs" clip-path="url(#c19)">03/13</text><text x="169.8" y="879.06" font-size="9.9" fill="#c7c8d2" text-anchor="middle" textLength="25.75" lengthAdjust="spacingAndGlyphs" clip-path="url(#c19)">03/15</text><text x="220.3" y="879.06" font-size="9.9" fill="#c7c8d2" text-anchor="middle" textLength="25.75" lengthAdjust="spacingAndGlyphs" clip-path="url(#c19)">03/17</text><text x="270.8" y="879.06" font-size="9.9" fill="#c7c8d2" text-anchor="middle" textLength="25.75" lengthAdjust="spacingAndGlyphs" clip-path="url(#c19)">03/19</text><text x="321.3" y="879.06" font-size="9.9" fill="#c7c8d2" text-anchor="middle" textLength="25.75" lengthAdjust="spacingAndGlyphs" clip-path="url(#c19)">03/21</text><text x="371.8" y="879.06" font-size="9.9" fill="#c7c8d2" text-anchor="middle" textLength="28.3" lengthAdjust="spacingAndGlyphs" clip-path="url(#c19)">03/23</text><text x="422.3" y="879.06" font-size="9.9" fill="#c7c8d2" text-anchor="middle" textLength="28.3" lengthAdjust="spacingAndGlyphs" clip-path="url(#c19)">03/25</text><text x="472.8" y="879.06" font-size="9.9" fill="#c7c8d2" text-anchor="middle" textLength="28.3" lengthAdjust="spacingAndGlyphs" clip-path="url(#c19)">03/27</text><text x="523.3" y="879.06" font-size="9.9" fill="#c7c8d2" text-anchor="middle" textLength="28.3" lengthAdjust="spacingAndGlyphs" clip-path="url(#c19)">03/29</text><text x="573.8" y="879.06" font-size="9.9" fill="#c7c8d2" text-anchor="middle" textLength="25.75" lengthAdjust="spacingAndGlyphs" clip-path="url(#c19)">03/31</text><text x="624.3" y="879.06" font-size="9.9" fill="#c7c8d2" text-anchor="middle" textLength="28.3" lengthAdjust="spacingAndGlyphs" clip-path="url(#c19)">04/02</text><text x="674.8" y="879.06" font-size="9.9" fill="#c7c8d2" text-anchor="middle" textLength="28.3" lengthAdjust="spacingAndGlyphs" clip-path="url(#c19)">04/04</text><text x="725.3" y="879.06" font-size="9.9" fill="#c7c8d2" text-anchor="middle" textLength="28.3" lengthAdjust="spacingAndGlyphs" clip-path="url(#c19)">04/06</text><text x="775.8" y="879.06" font-size="9.9" fill="#c7c8d2" text-anchor="middle" textLength="28.3" lengthAdjust="spacingAndGlyphs" clip-path="url(#c19)">04/08</text><text x="826.3" y="879.06" font-size="9.9" fill="#c7c8d2" text-anchor="middle" textLength="25.75" lengthAdjust="spacingAndGlyphs" clip-path="url(#c19)">04/10</text><g transform="translate(0,0.7)"><g clip-path="url(#c20)"><path d="M386.93 864.3 L386.93 864.3 L386.93 864.3 Z" fill="#73bf69" fill-opacity="0.05" stroke="none"/><path d="M386.93 864.3" fill="none" stroke="#73bf69" stroke-width="2.4" stroke-linejoin="round" stroke-linecap="round"/><path d="M382.93 864.3a4 4 0 1 0 8 0a4 4 0 1 0 -8 0" fill="#73bf69"/></g><g clip-path="url(#c20)"><path d="M58.68 864.3 L58.68 864.3 L71.3 864.3 L83.93 864.3 L96.55 864.3 L109.18 864.3 L121.8 864.3 L134.43 864.3 L147.05 864.3 L159.68 864.3 L172.3 864.3 L184.93 864.3 L197.55 864.3 L210.18 864.3 L222.8 864.3 L235.43 864.3 L248.05 864.3 L260.68 864.3 L273.3 864.3 L285.93 864.3 L298.55 864.3 L311.18 864.3 L323.8 864.3 L336.43 864.3 L349.05 864.3 L361.68 864.3 L374.3 864.3 L386.93 864.3 L399.55 864.3 L412.18 864.3 L424.8 864.3 L437.43 864.3 L450.05 864.3 L462.68 864.3 L475.3 864.3 L487.93 864.3 L500.55 864.3 L513.18 864.3 L525.8 864.3 L538.43 864.3 L551.05 864.3 L563.68 864.3 L576.3 864.3 L588.93 864.3 L601.55 864.3 L614.18 864.3 L626.8 864.3 L639.43 864.3 L652.05 864.3 L664.68 864.3 L677.3 864.3 L689.93 864.3 L702.55 864.3 L715.18 834.57 L727.8 794.2 L740.43 794.2 L753.05 794.2 L765.68 794.2 L778.3 794.2 L790.93 811.93 L803.55 762.84 L816.18 762.84 L828.8 757.11 L828.8 864.3 Z" fill="#f2cc0c" fill-opacity="0.05" stroke="none"/><path d="M58.68 864.3 L71.3 864.3 L83.93 864.3 L96.55 864.3 L109.18 864.3 L121.8 864.3 L134.43 864.3 L147.05 864.3 L159.68 864.3 L172.3 864.3 L184.93 864.3 L197.55 864.3 L210.18 864.3 L222.8 864.3 L235.43 864.3 L248.05 864.3 L260.68 864.3 L273.3 864.3 L285.93 864.3 L298.55 864.3 L311.18 864.3 L323.8 864.3 L336.43 864.3 L349.05 864.3 L361.68 864.3 L374.3 864.3 L386.93 864.3 L399.55 864.3 L412.18 864.3 L424.8 864.3 L437.43 864.3 L450.05 864.3 L462.68 864.3 L475.3 864.3 L487.93 864.3 L500.55 864.3 L513.18 864.3 L525.8 864.3 L538.43 864.3 L551.05 864.3 L563.68 864.3 L576.3 864.3 L588.93 864.3 L601.55 864.3 L614.18 864.3 L626.8 864.3 L639.43 864.3 L652.05 864.3 L664.68 864.3 L677.3 864.3 L689.93 864.3 L702.55 864.3 L715.18 834.57 L727.8 794.2 L740.43 794.2 L753.05 794.2 L765.68 794.2 L778.3 794.2 L790.93 811.93 L803.55 762.84 L816.18 762.84 L828.8 757.11" fill="none" stroke="#f2cc0c" stroke-width="2.4" stroke-linejoin="round" stroke-linecap="round"/><path d="M54.68 864.3a4 4 0 1 0 8 0a4 4 0 1 0 -8 0M67.3 864.3a4 4 0 1 0 8 0a4 4 0 1 0 -8 0M79.93 864.3a4 4 0 1 0 8 0a4 4 0 1 0 -8 0M92.55 864.3a4 4 0 1 0 8 0a4 4 0 1 0 -8 0M105.18 864.3a4 4 0 1 0 8 0a4 4 0 1 0 -8 0M117.8 864.3a4 4 0 1 0 8 0a4 4 0 1 0 -8 0M130.43 864.3a4 4 0 1 0 8 0a4 4 0 1 0 -8 0M143.05 864.3a4 4 0 1 0 8 0a4 4 0 1 0 -8 0M155.68 864.3a4 4 0 1 0 8 0a4 4 0 1 0 -8 0M168.3 864.3a4 4 0 1 0 8 0a4 4 0 1 0 -8 0M180.93 864.3a4 4 0 1 0 8 0a4 4 0 1 0 -8 0M193.55 864.3a4 4 0 1 0 8 0a4 4 0 1 0 -8 0M206.18 864.3a4 4 0 1 0 8 0a4 4 0 1 0 -8 0M218.8 864.3a4 4 0 1 0 8 0a4 4 0 1 0 -8 0M231.43 864.3a4 4 0 1 0 8 0a4 4 0 1 0 -8 0M244.05 864.3a4 4 0 1 0 8 0a4 4 0 1 0 -8 0M256.68 864.3a4 4 0 1 0 8 0a4 4 0 1 0 -8 0M269.3 864.3a4 4 0 1 0 8 0a4 4 0 1 0 -8 0M281.93 864.3a4 4 0 1 0 8 0a4 4 0 1 0 -8 0M294.55 864.3a4 4 0 1 0 8 0a4 4 0 1 0 -8 0M307.18 864.3a4 4 0 1 0 8 0a4 4 0 1 0 -8 0M319.8 864.3a4 4 0 1 0 8 0a4 4 0 1 0 -8 0M332.43 864.3a4 4 0 1 0 8 0a4 4 0 1 0 -8 0M345.05 864.3a4 4 0 1 0 8 0a4 4 0 1 0 -8 0M357.68 864.3a4 4 0 1 0 8 0a4 4 0 1 0 -8 0M370.3 864.3a4 4 0 1 0 8 0a4 4 0 1 0 -8 0M382.93 864.3a4 4 0 1 0 8 0a4 4 0 1 0 -8 0M395.55 864.3a4 4 0 1 0 8 0a4 4 0 1 0 -8 0M408.18 864.3a4 4 0 1 0 8 0a4 4 0 1 0 -8 0M420.8 864.3a4 4 0 1 0 8 0a4 4 0 1 0 -8 0M433.43 864.3a4 4 0 1 0 8 0a4 4 0 1 0 -8 0M446.05 864.3a4 4 0 1 0 8 0a4 4 0 1 0 -8 0M458.68 864.3a4 4 0 1 0 8 0a4 4 0 1 0 -8 0M471.3 864.3a4 4 0 1 0 8 0a4 4 0 1 0 -8 0M483.93 864.3a4 4 0 1 0 8 0a4 4 0 1 0 -8 0M496.55 864.3a4 4 0 1 0 8 0a4 4 0 1 0 -8 0M509.18 864.3a4 4 0 1 0 8 0a4 4 0 1 0 -8 0M521.8 864.3a4 4 0 1 0 8 0a4 4 0 1 0 -8 0M534.43 864.3a4 4 0 1 0 8 0a4 4 0 1 0 -8 0M547.05 864.3a4 4 0 1 0 8 0a4 4 0 1 0 -8 0M559.68 864.3a4 4 0 1 0 8 0a4 4 0 1 0 -8 0M572.3 864.3a4 4 0 1 0 8 0a4 4 0 1 0 -8 0M584.93 864.3a4 4 0 1 0 8 0a4 4 0 1 0 -8 0M597.55 864.3a4 4 0 1 0 8 0a4 4 0 1 0 -8 0M610.18 864.3a4 4 0 1 0 8 0a4 4 0 1 0 -8 0M622.8 864.3a4 4 0 1 0 8 0a4 4 0 1 0 -8 0M635.43 864.3a4 4 0 1 0 8 0a4 4 0 1 0 -8 0M648.05 864.3a4 4 0 1 0 8 0a4 4 0 1 0 -8 0M660.68 864.3a4 4 0 1 0 8 0a4 4 0 1 0 -8 0M673.3 864.3a4 4 0 1 0 8 0a4 4 0 1 0 -8 0M685.93 864.3a4 4 0 1 0 8 0a4 4 0 1 0 -8 0M698.55 864.3a4 4 0 1 0 8 0a4 4 0 1 0 -8 0M711.18 834.57a4 4 0 1 0 8 0a4 4 0 1 0 -8 0M723.8 794.2a4 4 0 1 0 8 0a4 4 0 1 0 -8 0M736.43 794.2a4 4 0 1 0 8 0a4 4 0 1 0 -8 0M749.05 794.2a4 4 0 1 0 8 0a4 4 0 1 0 -8 0M761.68 794.2a4 4 0 1 0 8 0a4 4 0 1 0 -8 0M774.3 794.2a4 4 0 1 0 8 0a4 4 0 1 0 -8 0M786.93 811.93a4 4 0 1 0 8 0a4 4 0 1 0 -8 0M799.55 762.84a4 4 0 1 0 8 0a4 4 0 1 0 -8 0M812.18 762.84a4 4 0 1 0 8 0a4 4 0 1 0 -8 0M824.8 757.11a4 4 0 1 0 8 0a4 4 0 1 0 -8 0" fill="#f2cc0c"/></g><g clip-path="url(#c20)"><path d="M58.68 864.3 L58.68 864.3 L71.3 864.3 L83.93 864.3 L96.55 864.3 L109.18 857.75 L121.8 859.39 L134.43 864.3 L147.05 864.3 L159.68 864.3 L172.3 864.3 L184.93 864.3 L197.55 864.3 L210.18 864.3 L222.8 864.3 L235.43 864.3 L248.05 864.3 L260.68 864.3 L273.3 864.3 L285.93 853.12 L298.55 855.41 L311.18 864.3 L323.8 864.3 L336.43 864.3 L349.05 864.3 L361.68 864.3 L374.3 864.3 L386.93 855.9 L399.55 864.3 L412.18 864.3 L424.8 751.38 L437.43 864.3 L450.05 851.92 L462.68 836.83 L475.3 846.22 L487.93 864.3 L500.55 799.85 L513.18 814.25 L525.8 781.11 L538.43 860.89 L551.05 864.3 L563.68 864.3 L576.3 864.3 L588.93 864.3 L601.55 864.3 L614.18 864.3 L626.8 864.3 L639.43 864.3 L652.05 864.3 L664.68 864.3 L677.3 864.3 L689.93 864.3 L702.55 864.3 L715.18 849.03 L727.8 865.12 L740.43 865.12 L753.05 865.12 L765.68 865.12 L778.3 863.48 L790.93 863.48 L803.55 863.48 L816.18 863.48 L828.8 865.12 L828.8 864.3 Z" fill="#8ab8ff" fill-opacity="0.05" stroke="none"/><path d="M58.68 864.3 L71.3 864.3 L83.93 864.3 L96.55 864.3 L109.18 857.75 L121.8 859.39 L134.43 864.3 L147.05 864.3 L159.68 864.3 L172.3 864.3 L184.93 864.3 L197.55 864.3 L210.18 864.3 L222.8 864.3 L235.43 864.3 L248.05 864.3 L260.68 864.3 L273.3 864.3 L285.93 853.12 L298.55 855.41 L311.18 864.3 L323.8 864.3 L336.43 864.3 L349.05 864.3 L361.68 864.3 L374.3 864.3 L386.93 855.9 L399.55 864.3 L412.18 864.3 L424.8 751.38 L437.43 864.3 L450.05 851.92 L462.68 836.83 L475.3 846.22 L487.93 864.3 L500.55 799.85 L513.18 814.25 L525.8 781.11 L538.43 860.89 L551.05 864.3 L563.68 864.3 L576.3 864.3 L588.93 864.3 L601.55 864.3 L614.18 864.3 L626.8 864.3 L639.43 864.3 L652.05 864.3 L664.68 864.3 L677.3 864.3 L689.93 864.3 L702.55 864.3 L715.18 849.03 L727.8 865.12 L740.43 865.12 L753.05 865.12 L765.68 865.12 L778.3 863.48 L790.93 863.48 L803.55 863.48 L816.18 863.48 L828.8 865.12" fill="none" stroke="#8ab8ff" stroke-width="2.4" stroke-linejoin="round" stroke-linecap="round"/><path d="M54.68 864.3a4 4 0 1 0 8 0a4 4 0 1 0 -8 0M67.3 864.3a4 4 0 1 0 8 0a4 4 0 1 0 -8 0M79.93 864.3a4 4 0 1 0 8 0a4 4 0 1 0 -8 0M92.55 864.3a4 4 0 1 0 8 0a4 4 0 1 0 -8 0M105.18 857.75a4 4 0 1 0 8 0a4 4 0 1 0 -8 0M117.8 859.39a4 4 0 1 0 8 0a4 4 0 1 0 -8 0M130.43 864.3a4 4 0 1 0 8 0a4 4 0 1 0 -8 0M143.05 864.3a4 4 0 1 0 8 0a4 4 0 1 0 -8 0M155.68 864.3a4 4 0 1 0 8 0a4 4 0 1 0 -8 0M168.3 864.3a4 4 0 1 0 8 0a4 4 0 1 0 -8 0M180.93 864.3a4 4 0 1 0 8 0a4 4 0 1 0 -8 0M193.55 864.3a4 4 0 1 0 8 0a4 4 0 1 0 -8 0M206.18 864.3a4 4 0 1 0 8 0a4 4 0 1 0 -8 0M218.8 864.3a4 4 0 1 0 8 0a4 4 0 1 0 -8 0M231.43 864.3a4 4 0 1 0 8 0a4 4 0 1 0 -8 0M244.05 864.3a4 4 0 1 0 8 0a4 4 0 1 0 -8 0M256.68 864.3a4 4 0 1 0 8 0a4 4 0 1 0 -8 0M269.3 864.3a4 4 0 1 0 8 0a4 4 0 1 0 -8 0M281.93 853.12a4 4 0 1 0 8 0a4 4 0 1 0 -8 0M294.55 855.41a4 4 0 1 0 8 0a4 4 0 1 0 -8 0M307.18 864.3a4 4 0 1 0 8 0a4 4 0 1 0 -8 0M319.8 864.3a4 4 0 1 0 8 0a4 4 0 1 0 -8 0M332.43 864.3a4 4 0 1 0 8 0a4 4 0 1 0 -8 0M345.05 864.3a4 4 0 1 0 8 0a4 4 0 1 0 -8 0M357.68 864.3a4 4 0 1 0 8 0a4 4 0 1 0 -8 0M370.3 864.3a4 4 0 1 0 8 0a4 4 0 1 0 -8 0M382.93 855.9a4 4 0 1 0 8 0a4 4 0 1 0 -8 0M395.55 864.3a4 4 0 1 0 8 0a4 4 0 1 0 -8 0M408.18 864.3a4 4 0 1 0 8 0a4 4 0 1 0 -8 0M420.8 751.38a4 4 0 1 0 8 0a4 4 0 1 0 -8 0M433.43 864.3a4 4 0 1 0 8 0a4 4 0 1 0 -8 0M446.05 851.92a4 4 0 1 0 8 0a4 4 0 1 0 -8 0M458.68 836.83a4 4 0 1 0 8 0a4 4 0 1 0 -8 0M471.3 846.22a4 4 0 1 0 8 0a4 4 0 1 0 -8 0M483.93 864.3a4 4 0 1 0 8 0a4 4 0 1 0 -8 0M496.55 799.85a4 4 0 1 0 8 0a4 4 0 1 0 -8 0M509.18 814.25a4 4 0 1 0 8 0a4 4 0 1 0 -8 0M521.8 781.11a4 4 0 1 0 8 0a4 4 0 1 0 -8 0M534.43 860.89a4 4 0 1 0 8 0a4 4 0 1 0 -8 0M547.05 864.3a4 4 0 1 0 8 0a4 4 0 1 0 -8 0M559.68 864.3a4 4 0 1 0 8 0a4 4 0 1 0 -8 0M572.3 864.3a4 4 0 1 0 8 0a4 4 0 1 0 -8 0M584.93 864.3a4 4 0 1 0 8 0a4 4 0 1 0 -8 0M597.55 864.3a4 4 0 1 0 8 0a4 4 0 1 0 -8 0M610.18 864.3a4 4 0 1 0 8 0a4 4 0 1 0 -8 0M622.8 864.3a4 4 0 1 0 8 0a4 4 0 1 0 -8 0M635.43 864.3a4 4 0 1 0 8 0a4 4 0 1 0 -8 0M648.05 864.3a4 4 0 1 0 8 0a4 4 0 1 0 -8 0M660.68 864.3a4 4 0 1 0 8 0a4 4 0 1 0 -8 0M673.3 864.3a4 4 0 1 0 8 0a4 4 0 1 0 -8 0M685.93 864.3a4 4 0 1 0 8 0a4 4 0 1 0 -8 0M698.55 864.3a4 4 0 1 0 8 0a4 4 0 1 0 -8 0M711.18 849.03a4 4 0 1 0 8 0a4 4 0 1 0 -8 0M723.8 865.12a4 4 0 1 0 8 0a4 4 0 1 0 -8 0M736.43 865.12a4 4 0 1 0 8 0a4 4 0 1 0 -8 0M749.05 865.12a4 4 0 1 0 8 0a4 4 0 1 0 -8 0M761.68 865.12a4 4 0 1 0 8 0a4 4 0 1 0 -8 0M774.3 863.48a4 4 0 1 0 8 0a4 4 0 1 0 -8 0M786.93 863.48a4 4 0 1 0 8 0a4 4 0 1 0 -8 0M799.55 863.48a4 4 0 1 0 8 0a4 4 0 1 0 -8 0M812.18 863.48a4 4 0 1 0 8 0a4 4 0 1 0 -8 0M824.8 865.12a4 4 0 1 0 8 0a4 4 0 1 0 -8 0" fill="#8ab8ff"/></g><g clip-path="url(#c20)"><path d="M58.68 864.3 L58.68 864.3 L71.3 864.3 L83.93 864.3 L96.55 864.3 L109.18 857.75 L121.8 859.39 L134.43 864.3 L147.05 864.3 L159.68 864.3 L172.3 864.3 L184.93 864.3 L197.55 864.3 L210.18 864.3 L222.8 864.3 L235.43 864.3 L248.05 864.3 L260.68 864.3 L273.3 864.3 L285.93 853.12 L298.55 855.41 L311.18 864.3 L323.8 864.3 L336.43 864.3 L349.05 864.3 L361.68 864.3 L374.3 864.3 L386.93 855.9 L399.55 864.3 L412.18 864.3 L424.8 751.38 L437.43 864.3 L450.05 851.92 L462.68 836.83 L475.3 846.22 L487.93 864.3 L500.55 799.85 L513.18 814.25 L525.8 781.11 L538.43 860.89 L551.05 864.3 L563.68 864.3 L576.3 864.3 L588.93 864.3 L601.55 864.3 L614.18 864.3 L626.8 864.3 L639.43 864.3 L652.05 864.3 L664.68 864.3 L677.3 864.3 L689.93 864.3 L702.55 864.3 L715.18 817.66 L727.8 794.2 L740.43 794.2 L753.05 794.2 L765.68 794.2 L778.3 794.2 L790.93 811.93 L803.55 762.84 L816.18 762.84 L828.8 757.11 L828.8 864.3 Z" fill="#ff780a" fill-opacity="0.05" stroke="none"/><path d="M58.68 864.3 L71.3 864.3 L83.93 864.3 L96.55 864.3 L109.18 857.75 L121.8 859.39 L134.43 864.3 L147.05 864.3 L159.68 864.3 L172.3 864.3 L184.93 864.3 L197.55 864.3 L210.18 864.3 L222.8 864.3 L235.43 864.3 L248.05 864.3 L260.68 864.3 L273.3 864.3 L285.93 853.12 L298.55 855.41 L311.18 864.3 L323.8 864.3 L336.43 864.3 L349.05 864.3 L361.68 864.3 L374.3 864.3 L386.93 855.9 L399.55 864.3 L412.18 864.3 L424.8 751.38 L437.43 864.3 L450.05 851.92 L462.68 836.83 L475.3 846.22 L487.93 864.3 L500.55 799.85 L513.18 814.25 L525.8 781.11 L538.43 860.89 L551.05 864.3 L563.68 864.3 L576.3 864.3 L588.93 864.3 L601.55 864.3 L614.18 864.3 L626.8 864.3 L639.43 864.3 L652.05 864.3 L664.68 864.3 L677.3 864.3 L689.93 864.3 L702.55 864.3 L715.18 817.66 L727.8 794.2 L740.43 794.2 L753.05 794.2 L765.68 794.2 L778.3 794.2 L790.93 811.93 L803.55 762.84 L816.18 762.84 L828.8 757.11" fill="none" stroke="#ff780a" stroke-width="2.4" stroke-linejoin="round" stroke-linecap="round"/><path d="M54.68 864.3a4 4 0 1 0 8 0a4 4 0 1 0 -8 0M67.3 864.3a4 4 0 1 0 8 0a4 4 0 1 0 -8 0M79.93 864.3a4 4 0 1 0 8 0a4 4 0 1 0 -8 0M92.55 864.3a4 4 0 1 0 8 0a4 4 0 1 0 -8 0M105.18 857.75a4 4 0 1 0 8 0a4 4 0 1 0 -8 0M117.8 859.39a4 4 0 1 0 8 0a4 4 0 1 0 -8 0M130.43 864.3a4 4 0 1 0 8 0a4 4 0 1 0 -8 0M143.05 864.3a4 4 0 1 0 8 0a4 4 0 1 0 -8 0M155.68 864.3a4 4 0 1 0 8 0a4 4 0 1 0 -8 0M168.3 864.3a4 4 0 1 0 8 0a4 4 0 1 0 -8 0M180.93 864.3a4 4 0 1 0 8 0a4 4 0 1 0 -8 0M193.55 864.3a4 4 0 1 0 8 0a4 4 0 1 0 -8 0M206.18 864.3a4 4 0 1 0 8 0a4 4 0 1 0 -8 0M218.8 864.3a4 4 0 1 0 8 0a4 4 0 1 0 -8 0M231.43 864.3a4 4 0 1 0 8 0a4 4 0 1 0 -8 0M244.05 864.3a4 4 0 1 0 8 0a4 4 0 1 0 -8 0M256.68 864.3a4 4 0 1 0 8 0a4 4 0 1 0 -8 0M269.3 864.3a4 4 0 1 0 8 0a4 4 0 1 0 -8 0M281.93 853.12a4 4 0 1 0 8 0a4 4 0 1 0 -8 0M294.55 855.41a4 4 0 1 0 8 0a4 4 0 1 0 -8 0M307.18 864.3a4 4 0 1 0 8 0a4 4 0 1 0 -8 0M319.8 864.3a4 4 0 1 0 8 0a4 4 0 1 0 -8 0M332.43 864.3a4 4 0 1 0 8 0a4 4 0 1 0 -8 0M345.05 864.3a4 4 0 1 0 8 0a4 4 0 1 0 -8 0M357.68 864.3a4 4 0 1 0 8 0a4 4 0 1 0 -8 0M370.3 864.3a4 4 0 1 0 8 0a4 4 0 1 0 -8 0M382.93 855.9a4 4 0 1 0 8 0a4 4 0 1 0 -8 0M395.55 864.3a4 4 0 1 0 8 0a4 4 0 1 0 -8 0M408.18 864.3a4 4 0 1 0 8 0a4 4 0 1 0 -8 0M420.8 751.38a4 4 0 1 0 8 0a4 4 0 1 0 -8 0M433.43 864.3a4 4 0 1 0 8 0a4 4 0 1 0 -8 0M446.05 851.92a4 4 0 1 0 8 0a4 4 0 1 0 -8 0M458.68 836.83a4 4 0 1 0 8 0a4 4 0 1 0 -8 0M471.3 846.22a4 4 0 1 0 8 0a4 4 0 1 0 -8 0M483.93 864.3a4 4 0 1 0 8 0a4 4 0 1 0 -8 0M496.55 799.85a4 4 0 1 0 8 0a4 4 0 1 0 -8 0M509.18 814.25a4 4 0 1 0 8 0a4 4 0 1 0 -8 0M521.8 781.11a4 4 0 1 0 8 0a4 4 0 1 0 -8 0M534.43 860.89a4 4 0 1 0 8 0a4 4 0 1 0 -8 0M547.05 864.3a4 4 0 1 0 8 0a4 4 0 1 0 -8 0M559.68 864.3a4 4 0 1 0 8 0a4 4 0 1 0 -8 0M572.3 864.3a4 4 0 1 0 8 0a4 4 0 1 0 -8 0M584.93 864.3a4 4 0 1 0 8 0a4 4 0 1 0 -8 0M597.55 864.3a4 4 0 1 0 8 0a4 4 0 1 0 -8 0M610.18 864.3a4 4 0 1 0 8 0a4 4 0 1 0 -8 0M622.8 864.3a4 4 0 1 0 8 0a4 4 0 1 0 -8 0M635.43 864.3a4 4 0 1 0 8 0a4 4 0 1 0 -8 0M648.05 864.3a4 4 0 1 0 8 0a4 4 0 1 0 -8 0M660.68 864.3a4 4 0 1 0 8 0a4 4 0 1 0 -8 0M673.3 864.3a4 4 0 1 0 8 0a4 4 0 1 0 -8 0M685.93 864.3a4 4 0 1 0 8 0a4 4 0 1 0 -8 0M698.55 864.3a4 4 0 1 0 8 0a4 4 0 1 0 -8 0M711.18 817.66a4 4 0 1 0 8 0a4 4 0 1 0 -8 0M723.8 794.2a4 4 0 1 0 8 0a4 4 0 1 0 -8 0M736.43 794.2a4 4 0 1 0 8 0a4 4 0 1 0 -8 0M749.05 794.2a4 4 0 1 0 8 0a4 4 0 1 0 -8 0M761.68 794.2a4 4 0 1 0 8 0a4 4 0 1 0 -8 0M774.3 794.2a4 4 0 1 0 8 0a4 4 0 1 0 -8 0M786.93 811.93a4 4 0 1 0 8 0a4 4 0 1 0 -8 0M799.55 762.84a4 4 0 1 0 8 0a4 4 0 1 0 -8 0M812.18 762.84a4 4 0 1 0 8 0a4 4 0 1 0 -8 0M824.8 757.11a4 4 0 1 0 8 0a4 4 0 1 0 -8 0" fill="#ff780a"/></g></g><rect x="22" y="888.5" width="12" height="4" rx="2" fill="#73bf69"/><text x="40.6" y="893.4" font-size="10.3" fill="#ccccdc" textLength="61" lengthAdjust="spacingAndGlyphs">CLOUD-NINE</text><rect x="110.4" y="888.5" width="12" height="4" rx="2" fill="#f2cc0c"/><text x="129" y="893.4" font-size="10.3" fill="#ccccdc" textLength="25.1" lengthAdjust="spacingAndGlyphs">Rafiki</text><rect x="162.9" y="888.5" width="12" height="4" rx="2" fill="#8ab8ff"/><text x="181.5" y="893.4" font-size="10.3" fill="#ccccdc" textLength="59.2" lengthAdjust="spacingAndGlyphs">Rafiki Money</text><rect x="249.5" y="888.5" width="12" height="4" rx="2" fill="#ff780a"/><text x="268.1" y="893.4" font-size="10.3" fill="#ccccdc" textLength="29.5" lengthAdjust="spacingAndGlyphs">TOTAL</text><rect x="859.5" y="700.5" width="840" height="205" rx="2" fill="#181b1f" stroke="#2e3035" stroke-width="1"/><text x="867" y="716.5" font-size="11.4" fill="#ccccdc" textLength="156" lengthAdjust="spacingAndGlyphs" stroke="#ccccdc" stroke-width="0.2">Value Sent Through Network</text><circle cx="1043.1" cy="712.8" r="4.9" fill="none" stroke="#6e9fff" stroke-width="1.3"/><path d="M1043.1 710.1V712.8H1040.65" fill="none" stroke="#6e9fff" stroke-width="1.3"/><text x="1052.7" y="716.4" font-size="11.5" fill="#6e9fff" textLength="68" lengthAdjust="spacingAndGlyphs">Last 1 month</text><g transform="translate(0,0.7)"><path d="M943.3 863.9H1687.3M943.3 832.72H1687.3M943.3 801.54H1687.3M943.3 770.36H1687.3M943.3 739.18H1687.3M954.6 739.2V864.4M1002.6 739.2V864.4M1050.6 739.2V864.4M1098.6 739.2V864.4M1146.6 739.2V864.4M1194.6 739.2V864.4M1242.6 739.2V864.4M1290.6 739.2V864.4M1338.6 739.2V864.4M1386.6 739.2V864.4M1434.6 739.2V864.4M1482.6 739.2V864.4M1530.6 739.2V864.4M1578.6 739.2V864.4M1626.6 739.2V864.4M1674.6 739.2V864.4" stroke="#2c2e33" stroke-width="1" fill="none"/><text x="938.5" y="867.4" font-size="9.9" fill="#c7c8d2" text-anchor="end" textLength="33.65" lengthAdjust="spacingAndGlyphs">0.0000</text><text x="938.5" y="836.22" font-size="9.9" fill="#c7c8d2" text-anchor="end" textLength="66.8" lengthAdjust="spacingAndGlyphs">1000000.0000</text><text x="938.5" y="805.04" font-size="9.9" fill="#c7c8d2" text-anchor="end" textLength="69.35" lengthAdjust="spacingAndGlyphs">2000000.0000</text><text x="938.5" y="773.86" font-size="9.9" fill="#c7c8d2" text-anchor="end" textLength="69.35" lengthAdjust="spacingAndGlyphs">3000000.0000</text><text x="938.5" y="742.68" font-size="9.9" fill="#c7c8d2" text-anchor="end" textLength="69.35" lengthAdjust="spacingAndGlyphs">4000000.0000</text></g><text x="954.2" y="879.06" font-size="9.9" fill="#c7c8d2" text-anchor="middle" textLength="23.2" lengthAdjust="spacingAndGlyphs" clip-path="url(#c21)">03/11</text><text x="1002.2" y="879.06" font-size="9.9" fill="#c7c8d2" text-anchor="middle" textLength="25.75" lengthAdjust="spacingAndGlyphs" clip-path="url(#c21)">03/13</text><text x="1050.2" y="879.06" font-size="9.9" fill="#c7c8d2" text-anchor="middle" textLength="25.75" lengthAdjust="spacingAndGlyphs" clip-path="url(#c21)">03/15</text><text x="1098.2" y="879.06" font-size="9.9" fill="#c7c8d2" text-anchor="middle" textLength="25.75" lengthAdjust="spacingAndGlyphs" clip-path="url(#c21)">03/17</text><text x="1146.2" y="879.06" font-size="9.9" fill="#c7c8d2" text-anchor="middle" textLength="25.75" lengthAdjust="spacingAndGlyphs" clip-path="url(#c21)">03/19</text><text x="1194.2" y="879.06" font-size="9.9" fill="#c7c8d2" text-anchor="middle" textLength="25.75" lengthAdjust="spacingAndGlyphs" clip-path="url(#c21)">03/21</text><text x="1242.2" y="879.06" font-size="9.9" fill="#c7c8d2" text-anchor="middle" textLength="28.3" lengthAdjust="spacingAndGlyphs" clip-path="url(#c21)">03/23</text><text x="1290.2" y="879.06" font-size="9.9" fill="#c7c8d2" text-anchor="middle" textLength="28.3" lengthAdjust="spacingAndGlyphs" clip-path="url(#c21)">03/25</text><text x="1338.2" y="879.06" font-size="9.9" fill="#c7c8d2" text-anchor="middle" textLength="28.3" lengthAdjust="spacingAndGlyphs" clip-path="url(#c21)">03/27</text><text x="1386.2" y="879.06" font-size="9.9" fill="#c7c8d2" text-anchor="middle" textLength="28.3" lengthAdjust="spacingAndGlyphs" clip-path="url(#c21)">03/29</text><text x="1434.2" y="879.06" font-size="9.9" fill="#c7c8d2" text-anchor="middle" textLength="25.75" lengthAdjust="spacingAndGlyphs" clip-path="url(#c21)">03/31</text><text x="1482.2" y="879.06" font-size="9.9" fill="#c7c8d2" text-anchor="middle" textLength="28.3" lengthAdjust="spacingAndGlyphs" clip-path="url(#c21)">04/02</text><text x="1530.2" y="879.06" font-size="9.9" fill="#c7c8d2" text-anchor="middle" textLength="28.3" lengthAdjust="spacingAndGlyphs" clip-path="url(#c21)">04/04</text><text x="1578.2" y="879.06" font-size="9.9" fill="#c7c8d2" text-anchor="middle" textLength="28.3" lengthAdjust="spacingAndGlyphs" clip-path="url(#c21)">04/06</text><text x="1626.2" y="879.06" font-size="9.9" fill="#c7c8d2" text-anchor="middle" textLength="28.3" lengthAdjust="spacingAndGlyphs" clip-path="url(#c21)">04/08</text><text x="1674.2" y="879.06" font-size="9.9" fill="#c7c8d2" text-anchor="middle" textLength="25.75" lengthAdjust="spacingAndGlyphs" clip-path="url(#c21)">04/10</text><g transform="translate(0,0.7)"><g clip-path="url(#c22)"><path d="M980.6 863.9 L980.6 863.9 L992.6 863.9 L1004.6 863.9 L1016.6 863.9 L1028.6 863.9 L1040.6 863.9 L1052.6 863.9 L1064.6 863.9 L1076.6 863.9 L1088.6 863.9 L1100.6 863.9 L1112.6 863.9 L1124.6 863.9 L1136.6 863.9 L1148.6 863.9 L1160.6 863.9 L1172.6 863.9 L1184.6 863.9 L1196.6 863.9 L1208.6 863.9 L1220.6 863.9 L1232.6 863.9 L1244.6 863.9 L1256.6 863.9 L1268.6 863.9 L1280.6 863.9 L1292.6 863.9 L1304.6 863.9 L1316.6 863.9 L1328.6 863.9 L1340.6 859.22 L1352.6 863.9 L1364.6 860.16 L1376.6 863.9 L1388.6 863.9 L1400.6 863.9 L1412.6 863.9 L1424.6 863.9 L1436.6 863.9 L1448.6 863.9 L1460.6 863.9 L1472.6 863.9 L1484.6 863.9 L1496.6 863.9 L1508.6 863.9 L1520.6 863.9 L1532.6 863.9 L1544.6 863.9 L1556.6 863.9 L1568.6 863.9 L1580.6 863.9 L1592.6 863.9 L1604.6 864.84 L1616.6 863.28 L1628.6 862.34 L1640.6 862.34 L1652.6 784.7 L1664.6 765.06 L1676.6 751.34 L1676.6 863.9 Z" fill="#73bf69" fill-opacity="0.05" stroke="none"/><path d="M980.6 863.9 L992.6 863.9 L1004.6 863.9 L1016.6 863.9 L1028.6 863.9 L1040.6 863.9 L1052.6 863.9 L1064.6 863.9 L1076.6 863.9 L1088.6 863.9 L1100.6 863.9 L1112.6 863.9 L1124.6 863.9 L1136.6 863.9 L1148.6 863.9 L1160.6 863.9 L1172.6 863.9 L1184.6 863.9 L1196.6 863.9 L1208.6 863.9 L1220.6 863.9 L1232.6 863.9 L1244.6 863.9 L1256.6 863.9 L1268.6 863.9 L1280.6 863.9 L1292.6 863.9 L1304.6 863.9 L1316.6 863.9 L1328.6 863.9 L1340.6 859.22 L1352.6 863.9 L1364.6 860.16 L1376.6 863.9 L1388.6 863.9 L1400.6 863.9 L1412.6 863.9 L1424.6 863.9 L1436.6 863.9 L1448.6 863.9 L1460.6 863.9 L1472.6 863.9 L1484.6 863.9 L1496.6 863.9 L1508.6 863.9 L1520.6 863.9 L1532.6 863.9 L1544.6 863.9 L1556.6 863.9 L1568.6 863.9 L1580.6 863.9 L1592.6 863.9 L1604.6 864.84 L1616.6 863.28 L1628.6 862.34 L1640.6 862.34 L1652.6 784.7 L1664.6 765.06 L1676.6 751.34" fill="none" stroke="#73bf69" stroke-width="2.4" stroke-linejoin="round" stroke-linecap="round"/></g></g><rect x="869" y="888.5" width="12" height="4" rx="2" fill="#73bf69"/><text x="887.6" y="893.4" font-size="10.3" fill="#ccccdc" textLength="21.3" lengthAdjust="spacingAndGlyphs">Total</text><rect x="1706.5" y="700.5" width="840" height="205" rx="2" fill="#181b1f" stroke="#2e3035" stroke-width="1"/><text x="1714" y="716.5" font-size="11.4" fill="#ccccdc" textLength="157" lengthAdjust="spacingAndGlyphs" stroke="#ccccdc" stroke-width="0.2">Transaction Average Amount</text><circle cx="1890.1" cy="712.8" r="4.9" fill="none" stroke="#6e9fff" stroke-width="1.3"/><path d="M1890.1 710.1V712.8H1887.65" fill="none" stroke="#6e9fff" stroke-width="1.3"/><text x="1899.7" y="716.4" font-size="11.5" fill="#6e9fff" textLength="68" lengthAdjust="spacingAndGlyphs">Last 1 month</text><g transform="translate(0,0.7)"><path d="M1771.3 863.9H2534M1771.3 832.72H2534M1771.3 801.54H2534M1771.3 770.36H2534M1771.3 739.18H2534M1783.3 739.2V864.4M1832.5 739.2V864.4M1881.7 739.2V864.4M1930.9 739.2V864.4M1980.1 739.2V864.4M2029.3 739.2V864.4M2078.5 739.2V864.4M2127.7 739.2V864.4M2176.9 739.2V864.4M2226.1 739.2V864.4M2275.3 739.2V864.4M2324.5 739.2V864.4M2373.7 739.2V864.4M2422.9 739.2V864.4M2472.1 739.2V864.4M2521.3 739.2V864.4" stroke="#2c2e33" stroke-width="1" fill="none"/><text x="1766.5" y="867.4" font-size="9.9" fill="#c7c8d2" text-anchor="end" textLength="33.65" lengthAdjust="spacingAndGlyphs">0.0000</text><text x="1766.5" y="836.22" font-size="9.9" fill="#c7c8d2" text-anchor="end" textLength="45.55" lengthAdjust="spacingAndGlyphs">500.0000</text><text x="1766.5" y="805.04" font-size="9.9" fill="#c7c8d2" text-anchor="end" textLength="48.95" lengthAdjust="spacingAndGlyphs">1000.0000</text><text x="1766.5" y="773.86" font-size="9.9" fill="#c7c8d2" text-anchor="end" textLength="48.95" lengthAdjust="spacingAndGlyphs">1500.0000</text><text x="1766.5" y="742.68" font-size="9.9" fill="#c7c8d2" text-anchor="end" textLength="51.5" lengthAdjust="spacingAndGlyphs">2000.0000</text></g><text x="1782.9" y="879.06" font-size="9.9" fill="#c7c8d2" text-anchor="middle" textLength="23.2" lengthAdjust="spacingAndGlyphs" clip-path="url(#c23)">03/11</text><text x="1832.1" y="879.06" font-size="9.9" fill="#c7c8d2" text-anchor="middle" textLength="25.75" lengthAdjust="spacingAndGlyphs" clip-path="url(#c23)">03/13</text><text x="1881.3" y="879.06" font-size="9.9" fill="#c7c8d2" text-anchor="middle" textLength="25.75" lengthAdjust="spacingAndGlyphs" clip-path="url(#c23)">03/15</text><text x="1930.5" y="879.06" font-size="9.9" fill="#c7c8d2" text-anchor="middle" textLength="25.75" lengthAdjust="spacingAndGlyphs" clip-path="url(#c23)">03/17</text><text x="1979.7" y="879.06" font-size="9.9" fill="#c7c8d2" text-anchor="middle" textLength="25.75" lengthAdjust="spacingAndGlyphs" clip-path="url(#c23)">03/19</text><text x="2028.9" y="879.06" font-size="9.9" fill="#c7c8d2" text-anchor="middle" textLength="25.75" lengthAdjust="spacingAndGlyphs" clip-path="url(#c23)">03/21</text><text x="2078.1" y="879.06" font-size="9.9" fill="#c7c8d2" text-anchor="middle" textLength="28.3" lengthAdjust="spacingAndGlyphs" clip-path="url(#c23)">03/23</text><text x="2127.3" y="879.06" font-size="9.9" fill="#c7c8d2" text-anchor="middle" textLength="28.3" lengthAdjust="spacingAndGlyphs" clip-path="url(#c23)">03/25</text><text x="2176.5" y="879.06" font-size="9.9" fill="#c7c8d2" text-anchor="middle" textLength="28.3" lengthAdjust="spacingAndGlyphs" clip-path="url(#c23)">03/27</text><text x="2225.7" y="879.06" font-size="9.9" fill="#c7c8d2" text-anchor="middle" textLength="28.3" lengthAdjust="spacingAndGlyphs" clip-path="url(#c23)">03/29</text><text x="2274.9" y="879.06" font-size="9.9" fill="#c7c8d2" text-anchor="middle" textLength="25.75" lengthAdjust="spacingAndGlyphs" clip-path="url(#c23)">03/31</text><text x="2324.1" y="879.06" font-size="9.9" fill="#c7c8d2" text-anchor="middle" textLength="28.3" lengthAdjust="spacingAndGlyphs" clip-path="url(#c23)">04/02</text><text x="2373.3" y="879.06" font-size="9.9" fill="#c7c8d2" text-anchor="middle" textLength="28.3" lengthAdjust="spacingAndGlyphs" clip-path="url(#c23)">04/04</text><text x="2422.5" y="879.06" font-size="9.9" fill="#c7c8d2" text-anchor="middle" textLength="28.3" lengthAdjust="spacingAndGlyphs" clip-path="url(#c23)">04/06</text><text x="2471.7" y="879.06" font-size="9.9" fill="#c7c8d2" text-anchor="middle" textLength="28.3" lengthAdjust="spacingAndGlyphs" clip-path="url(#c23)">04/08</text><text x="2520.9" y="879.06" font-size="9.9" fill="#c7c8d2" text-anchor="middle" textLength="25.75" lengthAdjust="spacingAndGlyphs" clip-path="url(#c23)">04/10</text><g transform="translate(0,0.7)"><g clip-path="url(#c24)"><path d="M1809.95 863.9 L1809.95 863.09 L1822.25 863.09 L1834.55 863.09 L1846.85 863.09 L1859.15 863.09 L1871.45 863.09 L1883.75 863.09 L1896.05 863.09 L1908.35 863.09 L1920.65 863.09 L1932.95 863.09 L1945.25 863.09 L1957.55 863.09 L1969.85 863.09 L1982.15 863.09 L1994.45 863.09 L2006.75 863.09 L2019.05 863.09 L2031.35 863.09 L2043.65 863.09 L2055.95 863.09 L2068.25 863.09 L2080.55 863.09 L2092.85 863.09 L2105.15 863.09 L2117.45 863.09 L2129.75 863.09 L2142.05 863.09 L2154.35 863.09 L2166.65 863.09 L2178.95 862.03 L2191.25 751.96 L2203.55 863.9 L2215.85 863.09 L2228.15 863.09 L2240.45 862.34 L2252.75 862.34 L2265.05 862.34 L2277.35 862.34 L2289.65 862.34 L2301.95 862.34 L2314.25 862.34 L2326.55 863.09 L2338.85 862.34 L2351.15 861.09 L2363.45 863.09 L2375.75 862.34 L2388.05 863.9 L2400.35 858.29 L2412.65 863.09 L2424.95 863.09 L2437.25 863.09 L2449.55 864.52 L2461.85 863.09 L2474.15 863.09 L2486.45 863.09 L2498.75 859.22 L2511.05 858.6 L2523.35 858.6 L2523.35 863.9 Z" fill="#73bf69" fill-opacity="0.05" stroke="none"/><path d="M1809.95 863.09 L1822.25 863.09 L1834.55 863.09 L1846.85 863.09 L1859.15 863.09 L1871.45 863.09 L1883.75 863.09 L1896.05 863.09 L1908.35 863.09 L1920.65 863.09 L1932.95 863.09 L1945.25 863.09 L1957.55 863.09 L1969.85 863.09 L1982.15 863.09 L1994.45 863.09 L2006.75 863.09 L2019.05 863.09 L2031.35 863.09 L2043.65 863.09 L2055.95 863.09 L2068.25 863.09 L2080.55 863.09 L2092.85 863.09 L2105.15 863.09 L2117.45 863.09 L2129.75 863.09 L2142.05 863.09 L2154.35 863.09 L2166.65 863.09 L2178.95 862.03 L2191.25 751.96 L2203.55 863.9 L2215.85 863.09 L2228.15 863.09 L2240.45 862.34 L2252.75 862.34 L2265.05 862.34 L2277.35 862.34 L2289.65 862.34 L2301.95 862.34 L2314.25 862.34 L2326.55 863.09 L2338.85 862.34 L2351.15 861.09 L2363.45 863.09 L2375.75 862.34 L2388.05 863.9 L2400.35 858.29 L2412.65 863.09 L2424.95 863.09 L2437.25 863.09 L2449.55 864.52 L2461.85 863.09 L2474.15 863.09 L2486.45 863.09 L2498.75 859.22 L2511.05 858.6 L2523.35 858.6" fill="none" stroke="#73bf69" stroke-width="2.4" stroke-linejoin="round" stroke-linecap="round"/></g></g><rect x="1716" y="888.5" width="12" height="4" rx="2" fill="#73bf69"/><text x="1734.6" y="893.4" font-size="10.3" fill="#ccccdc" textLength="131.1" lengthAdjust="spacingAndGlyphs">Transaction average amount</text>
</svg></body></html>
